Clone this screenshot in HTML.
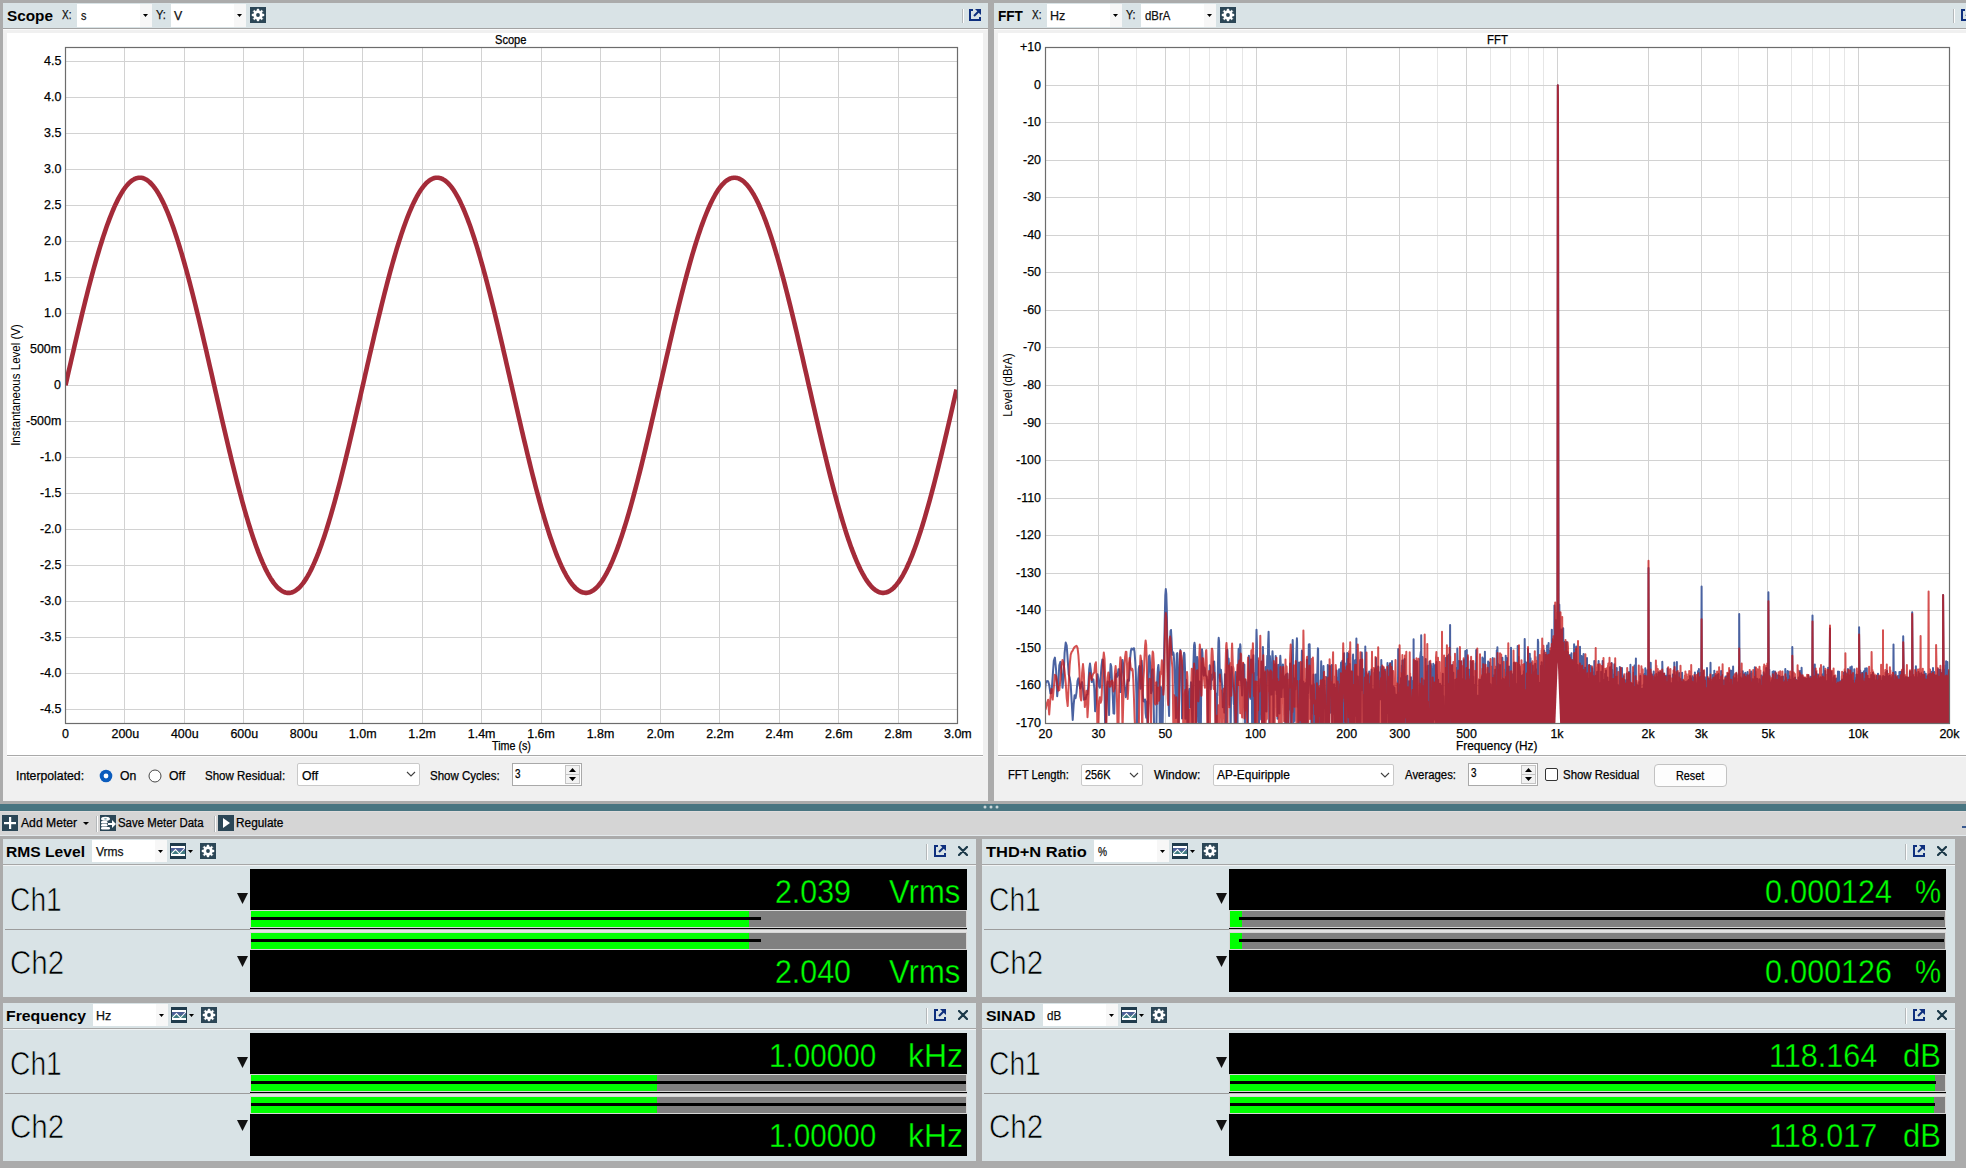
<!DOCTYPE html><html><head><meta charset="utf-8"><style>*{margin:0;padding:0}body{width:1966px;height:1168px;overflow:hidden;position:relative;background:#ababab}body>div,body>svg{position:absolute}.t{position:absolute;white-space:pre;font-family:'Liberation Sans',sans-serif}</style></head><body><div style="left:0px;top:0px;width:1966px;height:1168px;background:#ababab;"></div><div style="left:3px;top:3px;width:985px;height:25px;background:#d9e3e6;"></div><div style="left:3px;top:28px;width:985px;height:1px;background:#a3a3a3;"></div><div style="left:3px;top:29px;width:985px;height:772px;background:#f0f0f0;"></div><div style="left:3px;top:29px;width:985px;height:1px;background:#fbfbfb;"></div><div style="left:7px;top:33px;width:976px;height:722px;background:#fff;"></div><div style="left:7px;top:755px;width:976px;height:1px;background:#a9a9a9;"></div><div style="left:7px;top:756px;width:976px;height:1px;background:#fcfcfc;"></div><div style="left:994px;top:3px;width:972px;height:25px;background:#d9e3e6;"></div><div style="left:994px;top:28px;width:972px;height:1px;background:#a3a3a3;"></div><div style="left:994px;top:29px;width:972px;height:772px;background:#f0f0f0;"></div><div style="left:994px;top:29px;width:972px;height:1px;background:#fbfbfb;"></div><div style="left:998px;top:33px;width:968px;height:722px;background:#fff;"></div><div style="left:998px;top:755px;width:968px;height:1px;background:#a9a9a9;"></div><div style="left:998px;top:756px;width:968px;height:1px;background:#fcfcfc;"></div><div style="left:0px;top:804px;width:1966px;height:7px;background:#487581;"></div><svg style="left:983px;top:805px;" width="4" height="4" viewBox="0 0 4 4"><circle cx="2" cy="2" r="1.5" fill="#c9d5d8"/></svg><svg style="left:989px;top:805px;" width="4" height="4" viewBox="0 0 4 4"><circle cx="2" cy="2" r="1.5" fill="#c9d5d8"/></svg><svg style="left:995px;top:805px;" width="4" height="4" viewBox="0 0 4 4"><circle cx="2" cy="2" r="1.5" fill="#c9d5d8"/></svg><div style="left:0px;top:811px;width:1966px;height:24px;background:#d5d5d5;"></div><div style="left:0px;top:811px;width:1966px;height:1px;background:#e0dcdc;"></div><div style="left:0px;top:835px;width:1966px;height:1px;background:#e3e9ec;"></div><div style="left:77px;top:4px;width:75px;height:23px;background:#fff;"></div><div style="left:140px;top:4px;width:12px;height:23px;background:#f7f7f7;"></div><svg style="left:143px;top:14px;" width="5" height="3" viewBox="0 0 5 3"><polygon points="0,0 5,0 2.5,3" fill="#000"/></svg><div style="left:171px;top:4px;width:75px;height:23px;background:#fff;"></div><div style="left:234px;top:4px;width:12px;height:23px;background:#f7f7f7;"></div><svg style="left:237px;top:14px;" width="5" height="3" viewBox="0 0 5 3"><polygon points="0,0 5,0 2.5,3" fill="#000"/></svg><svg style="left:250px;top:7px;" width="16" height="16" viewBox="0 0 16 16"><rect width="16" height="16" fill="#2b4656"/><g transform="translate(8,8)"><path d="M-1.72,-4.16 L-1.01,-4.38 L-0.95,-6.02 L0.95,-6.02 L1.01,-4.38 L1.72,-4.16 L2.38,-3.82 L3.59,-4.94 L4.94,-3.59 L3.82,-2.38 L4.16,-1.72 L4.38,-1.01 L6.02,-0.95 L6.02,0.95 L4.38,1.01 L4.16,1.72 L3.82,2.38 L4.94,3.59 L3.59,4.94 L2.38,3.82 L1.72,4.16 L1.01,4.38 L0.95,6.02 L-0.95,6.02 L-1.01,4.38 L-1.72,4.16 L-2.38,3.82 L-3.59,4.94 L-4.94,3.59 L-3.82,2.38 L-4.16,1.72 L-4.38,1.01 L-6.02,0.95 L-6.02,-0.95 L-4.38,-1.01 L-4.16,-1.72 L-3.82,-2.38 L-4.94,-3.59 L-3.59,-4.94 L-2.38,-3.82Z" fill="#fff" stroke="#fff" stroke-width="0.4" stroke-linejoin="round"/><circle r="1.9" fill="#2b4656"/></g></svg><div style="left:962px;top:9px;width:1px;height:14px;background:#b4b8ba;"></div><div style="left:963px;top:9px;width:1px;height:14px;background:#fdfdfd;"></div><svg style="left:969px;top:9px;" width="12" height="12" viewBox="0 0 12 12"><path d="M0,0 H4 V2 H2 V10 H10 V8 H12 V12 H0 Z" fill="#0e2f7e"/><path d="M6,0 H12 V6 Z" fill="#0e2f7e"/><line x1="5" y1="7" x2="9.5" y2="2.5" stroke="#0e2f7e" stroke-width="2"/></svg><div style="left:1047px;top:4px;width:75px;height:23px;background:#fff;"></div><div style="left:1110px;top:4px;width:12px;height:23px;background:#f7f7f7;"></div><svg style="left:1113px;top:14px;" width="5" height="3" viewBox="0 0 5 3"><polygon points="0,0 5,0 2.5,3" fill="#000"/></svg><div style="left:1141px;top:4px;width:75px;height:23px;background:#fff;"></div><div style="left:1204px;top:4px;width:12px;height:23px;background:#f7f7f7;"></div><svg style="left:1207px;top:14px;" width="5" height="3" viewBox="0 0 5 3"><polygon points="0,0 5,0 2.5,3" fill="#000"/></svg><svg style="left:1220px;top:7px;" width="16" height="16" viewBox="0 0 16 16"><rect width="16" height="16" fill="#2b4656"/><g transform="translate(8,8)"><path d="M-1.72,-4.16 L-1.01,-4.38 L-0.95,-6.02 L0.95,-6.02 L1.01,-4.38 L1.72,-4.16 L2.38,-3.82 L3.59,-4.94 L4.94,-3.59 L3.82,-2.38 L4.16,-1.72 L4.38,-1.01 L6.02,-0.95 L6.02,0.95 L4.38,1.01 L4.16,1.72 L3.82,2.38 L4.94,3.59 L3.59,4.94 L2.38,3.82 L1.72,4.16 L1.01,4.38 L0.95,6.02 L-0.95,6.02 L-1.01,4.38 L-1.72,4.16 L-2.38,3.82 L-3.59,4.94 L-4.94,3.59 L-3.82,2.38 L-4.16,1.72 L-4.38,1.01 L-6.02,0.95 L-6.02,-0.95 L-4.38,-1.01 L-4.16,-1.72 L-3.82,-2.38 L-4.94,-3.59 L-3.59,-4.94 L-2.38,-3.82Z" fill="#fff" stroke="#fff" stroke-width="0.4" stroke-linejoin="round"/><circle r="1.9" fill="#2b4656"/></g></svg><div style="left:1953px;top:9px;width:1px;height:14px;background:#b4b8ba;"></div><div style="left:1954px;top:9px;width:1px;height:14px;background:#fdfdfd;"></div><svg style="left:1961px;top:9px;" width="12" height="12" viewBox="0 0 12 12"><path d="M0,0 H4 V2 H2 V10 H10 V8 H12 V12 H0 Z" fill="#0e2f7e"/><path d="M6,0 H12 V6 Z" fill="#0e2f7e"/><line x1="5" y1="7" x2="9.5" y2="2.5" stroke="#0e2f7e" stroke-width="2"/></svg><svg style="left:0px;top:0px;" width="1966" height="800" viewBox="0 0 1966 800"><path d="M124.5,47V723M184.5,47V723M243.5,47V723M303.5,47V723M362.5,47V723M422.5,47V723M481.5,47V723M541.5,47V723M600.5,47V723M660.5,47V723M719.5,47V723M779.5,47V723M838.5,47V723M898.5,47V723M65,709.5H957M65,673.5H957M65,637.5H957M65,601.5H957M65,565.5H957M65,529.5H957M65,493.5H957M65,457.5H957M65,421.5H957M65,385.5H957M65,349.5H957M65,313.5H957M65,277.5H957M65,241.5H957M65,205.5H957M65,169.5H957M65,133.5H957M65,97.5H957M65,61.5H957" stroke="#d2d2d2" stroke-width="1" fill="none"/><clipPath id="sc"><rect x="66" y="48" width="891" height="675"/></clipPath><polyline clip-path="url(#sc)" points="65.5,385.3 66.5,380.9 67.5,376.5 68.5,372.1 69.5,367.8 70.5,363.4 71.5,359.0 72.5,354.7 73.5,350.4 74.5,346.1 75.5,341.8 76.5,337.5 77.5,333.2 78.5,329.0 79.5,324.8 80.5,320.6 81.5,316.4 82.5,312.3 83.5,308.2 84.5,304.2 85.5,300.1 86.5,296.2 87.5,292.2 88.5,288.3 89.5,284.5 90.5,280.7 91.5,276.9 92.5,273.2 93.5,269.5 94.5,265.9 95.5,262.3 96.5,258.8 97.5,255.4 98.5,252.0 99.5,248.6 100.5,245.4 101.5,242.2 102.5,239.0 103.5,235.9 104.5,232.9 105.5,230.0 106.5,227.1 107.5,224.3 108.5,221.6 109.5,218.9 110.5,216.3 111.5,213.8 112.5,211.4 113.5,209.0 114.5,206.7 115.5,204.5 116.5,202.4 117.5,200.4 118.5,198.4 119.5,196.6 120.5,194.8 121.5,193.1 122.5,191.5 123.5,189.9 124.5,188.5 125.5,187.1 126.5,185.9 127.5,184.7 128.5,183.6 129.5,182.6 130.5,181.7 131.5,180.9 132.5,180.2 133.5,179.6 134.5,179.0 135.5,178.6 136.5,178.2 137.5,178.0 138.5,177.8 139.5,177.7 140.5,177.7 141.5,177.8 142.5,178.0 143.5,178.3 144.5,178.7 145.5,179.2 146.5,179.8 147.5,180.4 148.5,181.2 149.5,182.0 150.5,183.0 151.5,184.0 152.5,185.1 153.5,186.3 154.5,187.6 155.5,189.0 156.5,190.4 157.5,192.0 158.5,193.6 159.5,195.4 160.5,197.2 161.5,199.1 162.5,201.1 163.5,203.1 164.5,205.3 165.5,207.5 166.5,209.8 167.5,212.2 168.5,214.6 169.5,217.2 170.5,219.8 171.5,222.5 172.5,225.2 173.5,228.1 174.5,231.0 175.5,233.9 176.5,237.0 177.5,240.1 178.5,243.2 179.5,246.5 180.5,249.8 181.5,253.1 182.5,256.5 183.5,260.0 184.5,263.5 185.5,267.1 186.5,270.7 187.5,274.4 188.5,278.1 189.5,281.9 190.5,285.8 191.5,289.6 192.5,293.5 193.5,297.5 194.5,301.5 195.5,305.5 196.5,309.6 197.5,313.7 198.5,317.8 199.5,322.0 200.5,326.2 201.5,330.4 202.5,334.6 203.5,338.9 204.5,343.2 205.5,347.5 206.5,351.8 207.5,356.2 208.5,360.5 209.5,364.9 210.5,369.2 211.5,373.6 212.5,378.0 213.5,382.4 214.5,386.8 215.5,391.2 216.5,395.5 217.5,399.9 218.5,404.3 219.5,408.7 220.5,413.0 221.5,417.4 222.5,421.7 223.5,426.0 224.5,430.3 225.5,434.6 226.5,438.8 227.5,443.0 228.5,447.2 229.5,451.4 230.5,455.5 231.5,459.7 232.5,463.7 233.5,467.8 234.5,471.8 235.5,475.8 236.5,479.7 237.5,483.6 238.5,487.4 239.5,491.2 240.5,495.0 241.5,498.7 242.5,502.3 243.5,505.9 244.5,509.5 245.5,512.9 246.5,516.4 247.5,519.7 248.5,523.1 249.5,526.3 250.5,529.5 251.5,532.6 252.5,535.7 253.5,538.7 254.5,541.6 255.5,544.4 256.5,547.2 257.5,549.9 258.5,552.6 259.5,555.1 260.5,557.6 261.5,560.0 262.5,562.4 263.5,564.6 264.5,566.8 265.5,568.9 266.5,570.9 267.5,572.8 268.5,574.6 269.5,576.4 270.5,578.1 271.5,579.7 272.5,581.1 273.5,582.6 274.5,583.9 275.5,585.1 276.5,586.3 277.5,587.3 278.5,588.3 279.5,589.2 280.5,589.9 281.5,590.6 282.5,591.2 283.5,591.7 284.5,592.2 285.5,592.5 286.5,592.7 287.5,592.9 288.5,592.9 289.5,592.9 290.5,592.7 291.5,592.5 292.5,592.2 293.5,591.7 294.5,591.2 295.5,590.6 296.5,589.9 297.5,589.2 298.5,588.3 299.5,587.3 300.5,586.3 301.5,585.1 302.5,583.9 303.5,582.6 304.5,581.1 305.5,579.6 306.5,578.1 307.5,576.4 308.5,574.6 309.5,572.8 310.5,570.9 311.5,568.9 312.5,566.8 313.5,564.6 314.5,562.3 315.5,560.0 316.5,557.6 317.5,555.1 318.5,552.6 319.5,549.9 320.5,547.2 321.5,544.4 322.5,541.6 323.5,538.7 324.5,535.7 325.5,532.6 326.5,529.5 327.5,526.3 328.5,523.0 329.5,519.7 330.5,516.4 331.5,512.9 332.5,509.4 333.5,505.9 334.5,502.3 335.5,498.6 336.5,494.9 337.5,491.2 338.5,487.4 339.5,483.6 340.5,479.7 341.5,475.7 342.5,471.8 343.5,467.8 344.5,463.7 345.5,459.6 346.5,455.5 347.5,451.4 348.5,447.2 349.5,443.0 350.5,438.8 351.5,434.5 352.5,430.3 353.5,426.0 354.5,421.7 355.5,417.3 356.5,413.0 357.5,408.6 358.5,404.3 359.5,399.9 360.5,395.5 361.5,391.1 362.5,386.7 363.5,382.4 364.5,378.0 365.5,373.6 366.5,369.2 367.5,364.8 368.5,360.5 369.5,356.1 370.5,351.8 371.5,347.5 372.5,343.2 373.5,338.9 374.5,334.6 375.5,330.4 376.5,326.2 377.5,322.0 378.5,317.8 379.5,313.7 380.5,309.6 381.5,305.5 382.5,301.5 383.5,297.5 384.5,293.5 385.5,289.6 386.5,285.7 387.5,281.9 388.5,278.1 389.5,274.4 390.5,270.7 391.5,267.1 392.5,263.5 393.5,260.0 394.5,256.5 395.5,253.1 396.5,249.7 397.5,246.4 398.5,243.2 399.5,240.1 400.5,237.0 401.5,233.9 402.5,230.9 403.5,228.0 404.5,225.2 405.5,222.5 406.5,219.8 407.5,217.2 408.5,214.6 409.5,212.2 410.5,209.8 411.5,207.5 412.5,205.3 413.5,203.1 414.5,201.1 415.5,199.1 416.5,197.2 417.5,195.4 418.5,193.6 419.5,192.0 420.5,190.4 421.5,189.0 422.5,187.6 423.5,186.3 424.5,185.1 425.5,184.0 426.5,182.9 427.5,182.0 428.5,181.2 429.5,180.4 430.5,179.8 431.5,179.2 432.5,178.7 433.5,178.3 434.5,178.0 435.5,177.8 436.5,177.7 437.5,177.7 438.5,177.8 439.5,178.0 440.5,178.2 441.5,178.6 442.5,179.0 443.5,179.6 444.5,180.2 445.5,180.9 446.5,181.7 447.5,182.6 448.5,183.6 449.5,184.7 450.5,185.9 451.5,187.2 452.5,188.5 453.5,189.9 454.5,191.5 455.5,193.1 456.5,194.8 457.5,196.6 458.5,198.4 459.5,200.4 460.5,202.4 461.5,204.6 462.5,206.8 463.5,209.0 464.5,211.4 465.5,213.8 466.5,216.3 467.5,218.9 468.5,221.6 469.5,224.3 470.5,227.1 471.5,230.0 472.5,232.9 473.5,236.0 474.5,239.0 475.5,242.2 476.5,245.4 477.5,248.7 478.5,252.0 479.5,255.4 480.5,258.8 481.5,262.3 482.5,265.9 483.5,269.5 484.5,273.2 485.5,276.9 486.5,280.7 487.5,284.5 488.5,288.3 489.5,292.2 490.5,296.2 491.5,300.2 492.5,304.2 493.5,308.2 494.5,312.3 495.5,316.5 496.5,320.6 497.5,324.8 498.5,329.0 499.5,333.2 500.5,337.5 501.5,341.8 502.5,346.1 503.5,350.4 504.5,354.7 505.5,359.1 506.5,363.4 507.5,367.8 508.5,372.2 509.5,376.6 510.5,380.9 511.5,385.3 512.5,389.7 513.5,394.1 514.5,398.5 515.5,402.8 516.5,407.2 517.5,411.6 518.5,415.9 519.5,420.3 520.5,424.6 521.5,428.9 522.5,433.1 523.5,437.4 524.5,441.6 525.5,445.8 526.5,450.0 527.5,454.2 528.5,458.3 529.5,462.4 530.5,466.5 531.5,470.5 532.5,474.5 533.5,478.4 534.5,482.3 535.5,486.2 536.5,490.0 537.5,493.7 538.5,497.4 539.5,501.1 540.5,504.7 541.5,508.3 542.5,511.8 543.5,515.2 544.5,518.6 545.5,522.0 546.5,525.2 547.5,528.4 548.5,531.6 549.5,534.7 550.5,537.7 551.5,540.6 552.5,543.5 553.5,546.3 554.5,549.0 555.5,551.7 556.5,554.3 557.5,556.8 558.5,559.2 559.5,561.6 560.5,563.9 561.5,566.1 562.5,568.2 563.5,570.2 564.5,572.2 565.5,574.0 566.5,575.8 567.5,577.5 568.5,579.1 569.5,580.7 570.5,582.1 571.5,583.5 572.5,584.7 573.5,585.9 574.5,587.0 575.5,588.0 576.5,588.9 577.5,589.7 578.5,590.4 579.5,591.0 580.5,591.6 581.5,592.0 582.5,592.4 583.5,592.6 584.5,592.8 585.5,592.9 586.5,592.9 587.5,592.8 588.5,592.6 589.5,592.3 590.5,591.9 591.5,591.4 592.5,590.8 593.5,590.2 594.5,589.4 595.5,588.6 596.5,587.6 597.5,586.6 598.5,585.5 599.5,584.3 600.5,583.0 601.5,581.6 602.5,580.1 603.5,578.6 604.5,576.9 605.5,575.2 606.5,573.4 607.5,571.5 608.5,569.5 609.5,567.5 610.5,565.3 611.5,563.1 612.5,560.8 613.5,558.4 614.5,555.9 615.5,553.4 616.5,550.8 617.5,548.1 618.5,545.4 619.5,542.5 620.5,539.6 621.5,536.7 622.5,533.6 623.5,530.5 624.5,527.3 625.5,524.1 626.5,520.8 627.5,517.5 628.5,514.1 629.5,510.6 630.5,507.1 631.5,503.5 632.5,499.9 633.5,496.2 634.5,492.4 635.5,488.7 636.5,484.8 637.5,481.0 638.5,477.0 639.5,473.1 640.5,469.1 641.5,465.1 642.5,461.0 643.5,456.9 644.5,452.8 645.5,448.6 646.5,444.4 647.5,440.2 648.5,435.9 649.5,431.7 650.5,427.4 651.5,423.1 652.5,418.8 653.5,414.4 654.5,410.1 655.5,405.7 656.5,401.3 657.5,397.0 658.5,392.6 659.5,388.2 660.5,383.8 661.5,379.4 662.5,375.0 663.5,370.7 664.5,366.3 665.5,361.9 666.5,357.6 667.5,353.2 668.5,348.9 669.5,344.6 670.5,340.3 671.5,336.0 672.5,331.8 673.5,327.5 674.5,323.3 675.5,319.2 676.5,315.0 677.5,310.9 678.5,306.8 679.5,302.8 680.5,298.8 681.5,294.8 682.5,290.9 683.5,287.0 684.5,283.2 685.5,279.4 686.5,275.6 687.5,271.9 688.5,268.3 689.5,264.7 690.5,261.1 691.5,257.6 692.5,254.2 693.5,250.8 694.5,247.5 695.5,244.3 696.5,241.1 697.5,238.0 698.5,234.9 699.5,231.9 700.5,229.0 701.5,226.1 702.5,223.4 703.5,220.7 704.5,218.0 705.5,215.5 706.5,213.0 707.5,210.6 708.5,208.2 709.5,206.0 710.5,203.8 711.5,201.7 712.5,199.7 713.5,197.8 714.5,196.0 715.5,194.2 716.5,192.5 717.5,190.9 718.5,189.4 719.5,188.0 720.5,186.7 721.5,185.5 722.5,184.3 723.5,183.3 724.5,182.3 725.5,181.4 726.5,180.7 727.5,180.0 728.5,179.4 729.5,178.9 730.5,178.4 731.5,178.1 732.5,177.9 733.5,177.7 734.5,177.7 735.5,177.7 736.5,177.9 737.5,178.1 738.5,178.4 739.5,178.9 740.5,179.4 741.5,180.0 742.5,180.7 743.5,181.4 744.5,182.3 745.5,183.3 746.5,184.3 747.5,185.5 748.5,186.7 749.5,188.1 750.5,189.5 751.5,191.0 752.5,192.6 753.5,194.2 754.5,196.0 755.5,197.8 756.5,199.7 757.5,201.8 758.5,203.8 759.5,206.0 760.5,208.3 761.5,210.6 762.5,213.0 763.5,215.5 764.5,218.1 765.5,220.7 766.5,223.4 767.5,226.2 768.5,229.0 769.5,232.0 770.5,235.0 771.5,238.0 772.5,241.1 773.5,244.3 774.5,247.6 775.5,250.9 776.5,254.3 777.5,257.7 778.5,261.2 779.5,264.7 780.5,268.3 781.5,272.0 782.5,275.7 783.5,279.4 784.5,283.2 785.5,287.1 786.5,291.0 787.5,294.9 788.5,298.9 789.5,302.9 790.5,306.9 791.5,311.0 792.5,315.1 793.5,319.2 794.5,323.4 795.5,327.6 796.5,331.8 797.5,336.1 798.5,340.4 799.5,344.7 800.5,349.0 801.5,353.3 802.5,357.6 803.5,362.0 804.5,366.4 805.5,370.7 806.5,375.1 807.5,379.5 808.5,383.9 809.5,388.3 810.5,392.6 811.5,397.0 812.5,401.4 813.5,405.8 814.5,410.1 815.5,414.5 816.5,418.8 817.5,423.1 818.5,427.4 819.5,431.7 820.5,436.0 821.5,440.2 822.5,444.5 823.5,448.7 824.5,452.8 825.5,456.9 826.5,461.0 827.5,465.1 828.5,469.1 829.5,473.1 830.5,477.1 831.5,481.0 832.5,484.9 833.5,488.7 834.5,492.5 835.5,496.2 836.5,499.9 837.5,503.5 838.5,507.1 839.5,510.6 840.5,514.1 841.5,517.5 842.5,520.9 843.5,524.2 844.5,527.4 845.5,530.6 846.5,533.7 847.5,536.7 848.5,539.7 849.5,542.6 850.5,545.4 851.5,548.2 852.5,550.8 853.5,553.4 854.5,556.0 855.5,558.4 856.5,560.8 857.5,563.1 858.5,565.3 859.5,567.5 860.5,569.6 861.5,571.5 862.5,573.4 863.5,575.2 864.5,577.0 865.5,578.6 866.5,580.2 867.5,581.6 868.5,583.0 869.5,584.3 870.5,585.5 871.5,586.6 872.5,587.7 873.5,588.6 874.5,589.4 875.5,590.2 876.5,590.8 877.5,591.4 878.5,591.9 879.5,592.3 880.5,592.6 881.5,592.8 882.5,592.9 883.5,592.9 884.5,592.8 885.5,592.6 886.5,592.4 887.5,592.0 888.5,591.6 889.5,591.0 890.5,590.4 891.5,589.7 892.5,588.9 893.5,588.0 894.5,587.0 895.5,585.9 896.5,584.7 897.5,583.4 898.5,582.1 899.5,580.6 900.5,579.1 901.5,577.5 902.5,575.8 903.5,574.0 904.5,572.1 905.5,570.2 906.5,568.2 907.5,566.0 908.5,563.8 909.5,561.6 910.5,559.2 911.5,556.8 912.5,554.3 913.5,551.7 914.5,549.0 915.5,546.3 916.5,543.5 917.5,540.6 918.5,537.6 919.5,534.6 920.5,531.5 921.5,528.4 922.5,525.2 923.5,521.9 924.5,518.6 925.5,515.2 926.5,511.7 927.5,508.2 928.5,504.7 929.5,501.1 930.5,497.4 931.5,493.7 932.5,489.9 933.5,486.1 934.5,482.2 935.5,478.3 936.5,474.4 937.5,470.4 938.5,466.4 939.5,462.3 940.5,458.2 941.5,454.1 942.5,450.0 943.5,445.8 944.5,441.6 945.5,437.3 946.5,433.1 947.5,428.8 948.5,424.5 949.5,420.2 950.5,415.9 951.5,411.5 952.5,407.2 953.5,402.8 954.5,398.4 955.5,394.0 956.5,389.6" fill="none" stroke="#a42b39" stroke-width="4.6" stroke-linejoin="round"/><rect x="65.5" y="47.5" width="892" height="676" fill="none" stroke="#6c6c6c" stroke-width="1.2"/></svg><svg style="left:0px;top:0px;" width="1966" height="800" viewBox="0 0 1966 800"><path d="M1136.5,47V723M1189.5,47V723M1209.5,47V723M1226.5,47V723M1242.5,47V723M1437.5,47V723M1490.5,47V723M1510.5,47V723M1528.5,47V723M1543.5,47V723M1738.5,47V723M1791.5,47V723M1812.5,47V723M1829.5,47V723M1844.5,47V723" stroke="#e6e6e6" stroke-width="1" fill="none"/><path d="M1098.5,47V723M1165.5,47V723M1256.5,47V723M1346.5,47V723M1399.5,47V723M1466.5,47V723M1557.5,47V723M1648.5,47V723M1701.5,47V723M1767.5,47V723M1858.5,47V723M1045,85.5H1949M1045,122.5H1949M1045,160.5H1949M1045,197.5H1949M1045,235.5H1949M1045,272.5H1949M1045,310.5H1949M1045,347.5H1949M1045,385.5H1949M1045,423.5H1949M1045,460.5H1949M1045,498.5H1949M1045,535.5H1949M1045,573.5H1949M1045,610.5H1949M1045,648.5H1949M1045,685.5H1949" stroke="#d2d2d2" stroke-width="1" fill="none"/><clipPath id="fc"><rect x="1046" y="48" width="903" height="675"/></clipPath><g clip-path="url(#fc)"><polyline points="1031.8,684.2 1033.1,681.0 1034.4,699.4 1035.7,693.1 1037.0,660.4 1038.3,649.8 1039.5,653.1 1040.8,665.8 1042.0,687.5 1043.3,714.2 1044.5,696.4 1045.7,683.1 1046.9,681.1 1048.1,681.2 1049.2,684.9 1050.4,693.4 1051.5,693.1 1052.7,676.3 1053.8,660.8 1054.9,657.6 1056.1,670.0 1057.2,696.2 1058.3,683.8 1059.3,665.3 1060.4,661.9 1061.5,670.5 1062.5,687.8 1063.6,677.5 1064.6,652.9 1065.7,642.6 1066.7,645.5 1067.7,659.5 1068.7,674.5 1069.7,677.8 1070.7,684.3 1071.7,702.1 1072.7,719.9 1073.7,704.3 1074.6,695.2 1075.6,698.1 1076.5,692.6 1077.5,681.0 1078.4,678.4 1079.4,684.8 1080.3,688.6 1081.2,684.7 1082.1,682.1 1083.0,688.8 1083.9,699.7 1084.8,698.4 1085.7,699.1 1086.6,694.8 1087.5,694.4 1088.3,686.0 1089.2,669.1 1090.0,663.5 1090.9,670.7 1091.7,681.9 1092.6,681.1 1093.4,679.4 1094.3,688.5 1095.1,711.3 1095.9,703.3 1096.7,681.0 1097.5,674.3 1098.3,678.3 1099.1,686.5 1099.9,687.7 1100.7,677.5 1101.5,665.9 1102.3,659.6 1103.1,660.1 1103.8,669.8 1104.6,696.1 1105.4,740.0 1106.1,714.5 1106.9,688.6 1107.6,681.4 1108.4,694.3 1109.1,715.1 1109.8,678.5 1110.6,664.1 1111.3,666.7 1112.0,680.1 1112.8,697.4 1113.5,713.4 1114.2,713.7 1114.9,690.5 1115.6,676.2 1116.3,673.8 1117.0,676.8 1117.7,675.1 1118.4,669.3 1119.1,669.2 1119.8,679.2 1120.4,692.1 1121.1,683.3 1121.8,667.7 1122.5,660.0 1123.1,663.6 1123.8,675.4 1124.4,683.4 1125.1,690.5 1125.8,697.2 1126.4,693.2 1127.0,684.8 1127.7,680.1 1128.3,679.6 1129.0,680.7 1129.6,670.5 1130.2,657.7 1130.9,650.8 1131.5,648.6 1132.1,648.9 1132.7,649.5 1133.3,648.4 1134.0,648.2 1134.6,652.5 1135.2,661.1 1135.8,672.2 1136.4,693.3 1137.0,740.0 1137.6,704.2 1138.2,678.8 1138.8,668.6 1139.3,666.0 1139.9,674.0 1140.5,688.7 1141.1,672.4 1141.7,660.8 1142.2,669.0 1142.8,693.8 1143.4,701.3 1144.0,700.1 1144.5,701.7 1145.1,699.4 1145.6,713.2 1146.2,717.7 1146.8,701.5 1147.3,720.1 1147.9,728.7 1148.4,673.6 1149.0,656.5 1149.5,655.3 1150.0,662.3 1150.6,674.7 1151.1,693.2 1151.7,687.4 1152.2,670.5 1152.7,669.4 1153.2,684.0 1153.8,710.0 1154.3,739.7 1154.8,740.0 1155.3,733.7 1155.9,740.0 1156.4,727.4 1156.9,690.0 1157.4,676.3 1157.9,668.5 1158.4,664.9 1158.9,671.8 1159.4,694.5 1159.9,738.0 1160.4,707.8 1160.9,686.9 1161.4,690.6 1161.9,728.0 1162.4,740.0 1162.9,709.7 1163.4,683.8 1163.9,661.0 1164.4,637.2 1164.9,612.5 1165.3,595.4 1165.8,589.0 1166.3,593.8 1166.8,609.8 1167.2,635.9 1167.7,664.2 1168.2,681.5 1168.7,705.8 1169.1,715.9 1169.6,668.2 1170.1,642.6 1170.5,631.0 1171.0,630.0 1171.4,637.0 1171.9,647.8 1172.4,654.7 1172.8,654.1 1173.3,652.4 1173.7,654.5 1174.2,661.8 1174.6,673.2 1175.1,684.2 1175.5,699.7 1176.0,718.1 1176.4,674.6 1176.8,654.0 1177.3,653.1 1177.7,671.4 1178.2,720.3 1178.6,740.0 1179.0,706.0 1179.5,672.3 1179.9,654.8 1180.3,650.1 1180.7,655.4 1181.2,668.3 1181.6,688.7 1182.0,718.5 1182.4,696.3 1182.9,671.7 1183.3,661.4 1183.7,656.2 1184.1,652.7 1184.5,654.3 1185.0,668.9 1185.4,718.8 1185.8,706.5 1186.2,679.8 1186.6,683.0 1187.0,700.8 1187.4,724.3 1187.8,740.0 1188.2,731.8 1188.6,706.4 1189.0,691.9 1189.4,689.0 1189.8,699.1 1190.2,707.0 1190.6,690.2 1191.0,682.2 1191.4,691.0 1191.8,708.2 1192.2,718.5 1192.6,740.0 1193.0,700.5 1193.4,666.4 1193.8,651.5 1194.1,645.1 1194.5,642.8 1194.9,645.1 1195.3,657.5 1195.7,691.3 1196.1,740.0 1196.4,691.8 1196.8,668.3 1197.2,656.9 1197.6,659.9 1198.0,680.3 1198.3,721.4 1198.7,723.0 1199.1,693.1 1199.4,681.4 1199.8,689.8 1200.2,717.7 1200.5,740.0 1200.9,724.6 1201.3,673.3 1201.6,653.9 1202.0,649.3 1202.4,652.6 1202.7,659.9 1203.1,668.5 1203.5,674.9 1203.8,675.6 1204.2,671.0 1204.5,667.6 1204.9,668.8 1205.2,672.5 1205.6,675.1 1206.0,675.8 1206.3,676.1 1206.7,677.0 1207.0,680.4 1207.4,685.9 1207.7,700.8 1208.0,725.3 1208.4,694.3 1208.7,680.3 1209.1,681.4 1209.4,675.2 1209.8,665.2 1210.1,666.8 1210.5,682.6 1210.8,689.2 1211.1,676.7 1211.5,674.8 1211.8,679.2 1212.1,679.8 1212.5,678.4 1212.8,677.7 1213.2,672.0 1213.5,665.0 1213.8,661.7 1214.2,661.5 1214.5,666.4 1214.8,677.6 1215.1,692.2 1215.5,709.2 1215.8,729.3 1216.1,710.3 1216.5,712.3 1216.8,722.8 1217.1,693.3 1217.4,695.4 1217.7,685.3 1218.1,657.0 1218.4,642.5 1218.7,637.8 1219.1,641.5 1219.9,678.2 1220.3,681.5 1220.6,674.0 1220.9,669.7 1221.2,672.4 1221.6,679.0 1221.9,683.1 1222.2,686.6 1222.5,693.7 1222.8,707.2 1223.1,705.4 1223.4,693.6 1223.7,696.8 1224.1,705.4 1224.4,712.6 1224.9,674.2 1225.3,676.8 1225.6,707.5 1225.9,740.0 1226.2,740.0 1226.5,735.8 1226.8,671.8 1227.1,651.0 1227.4,649.7 1227.9,661.2 1228.3,658.8 1228.6,658.5 1228.9,662.6 1229.2,672.2 1229.5,695.3 1229.7,704.9 1230.1,681.7 1230.6,735.5 1230.9,710.9 1231.2,675.5 1231.5,666.9 1231.8,668.8 1232.1,674.6 1232.9,683.2 1233.2,687.9 1233.5,697.8 1233.8,704.3 1234.1,703.0 1234.9,737.5 1235.2,696.5 1235.5,675.2 1235.8,671.9 1236.1,692.4 1236.4,725.7 1236.9,677.2 1237.2,697.9 1237.5,740.0 1237.7,694.1 1238.1,665.9 1238.6,648.7 1238.9,657.2 1239.1,672.8 1239.4,679.8 1239.9,652.9 1240.2,644.2 1240.5,646.5 1240.7,661.4 1241.1,681.0 1241.9,690.2 1242.1,695.5 1242.9,671.6 1243.1,665.8 1243.4,663.4 1243.9,668.7 1244.1,665.2 1244.4,664.8 1244.9,740.0 1245.3,695.1 1245.5,680.0 1245.8,688.4 1246.1,703.0 1246.6,682.6 1246.9,684.3 1247.1,706.7 1247.9,725.3 1248.1,690.1 1248.9,655.8 1249.1,660.4 1249.9,672.9 1250.1,692.2 1250.4,698.7 1250.9,663.0 1251.1,659.4 1251.9,692.5 1252.1,723.0 1252.9,670.1 1253.1,658.6 1253.4,655.2 1253.9,691.1 1254.1,740.0 1254.6,673.1 1254.9,686.2 1255.1,732.8 1255.4,740.0 1255.9,678.4 1256.1,655.0 1256.5,629.7 1256.9,642.8 1257.1,661.3 1257.4,674.7 1257.9,660.6 1258.1,669.2 1258.9,740.0 1259.1,713.2 1259.4,698.5 1259.9,719.5 1260.1,707.2 1260.5,679.0 1260.9,702.2 1261.1,678.8 1261.4,661.6 1261.9,681.1 1262.1,740.0 1262.9,647.0 1263.1,653.9 1263.9,740.0 1264.1,740.0 1264.9,672.6 1265.1,682.2 1265.3,695.8 1265.7,667.1 1265.9,675.8 1266.1,700.6 1266.4,711.5 1266.9,673.7 1267.1,662.2 1267.3,655.8 1267.7,664.7 1267.9,663.7 1268.1,644.9 1268.6,631.8 1268.9,646.0 1269.1,677.2 1269.3,740.0 1269.9,655.9 1270.1,662.5 1270.9,687.7 1271.1,692.3 1271.3,694.6 1271.9,672.1 1272.1,660.9 1272.5,651.3 1272.9,658.4 1273.1,670.3 1273.5,740.0 1273.9,676.7 1274.1,665.4 1274.4,664.4 1274.9,687.2 1275.1,689.8 1275.7,656.0 1275.9,662.5 1276.1,669.7 1276.7,694.2 1276.9,690.1 1277.1,693.4 1277.5,718.7 1277.9,677.7 1278.1,664.7 1278.5,682.8 1278.9,673.6 1279.1,673.9 1279.5,713.6 1279.9,671.8 1280.1,659.5 1280.3,655.8 1280.9,666.5 1281.1,672.4 1281.5,697.1 1281.9,683.8 1282.1,682.3 1282.3,688.4 1282.9,664.4 1283.1,666.4 1283.5,681.3 1283.9,676.9 1284.1,676.5 1284.5,697.2 1284.9,683.7 1285.1,697.7 1285.3,740.0 1285.9,674.4 1286.1,675.5 1286.4,740.0 1286.9,683.2 1287.1,677.1 1287.3,673.4 1287.9,731.1 1288.1,740.0 1288.5,692.8 1288.9,709.5 1289.1,705.6 1289.9,670.0 1290.1,663.6 1290.9,740.0 1291.1,721.9 1291.9,659.3 1292.1,657.0 1292.7,640.0 1292.9,646.6 1293.1,666.8 1293.4,740.0 1293.9,683.0 1294.1,681.4 1294.5,720.9 1294.9,678.3 1295.1,683.7 1295.2,689.8 1295.9,669.9 1296.1,662.4 1296.9,638.2 1297.1,642.9 1297.6,707.1 1297.9,691.1 1298.1,699.9 1298.4,740.0 1298.9,665.0 1299.1,662.6 1299.8,705.7 1299.9,698.7 1300.1,697.3 1300.8,736.3 1300.9,712.5 1301.1,696.3 1301.9,650.6 1302.1,652.2 1302.8,740.0 1302.9,728.9 1303.1,692.5 1303.4,681.8 1303.9,711.7 1304.1,731.6 1304.6,740.0 1304.9,709.5 1305.1,700.0 1305.4,683.2 1305.9,710.8 1306.1,723.2 1306.9,659.8 1307.1,669.5 1307.4,734.9 1307.9,688.5 1308.1,693.2 1308.8,644.5 1308.9,647.4 1309.1,661.6 1309.2,667.7 1309.6,644.2 1309.9,658.6 1310.1,680.9 1310.8,698.6 1310.9,696.3 1311.1,698.2 1311.4,740.0 1311.8,685.6 1311.9,691.6 1312.1,713.2 1312.4,699.3 1312.9,704.3 1313.1,696.1 1313.5,674.4 1313.9,740.0 1314.1,708.8 1314.2,702.2 1314.6,740.0 1314.9,716.1 1315.1,722.3 1315.2,740.0 1315.8,674.6 1315.9,685.4 1316.1,717.0 1316.6,696.7 1316.9,725.1 1317.1,681.6 1317.9,648.3 1318.1,648.8 1318.6,729.9 1318.9,705.0 1319.1,728.4 1319.2,740.0 1319.6,688.6 1319.9,707.1 1320.1,716.5 1320.4,740.0 1320.9,677.7 1321.1,665.7 1321.2,661.2 1321.9,697.5 1322.1,727.8 1322.2,740.0 1322.9,733.7 1323.1,698.0 1323.5,665.9 1323.9,695.1 1324.1,688.8 1324.2,680.4 1324.9,705.3 1325.1,709.3 1325.4,740.0 1325.9,728.6 1326.1,740.0 1326.8,677.1 1326.9,686.9 1327.1,703.1 1327.4,732.2 1327.8,665.1 1327.9,665.1 1328.1,685.4 1328.3,740.0 1328.9,728.1 1329.1,722.1 1329.8,666.0 1329.9,671.6 1330.1,699.4 1330.2,712.8 1330.5,668.0 1330.9,683.2 1331.1,678.0 1331.4,704.3 1331.8,665.1 1331.9,675.4 1332.1,697.0 1332.2,740.0 1332.6,692.6 1332.9,700.3 1333.1,696.6 1333.3,713.8 1333.6,684.4 1333.9,695.6 1334.1,689.2 1334.2,684.2 1334.8,740.0 1334.9,708.9 1335.1,687.8 1335.4,740.0 1335.9,740.0 1336.1,715.1 1336.3,740.0 1336.7,670.4 1336.9,704.7 1337.1,715.5 1337.5,677.4 1337.9,733.1 1338.1,740.0 1338.9,672.8 1339.1,669.2 1339.3,740.0 1339.9,690.6 1340.1,719.9 1340.2,721.0 1340.9,665.7 1341.1,662.4 1341.4,740.0 1341.9,695.7 1342.1,725.4 1342.4,660.7 1342.9,674.9 1343.1,677.3 1343.4,740.0 1343.9,661.7 1344.1,653.3 1344.6,740.0 1344.9,689.9 1345.1,690.1 1345.3,740.0 1345.7,667.6 1345.9,685.8 1346.1,681.4 1346.3,663.2 1346.9,665.6 1347.1,655.2 1347.2,653.0 1347.7,740.0 1347.9,740.0 1348.1,700.7 1348.4,653.7 1348.7,740.0 1348.9,674.1 1349.1,673.0 1349.2,681.5 1349.7,663.9 1349.9,678.3 1350.1,706.2 1350.4,740.0 1350.9,673.1 1351.1,671.6 1351.7,739.3 1351.9,697.6 1352.1,685.6 1352.4,740.0 1352.9,657.9 1353.1,654.5 1353.5,740.0 1353.9,734.7 1354.1,721.0 1354.2,740.0 1354.9,668.4 1355.1,660.3 1355.4,715.7 1355.9,693.8 1356.1,684.9 1356.4,638.5 1356.7,740.0 1356.9,740.0 1357.1,740.0 1357.8,676.6 1357.9,684.0 1358.1,690.8 1358.4,740.0 1358.7,687.4 1358.9,709.8 1359.0,740.0 1360.0,670.7 1360.1,661.2 1360.2,660.0 1360.5,740.0 1360.9,670.3 1361.1,672.5 1361.3,690.5 1361.8,652.5 1361.9,655.0 1362.0,665.9 1362.2,678.8 1363.0,668.9 1363.1,673.0 1363.7,740.0 1363.9,685.6 1364.1,686.9 1364.6,740.0 1364.9,704.6 1365.0,689.6 1365.3,646.5 1365.7,724.6 1366.0,671.8 1366.0,690.7 1366.2,740.0 1366.8,674.7 1367.0,683.7 1367.1,715.6 1367.2,740.0 1367.6,675.5 1367.9,719.7 1368.0,702.8 1368.2,680.9 1368.5,740.0 1369.0,685.0 1369.0,678.5 1369.2,671.5 1369.5,740.0 1370.0,739.8 1370.0,740.0 1371.0,696.2 1371.0,683.8 1371.5,669.5 1371.8,740.0 1372.0,740.0 1372.0,740.0 1372.8,689.6 1373.0,730.8 1373.0,740.0 1373.6,695.1 1374.0,740.0 1374.0,720.0 1374.5,672.7 1375.0,678.8 1375.0,669.1 1375.5,740.0 1376.0,661.6 1376.0,658.1 1376.5,715.8 1377.0,693.4 1377.0,740.0 1377.3,670.9 1378.0,685.7 1378.0,684.6 1378.2,666.4 1378.5,740.0 1379.0,688.8 1379.0,672.5 1379.5,672.5 1379.8,697.8 1380.0,680.4 1380.0,679.2 1380.5,699.3 1380.8,667.0 1381.0,694.5 1381.0,697.6 1381.3,660.0 1382.0,709.4 1382.0,711.4 1382.3,740.0 1382.8,667.0 1383.0,710.9 1383.0,740.0 1384.0,688.0 1384.0,670.8 1384.6,740.0 1385.0,669.5 1385.0,678.3 1385.3,740.0 1386.0,734.5 1386.0,740.0 1386.9,684.9 1387.0,686.1 1387.0,681.9 1387.5,663.0 1387.9,712.7 1388.0,705.4 1388.0,705.1 1388.3,665.6 1388.7,740.0 1389.0,740.0 1389.0,740.0 1390.0,675.4 1390.0,664.2 1390.1,663.0 1391.0,737.8 1391.0,740.0 1392.0,665.6 1392.0,661.0 1392.4,740.0 1393.0,700.8 1393.0,707.7 1393.5,686.4 1393.8,740.0 1394.0,740.0 1394.0,740.0 1394.4,687.7 1395.0,699.3 1395.0,701.3 1395.6,740.0 1396.0,694.8 1396.0,694.7 1396.2,740.0 1397.0,740.0 1397.0,731.1 1397.4,740.0 1397.8,681.2 1398.0,740.0 1398.0,682.2 1398.2,649.1 1398.7,740.0 1399.0,718.7 1399.0,729.6 1399.4,684.7 1399.8,740.0 1400.0,700.7 1400.0,701.7 1400.2,740.0 1401.0,677.9 1401.0,692.4 1401.1,740.0 1401.9,665.5 1402.0,674.4 1402.0,685.0 1402.3,660.4 1403.0,724.2 1403.0,740.0 1403.7,660.2 1404.0,671.7 1404.0,664.1 1404.3,740.0 1404.6,659.1 1405.0,697.5 1405.0,683.8 1405.3,740.0 1406.0,729.7 1406.0,723.6 1406.3,676.7 1407.0,709.0 1407.0,699.7 1407.3,675.7 1407.9,740.0 1408.0,711.9 1408.0,696.6 1408.8,740.0 1409.0,715.6 1409.0,687.9 1409.1,681.2 1409.7,740.0 1410.0,692.9 1410.0,707.8 1410.3,740.0 1411.0,678.7 1411.0,677.3 1412.0,734.4 1412.0,740.0 1413.0,680.8 1413.0,694.2 1413.2,740.0 1413.6,639.3 1414.0,740.0 1414.0,740.0 1414.4,674.8 1415.0,678.0 1415.0,683.0 1415.2,740.0 1415.6,661.0 1416.0,711.1 1416.0,733.6 1416.1,740.0 1416.8,691.7 1417.0,709.6 1417.0,702.5 1417.2,661.6 1418.0,740.0 1418.0,740.0 1418.8,699.6 1419.0,722.7 1419.0,740.0 1420.0,665.6 1420.0,659.5 1420.8,651.9 1421.0,740.0 1421.0,678.8 1421.2,635.3 1422.0,729.0 1422.0,740.0 1422.6,657.0 1423.0,725.0 1423.0,740.0 1423.7,688.9 1424.0,694.6 1424.0,680.5 1424.8,740.0 1425.0,740.0 1425.0,722.9 1425.4,740.0 1425.7,659.1 1426.0,689.6 1426.0,691.4 1426.2,671.6 1426.5,740.0 1427.0,691.2 1427.0,691.2 1427.3,740.0 1428.0,668.5 1428.0,665.7 1428.4,740.0 1429.0,685.3 1429.0,694.9 1429.5,661.7 1429.7,740.0 1430.0,728.7 1430.0,708.9 1430.7,709.2 1430.8,664.1 1431.0,673.2 1431.0,674.2 1431.2,666.0 1431.3,740.0 1432.0,685.2 1432.0,706.6 1432.1,740.0 1432.5,668.9 1433.0,723.3 1433.0,740.0 1433.3,663.8 1434.0,693.9 1434.0,718.0 1434.6,719.4 1434.8,666.0 1435.0,676.4 1435.0,680.4 1435.3,665.0 1435.7,740.0 1436.0,722.0 1436.0,740.0 1436.5,662.0 1437.0,679.9 1437.0,674.4 1437.5,740.0 1438.0,695.4 1438.0,683.6 1438.1,679.7 1438.3,740.0 1439.0,710.6 1439.0,720.2 1439.3,740.0 1439.7,688.4 1440.0,689.5 1440.0,683.7 1440.2,740.0 1441.0,736.5 1441.0,740.0 1441.6,685.8 1442.0,702.4 1442.0,718.3 1442.1,740.0 1442.8,673.8 1443.0,740.0 1443.0,729.8 1443.2,740.0 1443.3,695.9 1444.0,740.0 1444.0,740.0 1444.1,710.4 1445.0,718.3 1445.0,709.8 1445.3,738.6 1445.7,658.0 1446.0,711.0 1446.0,716.9 1446.1,740.0 1446.5,679.5 1447.0,686.4 1447.0,687.6 1447.1,740.0 1447.3,656.0 1448.0,666.1 1448.0,666.4 1448.6,740.0 1449.0,662.6 1449.0,654.4 1449.7,740.0 1450.0,713.6 1450.0,659.0 1450.1,625.0 1450.4,740.0 1451.0,665.7 1451.0,720.0 1451.1,740.0 1451.2,670.3 1452.0,702.3 1452.0,682.3 1452.2,665.0 1452.8,740.0 1453.0,677.3 1453.0,693.2 1453.3,672.8 1453.5,740.0 1454.0,740.0 1454.0,740.0 1454.7,695.3 1455.0,735.1 1455.0,708.3 1455.2,740.0 1455.4,679.8 1456.0,740.0 1456.0,740.0 1456.9,667.8 1457.0,685.8 1457.0,739.0 1457.1,740.0 1457.3,648.5 1458.0,682.0 1458.0,700.6 1458.2,671.1 1458.8,740.0 1459.0,680.5 1459.0,664.0 1459.1,660.9 1459.2,740.0 1460.0,740.0 1460.0,740.0 1460.8,676.7 1461.0,677.4 1461.0,665.6 1461.1,661.3 1461.2,740.0 1462.0,711.5 1462.0,717.6 1462.4,740.0 1462.6,679.1 1463.0,714.4 1463.0,740.0 1463.6,660.2 1464.0,678.7 1464.0,683.8 1464.4,740.0 1464.6,669.8 1465.0,740.0 1465.0,740.0 1465.3,650.9 1466.0,675.1 1466.0,670.9 1466.6,740.0 1466.8,650.0 1467.0,720.8 1467.0,740.0 1467.5,657.0 1468.0,725.4 1468.0,705.5 1468.3,681.7 1468.8,740.0 1469.0,697.6 1469.0,704.8 1469.1,740.0 1469.2,669.7 1470.0,706.9 1470.0,735.4 1470.1,740.0 1470.6,661.0 1471.0,674.1 1471.0,689.8 1471.5,663.7 1471.6,740.0 1472.0,701.0 1472.0,679.7 1472.3,740.0 1472.6,661.4 1473.0,689.6 1473.0,701.0 1473.1,740.0 1473.2,676.4 1474.0,740.0 1474.0,724.6 1474.1,740.0 1474.9,684.8 1475.0,710.3 1475.0,733.2 1475.6,740.0 1475.8,663.3 1476.0,702.7 1476.0,695.1 1476.2,650.1 1476.3,740.0 1477.0,740.0 1477.0,740.0 1477.6,695.8 1478.0,725.9 1478.0,722.5 1478.1,714.2 1478.2,740.0 1479.0,740.0 1479.0,740.0 1479.3,680.3 1480.0,700.6 1480.0,708.6 1480.1,740.0 1480.2,679.7 1481.0,713.8 1481.0,712.7 1481.2,740.0 1481.8,677.0 1482.0,731.9 1482.0,734.1 1482.4,657.6 1482.7,740.0 1483.0,705.4 1483.0,684.1 1483.2,658.4 1483.5,740.0 1484.0,740.0 1484.0,740.0 1484.9,651.8 1485.0,666.3 1485.0,690.5 1485.1,740.0 1485.9,674.1 1486.0,700.3 1486.0,726.9 1486.3,740.0 1486.6,682.6 1487.0,719.2 1487.0,721.3 1487.2,740.0 1488.0,672.1 1488.0,682.1 1488.1,661.5 1488.4,740.0 1489.0,711.5 1489.0,701.7 1489.2,662.5 1489.8,740.0 1490.0,734.9 1490.0,716.9 1490.1,740.0 1490.4,684.3 1491.0,740.0 1491.0,740.0 1491.7,702.6 1492.0,740.0 1492.0,740.0 1492.7,657.9 1493.0,732.7 1493.0,740.0 1493.5,675.2 1494.0,701.2 1494.0,734.9 1494.1,740.0 1495.0,675.0 1495.0,679.3 1495.1,740.0 1495.2,669.8 1496.0,740.0 1496.0,740.0 1496.8,650.2 1497.0,740.0 1497.0,722.5 1497.2,740.0 1497.4,647.2 1498.0,702.8 1498.0,688.8 1498.1,664.1 1498.5,740.0 1499.0,704.5 1499.0,724.9 1499.6,740.0 1500.0,672.6 1500.0,665.0 1500.2,740.0 1501.0,737.6 1501.0,740.0 1502.0,679.7 1502.0,685.6 1502.1,740.0 1502.4,657.8 1503.0,740.0 1503.0,725.9 1503.3,740.0 1503.7,679.2 1504.0,707.6 1504.0,728.2 1504.1,740.0 1504.3,688.5 1505.0,740.0 1505.0,740.0 1505.7,655.7 1506.0,695.9 1506.0,674.3 1506.4,740.0 1507.0,658.1 1507.0,659.3 1507.4,740.0 1508.0,731.7 1508.0,734.4 1508.1,740.0 1509.0,667.9 1509.0,666.5 1509.1,740.0 1510.0,740.0 1510.0,730.8 1510.4,740.0 1511.0,658.2 1511.0,647.9 1511.0,647.7 1511.3,740.0 1512.0,705.2 1512.0,716.7 1512.1,740.0 1512.8,674.2 1513.0,740.0 1513.0,740.0 1513.9,662.7 1514.0,703.4 1514.0,722.5 1514.4,740.0 1515.0,663.3 1515.0,667.2 1515.4,740.0 1516.0,727.4 1516.0,740.0 1516.1,684.2 1517.0,740.0 1517.0,732.6 1517.1,740.0 1517.7,646.1 1518.0,739.1 1518.0,729.9 1518.3,740.0 1518.4,656.7 1519.0,740.0 1519.0,740.0 1519.3,664.7 1520.0,672.0 1520.0,673.0 1520.3,740.0 1521.0,740.0 1521.0,740.0 1521.7,675.8 1522.0,712.5 1522.0,702.7 1522.1,740.0 1523.0,685.4 1523.0,674.9 1523.3,740.0 1523.9,671.2 1524.0,714.2 1524.0,740.0 1524.7,639.0 1525.0,678.9 1525.0,661.0 1525.1,740.0 1526.0,682.3 1526.0,668.1 1526.3,740.0 1526.8,662.4 1527.0,731.8 1527.0,695.8 1527.2,740.0 1528.0,671.4 1528.0,652.3 1528.0,649.0 1528.2,740.0 1529.0,740.0 1529.0,740.0 1529.8,653.7 1530.0,740.0 1530.0,740.0 1530.5,658.3 1531.0,740.0 1531.0,722.7 1531.1,740.0 1531.3,662.6 1532.0,740.0 1532.0,740.0 1532.8,665.7 1533.0,740.0 1533.0,740.0 1533.5,673.2 1534.0,737.8 1534.0,731.0 1534.0,740.0 1534.9,671.2 1535.0,677.3 1535.0,690.3 1535.2,663.8 1535.3,740.0 1536.0,699.9 1536.0,683.3 1536.2,740.0 1536.7,669.3 1537.0,740.0 1537.0,718.4 1537.1,740.0 1537.9,639.8 1538.0,672.5 1538.0,678.5 1538.2,641.8 1538.3,740.0 1539.0,710.5 1539.0,718.7 1539.1,740.0 1539.3,682.9 1540.0,685.1 1540.0,685.3 1540.1,740.0 1541.0,665.7 1541.0,676.6 1541.0,698.0 1541.4,740.0 1541.6,662.3 1542.0,740.0 1542.0,710.1 1542.2,740.0 1542.8,665.9 1543.0,676.4 1543.0,670.5 1543.1,740.0 1543.8,653.7 1544.0,691.0 1544.0,703.5 1544.1,740.0 1544.2,650.4 1545.0,704.4 1545.0,690.6 1545.1,740.0 1545.7,655.0 1546.0,708.0 1546.0,678.6 1546.0,666.5 1546.2,740.0 1547.0,694.3 1547.0,702.9 1547.0,740.0 1547.1,645.4 1548.0,712.4 1548.0,702.5 1548.1,740.0 1548.6,642.9 1549.0,740.0 1549.0,740.0 1549.8,651.1 1550.0,688.0 1550.0,679.0 1550.1,740.0 1551.0,663.7 1551.0,664.9 1551.0,671.6 1551.1,740.0 1551.8,629.8 1552.0,725.7 1552.0,740.0 1552.2,639.3 1553.0,661.6 1553.0,689.0 1553.0,740.0 1553.3,657.1 1554.0,740.0 1554.0,740.0 1554.4,605.4 1555.0,646.1 1555.0,657.0 1555.7,740.0 1555.9,620.2 1556.0,662.9 1556.0,691.6 1556.2,740.0 1556.4,630.7 1557.0,683.7 1557.0,679.7 1557.3,740.0 1557.8,85.2 1558.0,100.5 1558.0,106.6 1558.7,710.9 1559.0,614.6 1559.0,605.6 1559.2,740.0 1559.3,604.4 1560.0,656.0 1560.0,663.3 1560.2,740.0 1560.9,632.8 1561.0,703.6 1561.0,740.0 1561.4,629.4 1562.0,686.8 1562.0,722.3 1562.0,740.0 1562.7,635.9 1563.0,718.5 1563.0,697.0 1563.2,628.3 1564.0,733.2 1564.0,740.0 1564.5,641.9 1565.0,666.0 1565.0,668.0 1565.2,740.0 1565.8,644.2 1566.0,740.0 1566.0,720.0 1566.1,729.0 1566.6,642.0 1567.0,707.4 1567.0,740.0 1567.8,652.2 1568.0,714.3 1568.0,685.1 1568.1,657.7 1568.2,740.0 1569.0,681.6 1569.0,676.6 1569.2,740.0 1569.8,655.1 1570.0,740.0 1570.0,740.0 1570.4,671.7 1571.0,705.2 1571.0,704.2 1571.1,740.0 1571.5,653.3 1572.0,686.1 1572.0,689.9 1572.1,740.0 1572.8,660.2 1573.0,740.0 1573.0,726.0 1573.2,740.0 1573.6,667.9 1574.0,689.1 1574.0,661.2 1574.1,644.2 1574.1,740.0 1575.0,682.3 1575.0,712.6 1575.0,740.0 1575.7,659.5 1576.0,681.3 1576.0,692.8 1576.1,740.0 1576.2,646.4 1577.0,691.0 1577.0,707.0 1577.1,740.0 1577.7,665.0 1578.0,729.4 1578.0,740.0 1578.8,674.0 1579.0,724.0 1579.0,718.2 1579.1,740.0 1580.0,646.7 1580.0,657.3 1580.0,684.9 1580.0,740.0 1580.3,677.8 1581.0,729.3 1581.0,740.0 1581.6,656.1 1582.0,691.9 1582.0,693.4 1582.2,740.0 1582.4,657.0 1583.0,726.2 1583.0,733.3 1583.3,740.0 1583.6,654.0 1584.0,740.0 1584.0,740.0 1584.7,667.9 1585.0,703.0 1585.0,732.6 1585.0,740.0 1585.2,667.8 1586.0,708.9 1586.0,712.5 1586.8,667.7 1586.9,740.0 1587.0,698.0 1587.0,678.0 1587.0,657.9 1587.1,740.0 1588.0,678.5 1588.0,686.8 1588.1,684.9 1588.2,740.0 1589.0,740.0 1589.0,740.0 1589.2,665.0 1590.0,739.4 1590.0,710.3 1590.2,740.0 1590.8,666.0 1591.0,716.5 1591.0,682.2 1591.0,669.1 1591.1,740.0 1592.0,740.0 1592.0,740.0 1592.1,668.2 1593.0,740.0 1593.0,703.1 1593.5,740.0 1593.6,672.3 1594.0,727.9 1594.0,716.0 1594.1,740.0 1594.3,661.0 1595.0,737.9 1595.0,740.0 1595.8,676.6 1596.0,740.0 1596.0,740.0 1596.3,675.4 1597.0,740.0 1597.0,740.0 1597.1,671.8 1598.0,740.0 1598.0,739.8 1598.1,740.0 1598.6,661.1 1599.0,712.0 1599.0,711.5 1599.1,740.0 1599.7,682.9 1600.0,740.0 1600.0,734.2 1600.0,740.0 1600.6,684.8 1601.0,740.0 1601.0,719.4 1601.1,740.0 1601.1,671.7 1602.0,703.9 1602.0,698.1 1602.4,740.0 1602.6,660.9 1603.0,738.1 1603.0,730.1 1603.1,740.0 1604.0,693.0 1604.0,704.0 1604.3,679.7 1604.3,740.0 1605.0,716.1 1605.0,740.0 1605.1,673.8 1606.0,682.8 1606.0,675.7 1606.0,670.4 1606.2,740.0 1607.0,740.0 1607.0,740.0 1607.5,677.5 1608.0,736.4 1608.0,737.6 1608.0,740.0 1608.9,682.1 1609.0,710.2 1609.0,705.5 1609.1,740.0 1609.8,697.2 1610.0,716.3 1610.0,715.5 1610.1,667.3 1610.2,740.0 1611.0,712.4 1611.0,713.6 1611.1,740.0 1611.7,662.9 1612.0,708.8 1612.0,721.9 1612.0,740.0 1612.1,669.7 1613.0,740.0 1613.0,740.0 1613.6,674.6 1614.0,715.8 1614.0,720.1 1614.2,740.0 1614.3,664.2 1615.0,729.8 1615.0,718.0 1615.1,740.0 1615.5,677.0 1616.0,740.0 1616.0,736.8 1616.1,740.0 1616.8,668.0 1617.0,740.0 1617.0,735.5 1617.2,740.0 1617.9,685.5 1618.0,712.2 1618.0,716.9 1618.0,740.0 1618.5,685.5 1619.0,717.6 1619.0,721.0 1619.2,740.0 1619.8,667.0 1620.0,740.0 1620.0,740.0 1620.4,668.3 1621.0,740.0 1621.0,740.0 1622.0,667.9 1622.0,670.6 1622.1,740.0 1623.0,683.0 1623.0,724.5 1623.0,740.0 1623.5,676.2 1624.0,740.0 1624.0,716.8 1624.1,740.0 1624.6,679.9 1625.0,737.7 1625.0,734.9 1625.2,740.0 1625.5,689.2 1626.0,740.0 1626.0,740.0 1626.7,673.6 1627.0,696.2 1627.0,712.8 1627.1,740.0 1627.8,680.2 1628.0,711.4 1628.0,730.1 1628.1,740.0 1629.0,671.9 1629.0,718.4 1629.0,720.4 1629.1,740.0 1629.5,673.3 1630.0,740.0 1630.0,740.0 1630.4,664.7 1631.0,740.0 1631.0,740.0 1632.0,683.4 1632.0,703.3 1632.0,734.0 1632.1,684.9 1632.2,740.0 1633.0,696.0 1633.0,706.3 1633.1,740.0 1633.7,672.5 1634.0,733.6 1634.0,735.5 1634.2,740.0 1634.5,665.5 1635.0,740.0 1635.0,740.0 1635.9,658.6 1636.0,740.0 1636.0,714.5 1636.1,740.0 1636.2,684.7 1637.0,719.7 1637.0,717.9 1637.1,740.0 1637.3,685.2 1638.0,702.5 1638.0,706.0 1638.0,740.0 1638.6,695.7 1639.0,700.6 1639.0,715.4 1639.0,740.0 1639.3,682.1 1640.0,724.7 1640.0,740.0 1640.3,675.9 1641.0,740.0 1641.0,740.0 1641.5,689.0 1642.0,740.0 1642.0,740.0 1643.0,690.8 1643.0,688.5 1643.1,740.0 1643.7,684.4 1644.0,725.0 1644.0,733.5 1644.0,740.0 1644.2,674.2 1645.0,731.1 1645.0,740.0 1645.3,668.2 1646.0,707.8 1646.0,700.8 1646.1,740.0 1646.3,679.1 1647.0,706.3 1647.0,686.2 1647.1,740.0 1647.5,669.9 1648.0,700.6 1648.0,703.3 1648.3,740.0 1648.5,567.9 1649.0,709.2 1649.0,696.2 1649.2,740.0 1649.7,675.6 1650.0,740.0 1650.0,728.1 1650.1,740.0 1650.7,662.7 1651.0,720.0 1651.0,698.8 1651.1,740.0 1651.7,674.5 1652.0,740.0 1652.0,728.8 1652.0,740.0 1652.8,688.5 1653.0,740.0 1653.0,740.0 1653.7,671.6 1654.0,721.0 1654.0,725.1 1654.0,740.0 1654.3,681.2 1655.0,721.7 1655.0,740.0 1655.5,677.2 1656.0,740.0 1656.0,727.3 1656.2,740.0 1656.3,673.9 1657.0,708.0 1657.0,691.5 1657.1,740.0 1657.4,677.2 1658.0,740.0 1658.0,740.0 1658.5,672.3 1659.0,740.0 1659.0,735.2 1659.1,740.0 1659.9,685.3 1660.0,740.0 1660.0,729.8 1660.0,740.0 1660.5,672.0 1661.0,723.4 1661.0,735.5 1661.0,740.0 1661.1,673.1 1662.0,730.6 1662.0,707.6 1662.2,740.0 1662.3,661.8 1663.0,693.1 1663.0,699.4 1663.0,740.0 1663.1,674.7 1664.0,740.0 1664.0,716.5 1664.2,740.0 1664.3,673.7 1665.0,732.3 1665.0,734.2 1665.0,740.0 1665.8,683.0 1666.0,740.0 1666.0,740.0 1666.2,675.8 1667.0,740.0 1667.0,740.0 1667.5,668.5 1668.0,694.9 1668.0,680.6 1668.0,740.0 1668.2,675.7 1669.0,701.2 1669.0,720.2 1669.0,740.0 1669.8,675.6 1670.0,701.6 1670.0,700.9 1670.0,687.0 1670.1,740.0 1671.0,733.9 1671.0,740.0 1671.6,683.3 1672.0,721.7 1672.0,740.0 1672.9,674.4 1673.0,740.0 1673.0,739.4 1673.1,740.0 1673.2,679.2 1674.0,740.0 1674.0,740.0 1674.3,662.6 1675.0,735.4 1675.0,740.0 1675.9,675.2 1676.0,711.2 1676.0,695.9 1676.1,740.0 1676.9,661.9 1677.0,703.0 1677.0,728.2 1677.0,740.0 1677.1,684.0 1678.0,716.1 1678.0,713.9 1678.1,740.0 1678.1,682.2 1679.0,730.5 1679.0,740.0 1679.1,673.1 1680.0,699.8 1680.0,697.5 1680.0,740.0 1680.7,679.2 1681.0,738.9 1681.0,740.0 1681.4,683.3 1682.0,703.2 1682.0,714.9 1682.0,740.0 1682.1,672.8 1683.0,705.7 1683.0,708.1 1683.1,740.0 1683.7,680.8 1684.0,739.1 1684.0,711.4 1684.0,740.0 1684.6,684.4 1685.0,740.0 1685.0,722.7 1685.0,740.0 1685.6,682.0 1686.0,723.1 1686.0,709.9 1686.2,740.0 1686.9,682.0 1687.0,740.0 1687.0,713.9 1687.0,740.0 1687.3,681.2 1688.0,727.1 1688.0,736.2 1688.0,740.0 1688.7,680.1 1689.0,717.5 1689.0,693.1 1689.1,740.0 1690.0,676.1 1690.0,692.4 1690.0,718.5 1690.0,740.0 1690.4,677.8 1691.0,695.0 1691.0,700.2 1691.2,740.0 1691.5,678.6 1692.0,715.8 1692.0,721.3 1692.0,740.0 1692.5,676.2 1693.0,724.3 1693.0,716.7 1693.1,740.0 1693.3,682.2 1694.0,691.6 1694.0,677.7 1694.1,740.0 1694.9,672.5 1695.0,724.3 1695.0,726.5 1695.1,740.0 1695.3,677.3 1696.0,686.8 1696.0,698.8 1696.1,683.2 1696.1,740.0 1697.0,711.9 1697.0,693.2 1697.0,740.0 1698.0,671.0 1698.0,698.3 1698.0,701.9 1698.0,740.0 1698.9,668.9 1699.0,722.5 1699.0,740.0 1699.9,673.0 1700.0,700.3 1700.0,702.0 1700.1,740.0 1700.3,675.6 1701.0,721.7 1701.0,740.0 1701.6,586.6 1702.0,712.4 1702.0,714.3 1702.1,740.0 1702.7,680.6 1703.0,740.0 1703.0,740.0 1703.4,671.0 1704.0,700.4 1704.0,692.4 1704.1,740.0 1704.9,677.3 1705.0,740.0 1705.0,740.0 1705.3,679.9 1706.0,705.7 1706.0,711.9 1706.1,740.0 1706.9,678.6 1707.0,715.5 1707.0,691.5 1707.0,668.1 1707.1,740.0 1708.0,698.5 1708.0,697.2 1708.0,740.0 1708.9,678.5 1709.0,706.8 1709.0,699.8 1709.1,740.0 1709.9,680.2 1710.0,691.5 1710.0,693.5 1710.0,740.0 1710.5,662.7 1711.0,721.3 1711.0,725.0 1711.0,740.0 1711.2,681.5 1712.0,740.0 1712.0,740.0 1712.9,674.9 1713.0,700.6 1713.0,701.2 1713.0,740.0 1713.6,685.4 1714.0,725.3 1714.0,735.8 1714.0,740.0 1714.3,670.7 1715.0,686.1 1715.0,678.8 1715.0,675.6 1715.0,740.0 1716.0,727.8 1716.0,704.8 1716.1,740.0 1716.9,680.0 1717.0,690.5 1717.0,701.8 1717.0,740.0 1717.1,675.1 1718.0,719.6 1718.0,717.9 1718.0,740.0 1718.5,674.1 1719.0,722.6 1719.0,709.9 1719.0,740.0 1719.6,680.1 1720.0,695.6 1720.0,691.5 1720.2,681.5 1720.3,740.0 1721.0,740.0 1721.0,740.0 1721.1,671.0 1722.0,691.7 1722.0,682.7 1722.0,674.7 1722.1,740.0 1723.0,691.6 1723.0,727.4 1723.0,740.0 1723.9,680.3 1724.0,724.6 1724.0,726.2 1724.1,740.0 1724.6,682.1 1725.0,704.8 1725.0,707.9 1725.0,740.0 1725.5,676.6 1726.0,740.0 1726.0,740.0 1726.2,678.7 1727.0,726.3 1727.0,706.7 1727.0,740.0 1727.2,676.0 1728.0,699.1 1728.0,694.8 1728.1,673.6 1728.3,740.0 1729.0,722.0 1729.0,737.1 1729.0,740.0 1729.6,682.8 1730.0,740.0 1730.0,737.4 1730.1,740.0 1730.2,670.6 1731.0,740.0 1731.0,723.1 1731.0,740.0 1731.6,670.7 1732.0,678.7 1732.0,681.3 1732.2,740.0 1732.5,672.0 1733.0,688.1 1733.0,685.4 1733.1,740.0 1733.1,666.5 1734.0,727.9 1734.0,729.3 1734.0,740.0 1734.9,678.3 1735.0,728.7 1735.0,740.0 1735.1,685.6 1736.0,740.0 1736.0,733.4 1736.0,740.0 1736.3,673.4 1737.0,740.0 1737.0,740.0 1737.3,682.3 1738.0,740.0 1738.0,740.0 1739.0,666.6 1739.0,738.5 1739.0,713.3 1739.1,740.0 1739.2,614.1 1740.0,740.0 1740.0,740.0 1740.5,677.3 1741.0,715.0 1741.0,693.6 1741.1,740.0 1741.6,679.1 1742.0,701.4 1742.0,691.5 1742.1,740.0 1742.8,671.2 1743.0,695.6 1743.0,709.0 1743.0,740.0 1743.4,673.9 1744.0,697.5 1744.0,700.4 1744.0,740.0 1744.3,682.8 1745.0,721.9 1745.0,698.8 1745.0,740.0 1745.3,672.7 1746.0,677.3 1746.0,675.5 1746.1,740.0 1747.0,699.9 1747.0,701.2 1747.1,740.0 1747.6,672.1 1748.0,738.7 1748.0,740.0 1748.3,678.3 1749.0,689.7 1749.0,696.3 1749.0,740.0 1749.5,675.3 1750.0,707.0 1750.0,702.7 1750.1,740.0 1750.5,673.4 1751.0,739.7 1751.0,740.0 1751.2,671.5 1752.0,723.3 1752.0,706.7 1752.1,740.0 1752.9,679.2 1753.0,718.0 1753.0,725.6 1753.0,740.0 1753.5,682.2 1754.0,740.0 1754.0,735.6 1754.0,740.0 1754.8,667.2 1755.0,723.4 1755.0,721.7 1755.0,740.0 1755.4,671.3 1756.0,689.6 1756.0,690.6 1756.1,740.0 1757.0,679.0 1757.0,680.1 1757.1,678.8 1757.2,740.0 1758.0,687.8 1758.0,688.7 1758.0,740.0 1758.1,683.5 1759.0,734.7 1759.0,708.9 1759.0,740.0 1759.3,679.2 1760.0,686.6 1760.0,695.7 1760.2,740.0 1760.4,681.5 1761.0,707.0 1761.0,696.9 1761.0,740.0 1761.5,675.6 1762.0,707.2 1762.0,707.7 1762.0,740.0 1762.6,678.8 1763.0,701.6 1763.0,694.9 1763.0,740.0 1763.7,672.2 1764.0,709.5 1764.0,712.6 1764.1,740.0 1764.9,674.4 1765.0,734.8 1765.0,730.3 1765.1,740.0 1765.9,687.4 1766.0,703.6 1766.0,714.2 1766.0,740.0 1766.2,668.0 1767.0,740.0 1767.0,740.0 1767.8,679.5 1768.0,739.8 1768.0,740.0 1768.4,592.2 1769.0,697.9 1769.0,699.0 1769.1,740.0 1769.3,669.7 1770.0,729.0 1770.0,719.9 1770.0,740.0 1770.8,682.2 1771.0,740.0 1771.0,738.3 1771.0,740.0 1771.8,680.2 1772.0,720.9 1772.0,721.0 1772.0,740.0 1772.6,671.8 1773.0,740.0 1773.0,720.7 1773.1,740.0 1773.4,671.3 1774.0,710.3 1774.0,725.7 1774.0,740.0 1774.1,674.3 1775.0,740.0 1775.0,728.4 1775.0,671.5 1775.2,740.0 1776.0,731.1 1776.0,720.8 1776.0,740.0 1776.1,673.4 1777.0,697.4 1777.0,697.5 1777.0,740.0 1777.5,677.2 1778.0,721.0 1778.0,731.6 1778.0,740.0 1778.1,675.3 1779.0,705.9 1779.0,701.6 1779.1,740.0 1779.4,675.9 1780.0,740.0 1780.0,738.2 1780.1,740.0 1780.8,678.8 1781.0,683.1 1781.0,686.6 1781.0,740.0 1781.4,677.0 1782.0,706.9 1782.0,687.0 1782.0,740.0 1783.0,676.5 1783.0,740.0 1783.0,711.7 1783.0,740.0 1783.4,680.6 1784.0,730.0 1784.0,734.6 1784.0,740.0 1784.9,686.2 1785.0,711.3 1785.0,705.8 1785.0,740.0 1785.3,668.9 1786.0,707.9 1786.0,724.1 1786.0,740.0 1786.7,685.6 1787.0,735.9 1787.0,740.0 1787.6,671.0 1788.0,722.1 1788.0,737.3 1788.0,740.0 1788.4,671.5 1789.0,738.1 1789.0,719.8 1789.0,740.0 1789.3,675.9 1790.0,683.9 1790.0,681.8 1790.0,740.0 1790.5,679.7 1791.0,705.1 1791.0,714.8 1791.0,740.0 1791.2,684.1 1792.0,740.0 1792.0,740.0 1792.3,647.1 1793.0,723.4 1793.0,732.4 1793.0,740.0 1794.0,678.7 1794.0,707.1 1794.0,740.0 1794.5,679.6 1795.0,700.8 1795.0,692.2 1795.0,677.5 1795.1,740.0 1796.0,701.4 1796.0,689.3 1796.0,679.8 1796.1,740.0 1797.0,740.0 1797.0,740.0 1797.2,680.8 1798.0,740.0 1798.0,729.2 1798.0,740.0 1798.7,677.5 1799.0,709.4 1799.0,716.2 1799.0,740.0 1800.0,672.9 1800.0,716.7 1800.0,699.8 1800.0,671.1 1800.0,740.0 1801.0,710.3 1801.0,710.6 1801.1,740.0 1801.6,667.8 1802.0,686.1 1802.0,694.6 1802.0,740.0 1802.4,675.9 1803.0,727.1 1803.0,728.8 1803.0,740.0 1803.2,684.1 1804.0,719.5 1804.0,728.6 1804.0,678.0 1804.0,740.0 1805.0,722.8 1805.0,722.5 1805.0,740.0 1805.6,678.6 1806.0,688.9 1806.0,692.8 1806.1,740.0 1806.9,679.1 1807.0,718.3 1807.0,712.4 1807.0,740.0 1807.4,679.1 1808.0,688.3 1808.0,692.4 1808.0,740.0 1808.2,675.2 1809.0,708.1 1809.0,713.9 1809.0,740.0 1809.1,678.6 1810.0,740.0 1810.0,740.0 1810.5,676.8 1811.0,685.6 1811.0,689.7 1811.1,679.3 1811.1,740.0 1812.0,717.5 1812.0,724.2 1812.0,740.0 1812.5,615.4 1813.0,719.5 1813.0,740.0 1813.1,682.6 1814.0,709.5 1814.0,719.4 1814.0,740.0 1814.8,664.4 1815.0,740.0 1815.0,732.4 1815.0,740.0 1816.0,671.9 1816.0,728.6 1816.0,730.5 1816.0,740.0 1816.6,674.1 1817.0,740.0 1817.0,731.6 1817.0,740.0 1817.6,680.5 1818.0,740.0 1818.0,737.0 1818.0,740.0 1818.2,674.6 1819.0,715.5 1819.0,704.0 1819.0,740.0 1819.9,678.6 1820.0,721.5 1820.0,713.0 1820.0,740.0 1820.5,677.3 1821.0,738.6 1821.0,740.0 1821.2,682.8 1822.0,717.5 1822.0,724.9 1822.0,740.0 1822.5,674.6 1823.0,704.9 1823.0,702.7 1823.1,740.0 1823.6,666.6 1824.0,690.1 1824.0,711.1 1824.0,740.0 1824.1,680.3 1825.0,707.8 1825.0,706.5 1825.0,740.0 1825.2,671.0 1826.0,709.6 1826.0,706.3 1826.0,683.1 1826.0,740.0 1827.0,732.5 1827.0,740.0 1827.2,680.9 1828.0,699.6 1828.0,708.6 1828.0,740.0 1828.1,667.7 1829.0,681.8 1829.0,682.6 1829.1,740.0 1830.0,628.4 1830.0,720.6 1830.0,722.4 1830.0,740.0 1830.9,677.0 1831.0,730.2 1831.0,721.5 1831.0,740.0 1831.5,671.8 1832.0,732.4 1832.0,723.0 1832.0,740.0 1832.2,682.3 1833.0,703.9 1833.0,714.7 1833.0,740.0 1833.7,677.6 1834.0,720.5 1834.0,708.5 1834.1,676.0 1834.1,740.0 1835.0,703.5 1835.0,704.9 1835.0,740.0 1835.7,680.0 1836.0,720.3 1836.0,719.6 1836.0,740.0 1836.2,678.4 1837.0,711.7 1837.0,715.9 1837.0,740.0 1837.6,679.0 1838.0,692.2 1838.0,681.0 1838.0,671.4 1838.0,740.0 1839.0,735.0 1839.0,738.6 1839.0,740.0 1839.1,671.7 1840.0,714.6 1840.0,720.0 1840.0,740.0 1840.4,681.2 1841.0,740.0 1841.0,734.3 1841.0,740.0 1841.7,681.1 1842.0,715.6 1842.0,740.0 1842.1,679.4 1843.0,739.7 1843.0,712.3 1843.0,740.0 1844.0,672.4 1844.0,740.0 1844.0,722.9 1844.0,740.0 1844.9,671.4 1845.0,714.4 1845.0,694.5 1845.0,740.0 1845.7,673.0 1846.0,740.0 1846.0,740.0 1846.2,677.0 1847.0,730.1 1847.0,714.2 1847.0,740.0 1847.9,669.0 1848.0,740.0 1848.0,740.0 1848.3,675.0 1849.0,706.6 1849.0,725.0 1849.0,740.0 1849.7,677.9 1850.0,740.0 1850.0,740.0 1850.3,667.3 1851.0,740.0 1851.0,740.0 1851.8,666.5 1852.0,696.2 1852.0,709.0 1852.0,740.0 1852.3,680.4 1853.0,720.0 1853.0,729.3 1853.0,740.0 1853.5,686.3 1854.0,735.6 1854.0,730.1 1854.0,740.0 1854.3,669.2 1855.0,734.9 1855.0,740.0 1855.1,677.9 1856.0,723.4 1856.0,722.8 1856.0,740.0 1856.6,674.6 1857.0,719.3 1857.0,731.1 1857.0,740.0 1857.8,675.5 1858.0,702.4 1858.0,708.8 1858.0,674.9 1858.0,740.0 1859.0,700.6 1859.0,709.1 1859.0,740.0 1859.1,627.3 1860.0,723.4 1860.0,740.0 1860.2,670.4 1861.0,740.0 1861.0,740.0 1862.0,678.5 1862.0,725.6 1862.0,740.0 1862.2,672.7 1863.0,731.7 1863.0,740.0 1863.7,676.9 1864.0,686.2 1864.0,695.1 1864.0,740.0 1864.0,671.3 1865.0,724.0 1865.0,733.9 1865.0,740.0 1865.2,668.6 1866.0,740.0 1866.0,740.0 1866.8,668.3 1867.0,699.2 1867.0,689.9 1867.0,740.0 1867.5,675.8 1868.0,718.0 1868.0,703.5 1868.0,740.0 1868.7,679.1 1869.0,740.0 1869.0,738.1 1869.0,684.0 1869.0,740.0 1870.0,740.0 1870.0,723.6 1870.0,740.0 1870.5,678.4 1871.0,740.0 1871.0,740.0 1871.2,675.0 1872.0,718.7 1872.0,736.3 1872.0,740.0 1872.9,672.8 1873.0,709.1 1873.0,695.0 1873.0,740.0 1873.3,679.4 1874.0,711.7 1874.0,713.3 1874.0,740.0 1874.2,676.0 1875.0,740.0 1875.0,738.7 1875.0,740.0 1875.0,680.3 1876.0,686.7 1876.0,696.4 1876.0,740.0 1876.7,676.1 1877.0,726.3 1877.0,707.8 1877.0,740.0 1878.0,673.7 1878.0,717.0 1878.0,714.4 1878.0,740.0 1878.3,676.2 1879.0,740.0 1879.0,740.0 1880.0,678.6 1880.0,740.0 1880.0,740.0 1880.4,676.2 1881.0,728.2 1881.0,740.0 1881.7,681.3 1882.0,740.0 1882.0,718.3 1882.0,740.0 1882.8,677.8 1883.0,716.1 1883.0,707.8 1883.0,740.0 1883.1,676.1 1884.0,722.0 1884.0,699.0 1884.0,740.0 1884.5,676.8 1885.0,719.9 1885.0,723.1 1885.0,740.0 1885.9,676.4 1886.0,718.6 1886.0,717.2 1886.0,740.0 1886.2,672.1 1887.0,735.9 1887.0,734.2 1887.0,740.0 1887.0,670.8 1888.0,707.1 1888.0,719.6 1888.0,740.0 1888.5,676.4 1889.0,693.5 1889.0,710.4 1889.0,740.0 1889.8,675.6 1890.0,707.2 1890.0,740.0 1890.3,679.9 1891.0,740.0 1891.0,730.7 1891.0,740.0 1891.7,678.0 1892.0,716.8 1892.0,715.0 1892.0,740.0 1892.3,676.3 1893.0,706.7 1893.0,712.9 1893.0,740.0 1893.5,644.5 1894.0,712.4 1894.0,704.1 1894.0,740.0 1894.1,677.5 1895.0,695.4 1895.0,693.0 1895.0,740.0 1895.6,671.9 1896.0,702.4 1896.0,698.4 1896.0,740.0 1896.0,677.5 1897.0,715.9 1897.0,717.6 1897.0,740.0 1897.9,676.1 1898.0,702.7 1898.0,721.0 1898.0,740.0 1898.6,676.5 1899.0,713.4 1899.0,717.1 1899.0,740.0 1899.4,671.9 1900.0,735.0 1900.0,740.0 1900.9,671.8 1901.0,723.4 1901.0,720.2 1901.0,740.0 1901.5,672.3 1902.0,710.4 1902.0,708.4 1902.0,740.0 1902.2,671.3 1903.0,717.5 1903.0,713.6 1903.0,740.0 1903.2,636.2 1904.0,690.6 1904.0,684.3 1904.0,740.0 1904.8,678.2 1905.0,726.5 1905.0,737.4 1905.0,740.0 1906.0,676.9 1906.0,715.5 1906.0,735.6 1906.0,740.0 1906.8,682.0 1907.0,740.0 1907.0,740.0 1907.8,677.4 1908.0,728.3 1908.0,734.3 1908.0,740.0 1908.4,680.3 1909.0,735.1 1909.0,724.4 1909.0,740.0 1909.9,671.5 1910.0,707.9 1910.0,711.4 1910.0,740.0 1910.9,677.2 1911.0,725.3 1911.0,721.9 1911.0,740.0 1911.9,680.1 1912.0,688.6 1912.0,694.0 1912.0,740.0 1912.2,612.2 1913.0,710.7 1913.0,696.2 1913.0,674.9 1913.0,740.0 1914.0,695.3 1914.0,687.6 1914.1,740.0 1914.7,677.3 1915.0,695.0 1915.0,705.1 1915.0,740.0 1915.9,666.3 1916.0,697.6 1916.0,693.3 1916.0,740.0 1916.1,674.0 1917.0,683.6 1917.0,689.7 1917.0,740.0 1917.3,677.4 1918.0,713.4 1918.0,714.2 1918.0,740.0 1918.5,672.1 1919.0,698.9 1919.0,701.9 1919.0,740.0 1919.1,673.5 1920.0,740.0 1920.0,740.0 1920.7,676.4 1921.0,709.8 1921.0,698.8 1921.0,740.0 1921.3,673.3 1922.0,740.0 1922.0,730.6 1922.0,740.0 1922.6,675.1 1923.0,724.4 1923.0,711.3 1923.0,740.0 1923.2,675.2 1924.0,709.9 1924.0,704.3 1924.0,740.0 1924.3,671.8 1925.0,740.0 1925.0,740.0 1925.8,673.7 1926.0,698.7 1926.0,706.5 1926.0,740.0 1926.4,679.7 1927.0,723.4 1927.0,740.0 1927.6,676.2 1928.0,735.9 1928.0,716.1 1928.0,740.0 1928.5,674.4 1929.0,682.3 1929.0,686.2 1929.0,740.0 1929.9,673.9 1930.0,731.0 1930.0,732.6 1930.0,740.0 1930.2,676.3 1931.0,728.5 1931.0,714.2 1931.0,740.0 1931.5,671.7 1932.0,715.8 1932.0,721.9 1932.0,740.0 1932.1,678.3 1933.0,736.7 1933.0,730.9 1933.0,740.0 1933.0,668.0 1934.0,698.2 1934.0,704.9 1934.0,740.0 1934.2,671.9 1935.0,732.7 1935.0,725.1 1935.0,740.0 1935.3,676.5 1936.0,738.0 1936.0,735.8 1936.0,740.0 1936.3,675.6 1937.0,740.0 1937.0,740.0 1938.0,669.0 1938.0,728.3 1938.0,703.1 1938.0,740.0 1938.2,672.1 1939.0,723.9 1939.0,723.9 1939.0,740.0 1939.3,670.2 1940.0,715.4 1940.0,721.1 1940.0,740.0 1940.2,669.8 1941.0,733.9 1941.0,715.6 1941.0,740.0 1941.8,672.8 1942.0,731.3 1942.0,740.0 1942.8,669.7 1943.0,712.3 1943.0,729.8 1943.0,740.0 1943.1,594.9 1944.0,733.0 1944.0,740.0 1944.9,669.6 1945.0,737.4 1945.0,740.0 1945.8,665.6 1946.0,728.5 1946.0,717.1 1946.0,740.0 1946.1,661.2 1947.0,717.3 1947.0,726.6 1947.0,740.0 1947.4,661.9 1948.0,740.0 1948.0,740.0 1948.4,671.1 1949.0,716.1 1949.0,704.9 1949.0,675.3 1949.0,740.0 1950.0,698.5 1950.0,696.2 1950.0,740.0 1950.6,674.0 1951.0,732.1 1951.0,735.8 1951.0,740.0 1951.6,663.7 1952.0,709.5 1952.0,723.6 1952.0,740.0 1952.9,666.0 1953.0,713.6 1953.0,706.1 1953.0,740.0 1953.1,673.1 1954.0,703.4" fill="none" stroke="#4a62a1" stroke-opacity="1.0" stroke-width="2" stroke-linejoin="round"/><polyline points="1031.8,673.9 1033.1,657.3 1034.4,647.3 1035.7,643.9 1037.0,644.3 1038.3,643.4 1039.5,640.0 1040.8,639.7 1042.0,648.8 1043.3,669.7 1044.5,695.0 1045.7,709.1 1046.9,703.6 1048.1,699.8 1049.2,714.4 1050.4,698.0 1051.5,688.9 1052.7,699.6 1053.8,687.8 1054.9,674.8 1056.1,676.2 1057.2,684.7 1058.3,690.7 1059.3,690.2 1060.4,679.8 1061.5,666.2 1062.5,660.0 1063.6,662.9 1064.6,671.4 1065.7,682.9 1066.7,698.1 1067.7,706.0 1068.7,684.8 1069.7,664.8 1070.7,654.7 1071.7,651.8 1072.7,650.6 1073.7,648.4 1074.6,647.1 1075.6,646.4 1076.5,645.8 1077.5,647.7 1078.4,655.2 1079.4,670.1 1080.3,696.6 1081.2,700.5 1082.1,672.8 1083.0,664.0 1083.9,673.9 1084.8,707.0 1085.7,700.6 1086.6,690.7 1087.5,717.3 1088.3,703.9 1089.2,677.9 1090.0,673.1 1090.9,677.5 1091.7,680.0 1092.6,675.3 1093.4,673.3 1094.3,672.7 1095.1,664.3 1095.9,662.3 1096.7,679.3 1097.5,737.8 1098.3,730.5 1099.1,701.1 1099.9,697.2 1100.7,702.8 1101.5,699.7 1102.3,679.6 1103.1,660.3 1103.8,652.6 1104.6,658.8 1105.4,685.1 1106.1,740.0 1106.9,699.2 1107.6,678.0 1108.4,672.5 1109.1,677.5 1109.8,686.7 1110.6,686.3 1111.3,681.7 1112.0,680.5 1112.8,683.6 1113.5,691.4 1114.2,688.8 1114.9,672.9 1115.6,666.0 1116.3,674.7 1117.0,700.1 1117.7,735.7 1118.4,735.1 1119.1,690.8 1119.8,666.7 1120.4,657.2 1121.1,660.8 1121.8,681.4 1122.5,730.9 1123.1,708.6 1123.8,684.4 1124.4,667.5 1125.1,656.7 1125.8,651.7 1126.4,652.0 1127.0,664.0 1127.7,698.9 1128.3,688.1 1129.0,662.8 1129.6,657.9 1130.2,662.8 1130.9,669.0 1131.5,670.2 1132.1,668.7 1132.7,670.4 1133.3,679.8 1134.0,699.3 1134.6,718.3 1135.2,728.4 1135.8,736.9 1136.4,739.9 1137.0,733.5 1137.6,726.2 1138.2,735.4 1138.8,732.2 1139.3,697.0 1139.9,668.0 1140.5,655.5 1141.1,659.4 1141.7,685.5 1142.2,740.0 1142.8,693.8 1143.4,679.7 1144.0,670.2 1144.5,656.9 1145.1,645.6 1145.6,640.5 1146.2,645.0 1146.8,662.1 1147.3,696.0 1147.9,734.3 1148.4,708.4 1149.0,689.3 1149.5,678.7 1150.0,679.9 1150.6,704.8 1151.1,725.9 1151.7,677.8 1152.2,658.7 1152.7,651.6 1153.2,653.0 1153.8,662.4 1154.3,679.9 1154.8,702.8 1155.3,704.5 1155.9,687.4 1156.4,682.2 1156.9,695.0 1157.4,703.7 1157.9,688.2 1158.4,687.5 1158.9,700.8 1159.4,698.8 1159.9,678.5 1160.4,671.9 1160.9,674.0 1161.4,667.4 1161.9,660.2 1162.4,665.1 1162.9,682.5 1163.4,694.7 1163.9,688.6 1164.4,664.9 1164.9,637.3 1165.3,619.5 1165.8,613.0 1166.3,617.5 1166.8,632.9 1167.2,659.6 1167.7,698.7 1168.2,705.0 1168.7,666.6 1169.1,647.1 1169.6,639.1 1170.1,636.6 1170.5,638.7 1171.0,646.7 1171.4,656.9 1171.9,662.1 1172.4,667.6 1172.8,685.8 1173.3,725.0 1173.7,708.5 1174.2,695.3 1174.6,701.7 1175.1,733.3 1175.5,740.0 1176.0,705.8 1176.4,697.3 1176.8,706.9 1177.3,725.9 1177.7,740.0 1178.2,740.0 1178.6,740.0 1179.0,708.3 1179.5,675.6 1179.9,658.8 1180.3,651.3 1180.7,651.0 1181.2,654.7 1181.6,657.1 1182.0,660.6 1182.4,671.9 1182.9,694.8 1183.3,738.0 1183.7,740.0 1184.1,713.7 1184.5,700.9 1185.0,691.9 1185.4,689.8 1185.8,716.1 1186.2,735.3 1186.6,684.9 1187.0,671.9 1187.4,676.8 1187.8,701.0 1188.2,740.0 1188.6,720.7 1189.0,709.5 1189.4,737.7 1189.8,740.0 1190.2,740.0 1190.6,740.0 1191.0,707.0 1191.4,678.3 1191.8,668.7 1192.2,675.7 1192.6,707.0 1193.0,734.2 1193.4,692.9 1193.8,672.9 1194.1,663.4 1194.5,668.8 1194.9,696.4 1195.3,740.0 1195.7,740.0 1196.1,717.2 1196.4,683.3 1196.8,670.9 1197.2,670.4 1197.6,676.8 1198.0,688.7 1198.3,701.3 1198.7,696.4 1199.1,673.1 1199.4,653.0 1199.8,644.5 1200.2,648.5 1200.5,665.3 1200.9,688.5 1201.3,695.8 1201.6,695.1 1202.0,679.5 1202.4,664.5 1202.7,658.1 1203.1,658.6 1203.5,666.1 1203.8,677.0 1204.2,680.5 1204.5,684.7 1204.9,687.7 1205.2,673.6 1205.6,659.3 1206.0,650.9 1206.3,650.1 1206.7,661.7 1207.0,695.4 1207.4,740.0 1207.7,712.7 1208.0,740.0 1208.4,721.9 1208.7,679.6 1209.1,671.1 1209.4,685.4 1209.8,740.0 1210.1,712.3 1210.5,685.7 1210.8,678.0 1211.1,667.0 1211.5,654.5 1211.8,648.7 1212.1,648.8 1212.5,650.8 1212.8,656.2 1213.2,668.3 1213.5,686.0 1213.8,689.0 1214.2,676.4 1214.5,672.8 1214.8,680.4 1215.1,700.2 1215.5,740.0 1215.8,740.0 1216.1,717.4 1216.5,715.8 1216.8,727.8 1217.1,740.0 1217.4,740.0 1217.7,740.0 1218.1,723.8 1218.4,705.2 1218.7,705.7 1219.1,724.4 1219.4,740.0 1219.9,674.4 1220.3,681.5 1220.6,704.3 1220.9,694.1 1221.2,690.3 1221.6,719.6 1221.9,738.8 1222.2,717.3 1222.5,716.2 1222.8,718.3 1223.1,717.8 1223.4,699.5 1223.7,688.7 1224.1,698.6 1224.4,740.0 1224.9,693.0 1225.3,678.4 1225.6,665.8 1225.9,653.4 1226.2,645.5 1226.5,642.9 1226.8,648.2 1227.1,668.5 1227.4,735.2 1227.9,669.9 1228.3,670.1 1228.6,669.2 1228.9,665.4 1229.2,677.1 1229.5,707.2 1229.7,688.7 1230.1,668.7 1230.4,663.2 1230.9,694.5 1231.2,695.8 1231.5,667.2 1231.8,650.0 1232.1,643.5 1232.9,666.3 1233.2,666.9 1233.5,668.9 1233.8,677.7 1234.1,689.4 1234.9,697.1 1235.2,710.1 1235.5,724.2 1235.8,732.5 1236.1,725.4 1236.9,682.4 1237.2,670.9 1237.5,664.8 1237.7,667.7 1238.1,678.2 1238.4,685.0 1238.9,669.2 1239.1,662.0 1239.4,660.5 1239.9,697.9 1240.2,713.3 1240.5,668.0 1240.7,653.4 1241.1,654.7 1241.9,710.9 1242.1,717.5 1242.9,662.9 1243.1,662.7 1243.9,688.3 1244.1,696.9 1244.4,718.6 1244.9,686.6 1245.3,679.2 1245.5,687.1 1245.8,704.0 1246.1,710.4 1246.6,695.8 1246.9,699.1 1247.1,722.7 1247.9,661.9 1248.1,657.5 1248.9,674.0 1249.1,677.6 1249.9,696.9 1250.1,692.9 1250.9,673.6 1251.1,659.4 1251.4,650.3 1251.9,664.8 1252.1,672.4 1252.9,643.2 1253.1,650.4 1253.9,694.4 1254.1,696.1 1254.6,692.8 1254.9,706.2 1255.1,740.0 1255.6,681.5 1255.9,682.2 1256.1,704.8 1256.3,740.0 1256.7,681.8 1256.9,691.3 1257.1,740.0 1257.6,700.9 1257.9,702.7 1258.1,710.3 1258.9,658.2 1259.1,672.3 1259.4,691.4 1259.9,668.4 1260.1,647.7 1260.3,635.8 1260.9,681.7 1261.1,671.3 1261.4,661.7 1261.9,709.5 1262.1,740.0 1262.9,685.5 1263.1,664.6 1263.3,655.3 1263.9,679.6 1264.1,718.2 1264.4,740.0 1264.9,693.3 1265.1,671.5 1265.7,724.9 1265.9,698.7 1266.1,694.6 1266.6,719.6 1266.9,718.4 1267.1,695.6 1267.5,670.2 1267.9,690.7 1268.1,684.3 1268.6,672.3 1268.9,674.7 1269.1,679.6 1269.9,740.0 1270.1,684.0 1270.4,670.5 1270.9,740.0 1271.1,702.3 1271.5,671.8 1271.9,691.6 1272.1,720.9 1272.3,740.0 1272.9,694.3 1273.1,680.0 1273.5,740.0 1273.9,661.0 1274.1,662.9 1274.6,740.0 1274.9,695.6 1275.1,671.3 1275.3,664.6 1275.9,669.5 1276.1,668.2 1276.5,657.8 1276.9,716.1 1277.1,693.2 1277.3,678.8 1277.7,707.6 1277.9,696.4 1278.1,691.0 1278.9,724.4 1279.1,694.5 1279.3,681.5 1279.9,722.4 1280.1,686.6 1280.5,667.1 1280.9,713.8 1281.1,729.9 1281.3,700.7 1281.7,740.0 1281.9,704.0 1282.1,683.2 1282.9,668.5 1283.1,667.1 1283.5,703.0 1283.9,700.1 1284.1,721.6 1284.7,686.0 1284.9,693.8 1285.1,685.5 1285.5,659.4 1285.9,685.2 1286.1,724.8 1286.6,666.5 1286.9,679.0 1287.1,688.4 1287.3,689.7 1287.9,680.0 1288.1,691.0 1288.3,724.1 1288.9,682.7 1289.1,683.7 1289.4,673.9 1289.8,687.5 1289.9,675.9 1290.1,657.8 1290.7,644.5 1290.9,650.9 1291.1,668.0 1291.6,736.3 1291.9,704.0 1292.1,696.8 1292.5,712.0 1292.9,694.5 1293.1,690.3 1293.8,665.2 1293.9,668.0 1294.1,677.9 1294.5,706.7 1294.9,699.4 1295.1,701.3 1295.8,660.9 1295.9,662.2 1296.1,672.0 1296.5,740.0 1296.9,701.4 1297.1,688.3 1297.2,681.1 1297.8,740.0 1297.9,724.6 1298.1,704.9 1298.4,740.0 1298.9,706.8 1299.1,711.3 1299.2,720.4 1299.9,680.7 1300.1,699.0 1300.2,720.3 1300.8,661.9 1300.9,665.7 1301.1,672.5 1301.7,726.4 1301.9,722.8 1302.1,721.7 1302.6,692.9 1302.9,725.6 1303.1,663.8 1303.4,630.4 1303.9,662.5 1304.1,684.7 1304.6,668.5 1304.9,740.0 1305.1,703.9 1305.4,679.3 1305.9,710.2 1306.1,699.6 1306.4,729.0 1306.9,657.4 1307.1,656.7 1307.4,718.3 1307.9,673.8 1308.1,696.0 1308.2,729.6 1308.9,676.4 1309.1,672.6 1309.4,665.6 1309.9,711.0 1310.1,718.9 1310.6,683.2 1310.9,716.0 1311.1,710.7 1311.6,659.1 1311.9,704.1 1312.1,730.7 1312.9,657.6 1313.1,663.5 1313.6,697.3 1313.9,683.9 1314.1,686.6 1314.4,703.8 1314.9,700.3 1315.1,714.6 1315.6,702.9 1315.9,724.7 1316.1,703.9 1316.4,740.0 1316.9,683.3 1317.1,699.5 1317.2,740.0 1317.8,699.2 1317.9,700.1 1318.1,713.7 1318.4,696.4 1318.6,740.0 1318.9,696.7 1319.1,686.2 1319.6,710.3 1319.9,700.7 1320.1,716.1 1320.6,680.6 1320.9,715.0 1321.1,734.9 1321.4,700.8 1321.9,740.0 1322.1,740.0 1322.6,679.8 1322.9,696.1 1323.1,729.7 1323.6,737.1 1323.9,676.8 1324.1,671.7 1324.8,740.0 1324.9,726.4 1325.1,696.1 1325.5,676.9 1325.9,710.3 1326.1,724.1 1326.8,739.5 1326.9,716.5 1327.1,712.7 1327.4,740.0 1327.9,702.0 1328.1,685.1 1328.2,677.8 1328.7,733.1 1328.9,682.1 1329.1,687.6 1329.2,740.0 1329.6,659.2 1329.9,668.0 1330.1,672.0 1330.9,693.4 1331.1,695.6 1331.3,682.0 1331.9,736.5 1332.1,735.9 1332.2,740.0 1332.9,658.2 1333.1,652.2 1333.8,740.0 1333.9,723.3 1334.1,686.0 1334.2,676.6 1334.5,710.4 1334.9,688.5 1335.1,729.7 1335.2,730.7 1335.7,665.0 1335.9,667.9 1336.1,676.5 1336.3,701.0 1336.9,695.0 1337.1,695.5 1337.4,740.0 1337.8,681.5 1337.9,695.3 1338.1,728.2 1338.2,740.0 1338.7,724.4 1338.9,740.0 1339.1,737.7 1339.6,740.0 1339.9,691.3 1340.1,684.0 1340.4,725.0 1340.8,673.3 1340.9,683.7 1341.1,717.2 1341.2,740.0 1341.4,701.2 1341.9,736.8 1342.1,693.5 1342.4,702.0 1342.9,660.7 1343.1,649.0 1343.2,643.2 1343.7,667.5 1343.9,666.4 1344.1,670.4 1344.6,698.6 1344.9,694.4 1345.1,721.7 1345.4,670.5 1345.9,724.4 1346.1,731.1 1346.6,740.0 1346.9,666.2 1347.1,682.3 1347.4,676.3 1347.8,710.1 1347.9,701.2 1348.1,681.6 1348.3,658.7 1348.8,717.6 1348.9,683.4 1349.1,658.3 1349.2,651.2 1349.7,740.0 1349.9,672.3 1350.1,651.3 1350.2,642.2 1350.9,698.5 1351.1,740.0 1351.6,687.1 1351.9,697.8 1352.1,678.2 1352.2,671.6 1352.8,736.4 1352.9,688.1 1353.1,684.7 1353.4,740.0 1353.9,722.9 1354.1,740.0 1354.9,672.4 1355.1,666.0 1355.2,664.7 1355.9,740.0 1356.1,740.0 1356.9,664.8 1357.1,666.8 1357.4,713.4 1357.8,644.5 1357.9,648.2 1358.1,670.9 1358.3,740.0 1358.9,696.5 1359.0,712.4 1359.2,740.0 1360.0,706.0 1360.1,694.6 1360.4,652.2 1360.9,740.0 1361.1,740.0 1361.7,710.5 1361.9,728.4 1362.0,691.4 1362.2,659.6 1362.7,730.1 1363.0,694.8 1363.1,710.7 1363.2,737.3 1363.8,707.6 1363.9,711.4 1364.1,740.0 1364.9,677.5 1365.0,691.8 1365.7,740.0 1366.0,673.0 1366.0,673.6 1366.5,652.6 1367.0,740.0 1367.1,722.1 1367.3,740.0 1367.9,726.9 1368.0,695.6 1368.2,673.6 1368.5,740.0 1369.0,740.0 1369.0,732.1 1369.2,684.1 1369.5,736.0 1370.0,687.7 1370.0,690.6 1370.2,740.0 1370.8,676.2 1371.0,699.0 1371.0,740.0 1372.0,653.6 1372.0,651.7 1372.5,740.0 1373.0,740.0 1373.0,740.0 1373.9,668.1 1374.0,677.6 1374.0,705.1 1374.2,740.0 1375.0,714.4 1375.0,708.9 1375.5,656.9 1376.0,702.4 1376.0,710.7 1376.7,740.0 1376.9,681.9 1377.0,701.8 1377.0,740.0 1377.2,668.4 1378.0,694.9 1378.0,673.5 1378.2,647.2 1378.7,740.0 1379.0,740.0 1379.0,740.0 1379.2,688.9 1380.0,740.0 1380.0,735.9 1380.1,740.0 1380.5,680.6 1381.0,688.7 1381.0,678.0 1381.3,740.0 1381.7,668.7 1382.0,692.4 1382.0,697.2 1382.3,665.4 1383.0,732.2 1383.0,740.0 1383.8,667.2 1384.0,685.9 1384.0,687.0 1384.3,706.3 1384.9,671.6 1385.0,676.7 1385.0,697.1 1385.1,740.0 1386.0,721.2 1386.0,740.0 1386.5,704.8 1387.0,711.9 1387.0,696.6 1387.3,667.0 1387.8,740.0 1388.0,714.1 1388.0,687.8 1388.1,684.3 1388.6,698.8 1389.0,692.9 1389.0,714.1 1389.1,740.0 1389.4,676.4 1390.0,731.9 1390.0,683.7 1390.2,664.0 1390.8,714.0 1391.0,691.5 1391.0,699.0 1391.2,740.0 1391.5,667.0 1392.0,739.2 1392.0,708.7 1392.1,691.9 1392.3,740.0 1393.0,727.2 1393.0,682.9 1393.1,671.1 1393.9,740.0 1394.0,739.6 1394.0,708.4 1394.4,740.0 1394.7,693.7 1395.0,707.2 1395.0,689.2 1395.5,660.0 1396.0,703.0 1396.0,740.0 1396.4,688.9 1397.0,706.8 1397.0,710.0 1397.2,683.5 1397.4,740.0 1398.0,738.6 1398.0,723.0 1398.3,693.8 1398.6,740.0 1399.0,733.9 1399.0,725.8 1399.1,736.5 1399.6,645.3 1400.0,675.5 1400.0,672.9 1400.4,740.0 1401.0,702.1 1401.0,740.0 1401.5,673.3 1402.0,690.5 1402.0,707.5 1402.1,740.0 1402.4,654.9 1403.0,679.7 1403.0,677.1 1403.5,740.0 1404.0,740.0 1404.0,740.0 1405.0,655.6 1405.0,668.1 1405.2,717.6 1405.9,659.1 1406.0,662.1 1406.0,680.1 1406.3,651.8 1406.7,740.0 1407.0,699.5 1407.0,699.5 1407.3,740.0 1407.8,687.3 1408.0,712.6 1408.0,740.0 1409.0,694.2 1409.0,689.9 1409.3,740.0 1409.7,652.3 1410.0,720.9 1410.0,677.3 1410.1,673.4 1410.3,740.0 1411.0,712.6 1411.0,717.5 1411.2,702.3 1411.5,740.0 1412.0,703.9 1412.0,701.3 1412.6,689.9 1412.9,740.0 1413.0,740.0 1413.0,728.3 1413.5,740.0 1413.9,659.4 1414.0,671.6 1414.0,695.0 1414.5,693.4 1414.8,720.7 1415.0,701.7 1415.0,735.7 1415.1,740.0 1415.7,661.1 1416.0,692.2 1416.0,723.0 1416.1,740.0 1416.5,658.3 1417.0,712.0 1417.0,726.2 1417.4,668.9 1417.6,740.0 1418.0,679.9 1418.0,702.5 1418.2,740.0 1418.6,658.8 1419.0,726.0 1419.0,701.0 1419.3,738.5 1419.6,683.5 1420.0,738.4 1420.0,740.0 1420.8,691.3 1421.0,740.0 1421.0,740.0 1421.8,678.6 1422.0,704.6 1422.0,697.5 1422.4,740.0 1422.8,686.0 1423.0,740.0 1423.0,737.0 1423.2,706.8 1423.3,740.0 1424.0,740.0 1424.0,740.0 1424.7,634.4 1425.0,690.0 1425.0,684.0 1425.6,740.0 1426.0,676.5 1426.0,678.1 1426.2,666.4 1426.4,740.0 1427.0,723.3 1427.0,707.8 1427.3,644.1 1427.6,740.0 1428.0,719.6 1428.0,701.5 1428.3,740.0 1429.0,727.8 1429.0,729.2 1429.1,740.0 1429.9,708.2 1430.0,721.1 1430.0,740.0 1430.3,660.8 1431.0,740.0 1431.0,726.6 1431.2,694.2 1431.3,740.0 1432.0,699.4 1432.0,705.4 1432.2,740.0 1432.7,677.5 1433.0,740.0 1433.0,740.0 1433.7,693.2 1434.0,740.0 1434.0,740.0 1434.5,682.4 1435.0,695.5 1435.0,716.5 1435.6,740.0 1436.0,678.1 1436.0,657.4 1436.4,651.9 1437.0,740.0 1437.0,736.3 1437.1,740.0 1438.0,658.3 1438.0,657.7 1438.9,740.0 1439.0,696.3 1439.0,686.6 1439.4,740.0 1439.6,662.0 1440.0,708.9 1440.0,682.7 1440.2,740.0 1441.0,683.6 1441.0,673.0 1441.2,740.0 1442.0,645.2 1442.0,631.7 1442.4,740.0 1443.0,720.7 1443.0,729.3 1443.3,740.0 1443.8,673.3 1444.0,695.8 1444.0,666.8 1444.1,655.5 1444.9,740.0 1445.0,712.4 1445.0,700.0 1445.2,667.8 1445.4,740.0 1446.0,740.0 1446.0,730.4 1446.4,740.0 1446.9,645.3 1447.0,660.4 1447.0,687.3 1447.3,685.8 1447.5,740.0 1448.0,713.6 1448.0,730.3 1448.1,740.0 1449.0,683.5 1449.0,690.0 1449.1,740.0 1449.4,647.8 1450.0,698.3 1450.0,670.5 1450.1,656.6 1450.3,717.5 1451.0,680.1 1451.0,676.4 1451.3,740.0 1451.8,665.4 1452.0,726.4 1452.0,731.4 1452.1,740.0 1452.4,683.6 1453.0,691.7 1453.0,693.0 1453.4,662.1 1453.7,740.0 1454.0,682.0 1454.0,682.3 1454.4,740.0 1455.0,653.7 1455.0,664.9 1455.2,663.1 1455.9,693.9 1456.0,692.6 1456.0,692.7 1456.2,678.8 1456.4,740.0 1457.0,740.0 1457.0,738.1 1457.1,740.0 1457.5,702.2 1458.0,706.6 1458.0,688.4 1458.1,670.5 1458.7,740.0 1459.0,725.1 1459.0,684.6 1459.3,740.0 1459.9,647.0 1460.0,651.8 1460.0,664.4 1460.2,740.0 1461.0,662.6 1461.0,661.4 1461.4,740.0 1462.0,692.2 1462.0,692.7 1462.1,740.0 1462.8,666.1 1463.0,725.7 1463.0,726.9 1463.1,740.0 1463.7,658.3 1464.0,677.8 1464.0,686.9 1464.5,740.0 1465.0,686.3 1465.0,680.4 1465.2,740.0 1466.0,740.0 1466.0,740.0 1466.6,668.0 1467.0,678.7 1467.0,689.8 1467.1,740.0 1467.9,655.3 1468.0,679.6 1468.0,727.3 1468.1,740.0 1468.6,687.1 1469.0,740.0 1469.0,740.0 1469.9,679.2 1470.0,703.0 1470.0,718.1 1470.3,740.0 1470.5,676.2 1471.0,718.5 1471.0,672.4 1471.1,656.8 1471.8,740.0 1472.0,718.0 1472.0,727.3 1472.2,740.0 1472.9,660.9 1473.0,672.9 1473.0,681.5 1473.2,740.0 1473.4,661.0 1474.0,691.7 1474.0,684.6 1474.2,740.0 1475.0,701.0 1475.0,687.4 1475.1,671.1 1475.2,740.0 1476.0,698.0 1476.0,712.9 1476.2,740.0 1477.0,656.1 1477.0,664.1 1477.3,648.4 1477.5,740.0 1478.0,740.0 1478.0,740.0 1478.4,679.5 1479.0,709.3 1479.0,734.6 1479.5,740.0 1480.0,654.3 1480.0,656.5 1480.2,740.0 1481.0,706.1 1481.0,702.2 1481.2,740.0 1481.8,675.3 1482.0,697.8 1482.0,740.0 1482.6,668.8 1483.0,740.0 1483.0,734.0 1483.1,740.0 1483.3,664.3 1484.0,722.0 1484.0,740.0 1484.6,673.9 1485.0,740.0 1485.0,740.0 1485.6,664.8 1486.0,740.0 1486.0,732.1 1486.5,740.0 1486.7,670.1 1487.0,705.7 1487.0,701.9 1487.4,740.0 1487.7,667.7 1488.0,711.7 1488.0,708.0 1488.3,740.0 1488.5,673.6 1489.0,735.4 1489.0,740.0 1489.5,681.9 1490.0,740.0 1490.0,740.0 1490.5,659.1 1491.0,740.0 1491.0,740.0 1491.3,666.5 1492.0,740.0 1492.0,740.0 1492.7,678.1 1493.0,734.2 1493.0,740.0 1493.5,716.7 1494.0,740.0 1494.0,740.0 1494.4,658.6 1495.0,740.0 1495.0,736.8 1495.2,740.0 1495.3,666.6 1496.0,740.0 1496.0,740.0 1496.8,686.0 1497.0,704.0 1497.0,699.7 1497.4,740.0 1497.6,653.0 1498.0,740.0 1498.0,740.0 1498.9,669.9 1499.0,701.2 1499.0,711.1 1499.2,740.0 1500.0,653.3 1500.0,655.6 1500.2,740.0 1501.0,740.0 1501.0,704.5 1501.2,654.4 1501.3,740.0 1502.0,719.3 1502.0,721.3 1502.1,678.2 1502.2,740.0 1503.0,712.8 1503.0,689.2 1503.4,740.0 1503.7,661.7 1504.0,686.7 1504.0,671.4 1504.1,669.4 1504.5,740.0 1505.0,692.6 1505.0,706.3 1505.3,740.0 1505.8,677.0 1506.0,705.7 1506.0,723.3 1506.1,740.0 1506.7,672.2 1507.0,726.1 1507.0,704.2 1507.2,661.4 1507.8,740.0 1508.0,735.9 1508.0,711.7 1508.3,643.3 1508.6,740.0 1509.0,727.3 1509.0,740.0 1509.5,688.7 1510.0,711.3 1510.0,721.6 1510.3,740.0 1510.6,671.4 1511.0,710.5 1511.0,722.5 1511.1,740.0 1511.2,671.3 1512.0,740.0 1512.0,740.0 1512.4,680.6 1513.0,740.0 1513.0,740.0 1513.5,650.5 1514.0,733.4 1514.0,724.6 1514.1,740.0 1514.8,662.4 1515.0,699.6 1515.0,685.6 1515.0,680.0 1515.1,740.0 1516.0,706.2 1516.0,688.1 1516.1,740.0 1516.7,662.7 1517.0,699.6 1517.0,696.9 1517.1,740.0 1517.3,664.1 1518.0,692.2 1518.0,689.2 1518.3,669.3 1518.7,740.0 1519.0,672.0 1519.0,652.9 1519.0,645.3 1519.5,740.0 1520.0,733.3 1520.0,732.5 1520.2,740.0 1520.7,666.6 1521.0,714.8 1521.0,705.4 1521.2,740.0 1521.5,660.3 1522.0,723.3 1522.0,708.3 1522.4,740.0 1522.9,665.1 1523.0,740.0 1523.0,740.0 1523.1,665.8 1524.0,691.8 1524.0,674.6 1524.1,663.9 1524.3,740.0 1525.0,725.8 1525.0,723.7 1525.4,740.0 1525.9,690.1 1526.0,740.0 1526.0,740.0 1526.8,673.4 1527.0,710.9 1527.0,686.3 1527.7,740.0 1528.0,647.1 1528.0,655.9 1528.1,740.0 1529.0,719.3 1529.0,707.0 1529.8,667.6 1530.0,740.0 1530.0,740.0 1530.0,705.9 1530.1,663.4 1530.2,740.0 1531.0,730.8 1531.0,717.9 1531.5,740.0 1532.0,674.4 1532.0,684.3 1532.0,716.1 1532.0,740.0 1532.5,661.2 1533.0,690.5 1533.0,675.3 1533.1,740.0 1533.9,664.4 1534.0,728.3 1534.0,714.9 1534.1,740.0 1534.8,651.2 1535.0,740.0 1535.0,733.9 1535.3,740.0 1535.6,657.1 1536.0,686.2 1536.0,682.1 1536.2,740.0 1536.3,660.8 1537.0,740.0 1537.0,740.0 1537.7,675.8 1538.0,727.9 1538.0,740.0 1538.8,685.3 1539.0,690.6 1539.0,684.0 1539.1,740.0 1539.7,655.1 1540.0,674.6 1540.0,677.4 1540.8,664.1 1541.0,740.0 1541.0,682.6 1541.0,662.1 1541.1,740.0 1541.6,649.9 1542.0,740.0 1542.0,691.0 1542.2,638.5 1542.3,740.0 1543.0,740.0 1543.0,740.0 1543.4,645.8 1544.0,740.0 1544.0,740.0 1544.4,689.5 1545.0,715.7 1545.0,695.9 1545.5,740.0 1545.6,652.8 1546.0,671.4 1546.0,667.8 1546.1,740.0 1547.0,655.2 1547.0,670.2 1547.1,740.0 1547.7,659.8 1548.0,693.5 1548.0,699.9 1548.3,740.0 1548.9,654.7 1549.0,740.0 1549.0,740.0 1550.0,663.9 1550.0,668.7 1550.6,648.3 1550.8,740.0 1551.0,677.4 1551.0,672.9 1551.4,740.0 1551.7,643.9 1552.0,667.4 1552.0,680.6 1552.1,740.0 1552.9,639.0 1553.0,692.5 1553.0,740.0 1553.5,636.3 1554.0,665.7 1554.0,683.6 1554.4,638.8 1554.5,740.0 1555.0,717.0 1555.0,682.0 1555.2,602.5 1555.6,729.6 1556.0,667.7 1556.0,644.2 1556.4,740.0 1556.7,612.4 1557.0,647.6 1557.0,637.0 1557.3,718.9 1557.8,85.2 1558.0,100.5 1558.0,106.6 1558.5,695.5 1559.0,691.2 1559.0,652.6 1559.2,620.7 1559.4,740.0 1560.0,648.0 1560.0,661.4 1560.1,740.0 1560.5,612.2 1561.0,644.7 1561.0,638.9 1561.3,623.5 1561.4,740.0 1562.0,727.9 1562.0,736.6 1562.2,617.1 1562.6,740.0 1563.0,713.0 1563.0,712.8 1563.1,740.0 1563.1,642.4 1564.0,740.0 1564.0,740.0 1564.5,651.4 1565.0,672.0 1565.0,666.9 1565.2,740.0 1565.5,639.9 1566.0,670.7 1566.0,661.2 1566.2,651.6 1566.3,740.0 1567.0,652.6 1567.0,651.6 1567.1,740.0 1567.6,642.3 1568.0,646.8 1568.0,647.1 1568.3,740.0 1569.0,704.9 1569.0,688.9 1569.2,656.0 1569.3,740.0 1570.0,657.8 1570.0,669.0 1570.1,662.3 1570.2,740.0 1571.0,706.3 1571.0,716.9 1571.4,740.0 1571.9,660.0 1572.0,684.5 1572.0,681.2 1572.1,740.0 1572.5,661.6 1573.0,740.0 1573.0,717.8 1573.1,664.2 1573.4,740.0 1574.0,726.7 1574.0,722.8 1574.2,653.1 1574.4,740.0 1575.0,740.0 1575.0,740.0 1575.4,669.2 1576.0,716.9 1576.0,710.0 1576.1,648.4 1576.3,740.0 1577.0,701.2 1577.0,686.6 1577.1,740.0 1577.3,671.0 1578.0,680.6 1578.0,655.4 1578.0,641.0 1578.1,740.0 1579.0,712.1 1579.0,695.4 1579.1,740.0 1579.9,663.5 1580.0,740.0 1580.0,735.3 1580.2,740.0 1580.7,674.1 1581.0,675.1 1581.0,692.0 1581.2,740.0 1581.9,665.9 1582.0,740.0 1582.0,740.0 1582.2,665.8 1583.0,740.0 1583.0,740.0 1583.4,669.9 1584.0,678.1 1584.0,683.8 1584.1,740.0 1584.5,674.6 1585.0,740.0 1585.0,732.1 1585.0,740.0 1585.4,654.2 1586.0,731.8 1586.0,740.0 1586.6,678.3 1587.0,740.0 1587.0,720.9 1587.2,740.0 1587.6,673.3 1588.0,695.9 1588.0,702.3 1588.3,740.0 1589.0,665.6 1589.0,665.3 1589.1,740.0 1590.0,718.8 1590.0,713.7 1590.1,740.0 1591.0,672.9 1591.0,674.2 1591.1,740.0 1592.0,682.2 1592.0,717.3 1592.0,740.0 1592.2,666.4 1593.0,710.6 1593.0,731.9 1593.0,740.0 1593.6,676.3 1594.0,740.0 1594.0,740.0 1594.7,687.9 1595.0,740.0 1595.0,740.0 1595.7,648.1 1596.0,733.7 1596.0,705.5 1596.1,740.0 1596.2,667.5 1597.0,740.0 1597.0,716.1 1597.1,740.0 1597.9,664.4 1598.0,696.2 1598.0,682.7 1598.0,673.4 1598.1,740.0 1599.0,732.3 1599.0,740.0 1599.9,664.2 1600.0,735.9 1600.0,734.5 1600.1,740.0 1600.2,672.4 1601.0,710.9 1601.0,717.5 1601.2,740.0 1601.6,666.0 1602.0,740.0 1602.0,740.0 1602.1,674.0 1603.0,740.0 1603.0,740.0 1603.5,658.0 1604.0,740.0 1604.0,740.0 1604.4,672.3 1605.0,695.2 1605.0,692.8 1605.0,740.0 1605.2,668.8 1606.0,705.6 1606.0,725.3 1606.0,740.0 1606.8,668.3 1607.0,740.0 1607.0,740.0 1608.0,665.7 1608.0,671.0 1608.2,740.0 1608.3,663.4 1609.0,718.9 1609.0,740.0 1609.5,657.7 1610.0,740.0 1610.0,740.0 1610.9,667.4 1611.0,740.0 1611.0,709.9 1611.2,740.0 1611.3,663.5 1612.0,700.7 1612.0,722.4 1612.0,740.0 1612.1,684.8 1613.0,740.0 1613.0,740.0 1613.2,678.9 1614.0,725.8 1614.0,721.6 1614.1,740.0 1614.9,665.5 1615.0,715.4 1615.0,700.0 1615.1,740.0 1615.2,658.2 1616.0,740.0 1616.0,740.0 1616.4,680.2 1617.0,740.0 1617.0,739.4 1617.3,676.4 1617.4,740.0 1618.0,693.2 1618.0,702.5 1618.1,740.0 1618.3,671.9 1619.0,711.0 1619.0,700.5 1619.1,740.0 1619.9,686.7 1620.0,728.4 1620.0,739.6 1620.1,740.0 1620.8,667.7 1621.0,740.0 1621.0,740.0 1621.9,681.8 1622.0,710.5 1622.0,740.0 1622.3,678.6 1623.0,740.0 1623.0,740.0 1623.2,686.7 1624.0,696.0 1624.0,719.1 1624.0,740.0 1624.2,674.3 1625.0,740.0 1625.0,740.0 1625.7,684.9 1626.0,698.1 1626.0,683.4 1626.1,740.0 1627.0,703.3 1627.0,700.2 1627.0,740.0 1627.2,667.9 1628.0,726.3 1628.0,732.0 1628.1,740.0 1628.9,672.8 1629.0,734.9 1629.0,731.7 1629.0,740.0 1629.5,673.8 1630.0,725.0 1630.0,722.5 1630.0,740.0 1630.8,682.8 1631.0,706.7 1631.0,703.9 1631.2,740.0 1631.3,690.4 1632.0,740.0 1632.0,740.0 1633.0,666.9 1633.0,695.7 1633.0,735.3 1633.0,681.0 1633.1,740.0 1634.0,740.0 1634.0,740.0 1634.2,687.1 1635.0,713.2 1635.0,703.4 1635.2,740.0 1635.5,676.2 1636.0,737.3 1636.0,740.0 1636.4,680.7 1637.0,717.0 1637.0,722.4 1637.1,683.3 1637.1,740.0 1638.0,702.4 1638.0,702.4 1638.1,740.0 1638.8,665.5 1639.0,715.5 1639.0,730.4 1639.0,740.0 1639.8,681.1 1640.0,725.4 1640.0,736.1 1640.0,740.0 1640.5,674.1 1641.0,698.3 1641.0,735.0 1641.0,740.0 1641.4,666.3 1642.0,690.0 1642.0,697.0 1642.0,740.0 1642.7,669.5 1643.0,706.0 1643.0,722.0 1643.0,740.0 1643.7,679.0 1644.0,740.0 1644.0,712.7 1644.2,740.0 1644.4,676.0 1645.0,708.5 1645.0,703.8 1645.1,740.0 1645.6,675.7 1646.0,699.1 1646.0,704.7 1646.2,740.0 1646.5,686.0 1647.0,712.2 1647.0,716.2 1647.0,740.0 1647.7,676.2 1648.0,719.7 1648.0,740.0 1648.5,560.8 1649.0,719.1 1649.0,735.0 1649.0,740.0 1649.7,680.6 1650.0,740.0 1650.0,735.0 1650.0,740.0 1650.5,669.6 1651.0,683.6 1651.0,676.1 1651.1,740.0 1651.4,673.4 1652.0,702.1 1652.0,708.1 1652.0,740.0 1652.6,676.6 1653.0,689.9 1653.0,693.2 1653.1,740.0 1653.8,681.0 1654.0,740.0 1654.0,740.0 1654.9,675.0 1655.0,740.0 1655.0,740.0 1655.9,660.4 1656.0,740.0 1656.0,730.4 1656.1,740.0 1656.4,665.7 1657.0,697.5 1657.0,689.4 1657.0,740.0 1657.8,669.1 1658.0,700.4 1658.0,693.8 1658.1,740.0 1658.9,680.6 1659.0,704.7 1659.0,711.9 1659.1,673.4 1659.2,740.0 1660.0,740.0 1660.0,740.0 1660.1,670.8 1661.0,701.1 1661.0,695.5 1661.1,740.0 1662.0,678.5 1662.0,696.5 1662.0,714.2 1662.0,740.0 1662.2,669.5 1663.0,688.4 1663.0,703.1 1663.0,740.0 1664.0,673.5 1664.0,677.2 1664.0,696.6 1664.0,740.0 1664.1,688.1 1665.0,740.0 1665.0,740.0 1665.8,676.8 1666.0,725.3 1666.0,708.0 1666.1,740.0 1666.1,688.5 1667.0,738.6 1667.0,712.8 1667.1,740.0 1667.4,682.1 1668.0,714.6 1668.0,712.7 1668.1,740.0 1668.2,667.2 1669.0,707.2 1669.0,735.1 1669.0,740.0 1669.3,670.2 1670.0,696.0 1670.0,737.5 1670.0,740.0 1670.4,669.1 1671.0,713.0 1671.0,708.7 1671.0,740.0 1671.5,678.2 1672.0,740.0 1672.0,740.0 1672.3,679.1 1673.0,702.7 1673.0,705.0 1673.1,740.0 1673.5,670.6 1674.0,740.0 1674.0,732.3 1674.2,740.0 1674.6,667.0 1675.0,684.6 1675.0,686.5 1675.1,740.0 1676.0,672.3 1676.0,678.6 1676.0,693.4 1676.0,740.0 1676.3,678.0 1677.0,736.7 1677.0,740.0 1677.8,670.9 1678.0,740.0 1678.0,740.0 1678.8,677.4 1679.0,697.3 1679.0,687.5 1679.0,740.0 1679.1,679.8 1680.0,734.6 1680.0,715.1 1680.0,740.0 1680.5,665.7 1681.0,712.7 1681.0,716.0 1681.0,740.0 1681.2,681.5 1682.0,740.0 1682.0,740.0 1682.8,682.2 1683.0,692.3 1683.0,689.9 1683.0,740.0 1683.3,679.7 1684.0,692.5 1684.0,691.6 1684.0,740.0 1684.9,675.6 1685.0,682.6 1685.0,679.5 1685.1,740.0 1685.4,671.4 1686.0,695.0 1686.0,711.3 1686.0,740.0 1686.0,673.9 1687.0,731.4 1687.0,740.0 1687.9,676.4 1688.0,716.4 1688.0,693.0 1688.0,740.0 1688.3,674.2 1689.0,740.0 1689.0,740.0 1689.2,670.9 1690.0,710.2 1690.0,698.5 1690.0,677.3 1690.1,740.0 1691.0,710.5 1691.0,736.4 1691.0,740.0 1691.2,664.9 1692.0,740.0 1692.0,738.1 1692.1,740.0 1692.3,681.5 1693.0,713.1 1693.0,731.1 1693.1,740.0 1693.7,691.0 1694.0,740.0 1694.0,739.2 1694.0,740.0 1694.4,674.9 1695.0,698.4 1695.0,702.0 1695.1,740.0 1695.6,676.8 1696.0,694.6 1696.0,686.6 1696.0,740.0 1696.8,675.0 1697.0,701.7 1697.0,704.2 1697.1,740.0 1697.3,680.3 1698.0,704.8 1698.0,704.8 1698.1,740.0 1698.3,673.3 1699.0,719.4 1699.0,702.8 1699.1,740.0 1699.4,681.4 1700.0,694.9 1700.0,721.2 1700.1,740.0 1700.2,677.2 1701.0,740.0 1701.0,740.0 1701.6,619.2 1702.0,686.9 1702.0,692.1 1702.1,740.0 1702.9,680.8 1703.0,740.0 1703.0,740.0 1703.4,673.2 1704.0,740.0 1704.0,740.0 1704.1,670.2 1705.0,725.4 1705.0,725.3 1705.1,680.6 1705.1,740.0 1706.0,688.0 1706.0,692.5 1706.1,740.0 1707.0,696.3 1707.0,690.4 1707.1,740.0 1707.8,676.9 1708.0,697.3 1708.0,698.3 1708.1,679.1 1708.2,740.0 1709.0,740.0 1709.0,740.0 1709.8,680.9 1710.0,736.0 1710.0,740.0 1710.5,674.6 1711.0,724.7 1711.0,724.3 1711.0,740.0 1711.1,679.6 1712.0,700.6 1712.0,709.3 1712.1,740.0 1712.6,679.9 1713.0,703.6 1713.0,703.0 1713.0,740.0 1713.3,677.9 1714.0,731.2 1714.0,740.0 1714.1,677.6 1715.0,740.0 1715.0,740.0 1715.6,674.0 1716.0,718.9 1716.0,706.6 1716.0,679.2 1716.1,740.0 1717.0,740.0 1717.0,735.5 1717.1,740.0 1717.1,671.6 1718.0,724.0 1718.0,712.9 1718.0,740.0 1718.9,677.8 1719.0,709.2 1719.0,694.6 1719.0,740.0 1719.1,667.2 1720.0,740.0 1720.0,740.0 1720.7,678.1 1721.0,703.0 1721.0,703.3 1721.1,740.0 1721.3,676.4 1722.0,704.8 1722.0,702.7 1722.0,740.0 1722.6,664.3 1723.0,734.4 1723.0,737.1 1723.1,740.0 1723.9,685.9 1724.0,723.3 1724.0,710.2 1724.2,687.4 1724.3,740.0 1725.0,708.7 1725.0,714.0 1725.0,740.0 1725.2,678.0 1726.0,700.6 1726.0,721.7 1726.0,740.0 1726.9,681.1 1727.0,717.8 1727.0,713.1 1727.0,740.0 1727.3,672.7 1728.0,689.3 1728.0,698.5 1728.1,740.0 1728.2,684.8 1729.0,696.2 1729.0,691.6 1729.0,740.0 1729.1,667.9 1730.0,721.1 1730.0,737.3 1730.0,740.0 1730.2,679.5 1731.0,703.1 1731.0,720.3 1731.0,740.0 1731.3,679.7 1732.0,705.0 1732.0,704.1 1732.0,740.0 1732.9,685.1 1733.0,709.0 1733.0,730.0 1733.0,740.0 1733.7,676.5 1734.0,740.0 1734.0,735.0 1734.0,740.0 1734.8,674.2 1735.0,679.4 1735.0,689.2 1735.0,740.0 1735.8,680.2 1736.0,735.2 1736.0,740.0 1736.3,672.8 1737.0,720.0 1737.0,704.0 1737.1,740.0 1737.3,678.9 1738.0,716.7 1738.0,715.6 1738.0,740.0 1738.5,675.0 1739.0,709.2 1739.0,709.9 1739.0,740.0 1739.2,648.5 1740.0,740.0 1740.0,736.4 1740.1,740.0 1740.6,674.4 1741.0,717.2 1741.0,724.8 1741.0,740.0 1741.7,663.4 1742.0,740.0 1742.0,724.1 1742.0,740.0 1742.3,678.4 1743.0,731.6 1743.0,740.0 1743.9,677.2 1744.0,696.7 1744.0,711.4 1744.0,740.0 1744.2,674.4 1745.0,720.1 1745.0,729.5 1745.0,740.0 1745.3,676.7 1746.0,680.8 1746.0,682.9 1746.0,740.0 1747.0,740.0 1747.0,725.8 1747.1,740.0 1747.5,675.3 1748.0,696.5 1748.0,717.9 1748.0,740.0 1748.1,686.1 1749.0,731.6 1749.0,718.7 1749.1,740.0 1749.7,670.1 1750.0,740.0 1750.0,740.0 1750.1,678.0 1751.0,691.2 1751.0,687.3 1751.0,740.0 1752.0,682.5 1752.0,718.1 1752.0,739.9 1752.0,740.0 1752.5,673.3 1753.0,720.4 1753.0,740.0 1753.2,670.0 1754.0,740.0 1754.0,740.0 1754.2,676.7 1755.0,727.5 1755.0,740.0 1756.0,667.6 1756.0,672.8 1756.0,676.0 1756.0,740.0 1757.0,728.8 1757.0,732.3 1757.1,740.0 1757.6,669.3 1758.0,707.0 1758.0,707.4 1758.1,740.0 1758.7,673.9 1759.0,695.0 1759.0,711.0 1759.0,740.0 1759.5,666.7 1760.0,736.6 1760.0,740.0 1760.4,670.6 1761.0,714.3 1761.0,727.5 1761.1,740.0 1762.0,685.8 1762.0,723.1 1762.0,710.3 1762.0,740.0 1762.9,676.7 1763.0,700.8 1763.0,697.8 1763.0,740.0 1763.8,666.5 1764.0,707.0 1764.0,710.2 1764.0,740.0 1764.2,664.5 1765.0,738.8 1765.0,725.5 1765.0,740.0 1765.6,680.7 1766.0,727.9 1766.0,713.4 1766.1,740.0 1766.3,665.8 1767.0,728.2 1767.0,733.5 1767.0,740.0 1767.3,663.4 1768.0,710.7 1768.0,730.8 1768.0,740.0 1768.4,601.2 1769.0,740.0 1769.0,740.0 1769.7,676.3 1770.0,740.0 1770.0,726.0 1770.0,740.0 1770.1,678.4 1771.0,709.3 1771.0,729.4 1771.0,740.0 1771.5,678.2 1772.0,686.0 1772.0,686.6 1772.1,740.0 1772.9,674.3 1773.0,681.4 1773.0,677.1 1773.0,740.0 1773.2,675.4 1774.0,714.2 1774.0,697.3 1774.0,740.0 1774.4,680.6 1775.0,740.0 1775.0,740.0 1775.6,672.4 1776.0,731.2 1776.0,728.7 1776.0,740.0 1777.0,680.1 1777.0,726.4 1777.0,726.7 1777.0,740.0 1777.8,680.7 1778.0,703.9 1778.0,717.6 1778.0,740.0 1778.6,672.3 1779.0,732.9 1779.0,740.0 1779.1,673.4 1780.0,722.4 1780.0,740.0 1780.2,671.3 1781.0,705.2 1781.0,700.7 1781.0,740.0 1781.7,681.1 1782.0,714.9 1782.0,693.5 1782.0,740.0 1782.4,671.4 1783.0,740.0 1783.0,740.0 1784.0,682.5 1784.0,740.0 1784.0,721.3 1784.0,740.0 1784.5,682.0 1785.0,713.3 1785.0,704.6 1785.1,740.0 1785.4,674.3 1786.0,700.1 1786.0,687.9 1786.0,677.8 1786.0,740.0 1787.0,697.5 1787.0,720.1 1787.0,740.0 1788.0,681.8 1788.0,714.8 1788.0,708.0 1788.0,740.0 1788.5,679.8 1789.0,726.1 1789.0,726.2 1789.0,740.0 1789.9,680.7 1790.0,708.0 1790.0,715.7 1790.0,740.0 1790.2,671.5 1791.0,740.0 1791.0,740.0 1791.1,679.6 1792.0,693.2 1792.0,689.8 1792.0,740.0 1792.3,655.8 1793.0,705.7 1793.0,728.1 1793.1,740.0 1793.8,672.4 1794.0,728.1 1794.0,740.0 1794.9,673.9 1795.0,698.3 1795.0,709.1 1795.1,740.0 1795.7,680.7 1796.0,721.7 1796.0,738.4 1796.1,740.0 1796.2,686.4 1797.0,713.1 1797.0,723.6 1797.0,740.0 1797.6,665.2 1798.0,707.8 1798.0,715.5 1798.0,740.0 1798.3,670.5 1799.0,712.1 1799.0,697.8 1799.0,740.0 1799.6,672.7 1800.0,740.0 1800.0,734.9 1800.0,740.0 1800.3,674.2 1801.0,703.9 1801.0,732.9 1801.0,740.0 1801.3,675.6 1802.0,690.9 1802.0,690.9 1802.0,740.0 1802.7,675.2 1803.0,711.5 1803.0,730.3 1803.0,740.0 1803.7,681.4 1804.0,709.1 1804.0,726.9 1804.0,677.2 1804.1,740.0 1805.0,740.0 1805.0,726.7 1805.0,740.0 1805.7,677.4 1806.0,740.0 1806.0,740.0 1806.2,678.2 1807.0,719.5 1807.0,739.4 1807.0,740.0 1807.1,674.7 1808.0,739.7 1808.0,740.0 1808.5,674.9 1809.0,708.2 1809.0,723.3 1809.0,740.0 1809.0,686.8 1810.0,740.0 1810.0,735.3 1810.1,740.0 1810.3,678.2 1811.0,703.4 1811.0,702.6 1811.0,740.0 1811.5,678.3 1812.0,708.4 1812.0,740.0 1812.5,621.4 1813.0,740.0 1813.0,716.6 1813.0,740.0 1813.9,682.5 1814.0,740.0 1814.0,740.0 1814.4,676.4 1815.0,707.8 1815.0,707.4 1815.0,740.0 1815.7,668.6 1816.0,685.3 1816.0,684.5 1816.0,740.0 1816.4,670.7 1817.0,740.0 1817.0,735.5 1817.1,740.0 1817.5,679.6 1818.0,718.4 1818.0,707.3 1818.1,740.0 1818.8,675.8 1819.0,735.0 1819.0,740.0 1819.2,679.3 1820.0,709.3 1820.0,710.2 1820.0,740.0 1820.0,668.2 1821.0,670.6 1821.0,665.1 1821.0,740.0 1822.0,698.9 1822.0,687.9 1822.0,740.0 1822.8,676.6 1823.0,688.5 1823.0,688.3 1823.0,740.0 1823.5,679.4 1824.0,693.7 1824.0,697.1 1824.0,740.0 1824.6,677.4 1825.0,740.0 1825.0,740.0 1825.4,668.7 1826.0,726.2 1826.0,712.8 1826.0,740.0 1826.6,675.1 1827.0,702.6 1827.0,721.3 1827.1,740.0 1827.7,669.8 1828.0,737.7 1828.0,728.2 1828.0,740.0 1828.6,679.2 1829.0,703.1 1829.0,696.4 1829.1,740.0 1830.0,625.6 1830.0,705.4 1830.0,717.5 1830.0,740.0 1830.1,684.0 1831.0,725.5 1831.0,704.1 1831.0,740.0 1831.2,670.7 1832.0,670.9 1832.0,673.0 1832.0,740.0 1833.0,729.6 1833.0,740.0 1833.6,668.5 1834.0,718.9 1834.0,714.2 1834.0,740.0 1834.3,680.6 1835.0,722.3 1835.0,715.7 1835.0,740.0 1835.4,675.4 1836.0,730.2 1836.0,729.2 1836.0,740.0 1836.6,684.1 1837.0,731.6 1837.0,734.5 1837.1,740.0 1838.0,682.6 1838.0,695.2 1838.0,687.6 1838.0,740.0 1838.9,685.8 1839.0,693.2 1839.0,698.6 1839.0,740.0 1839.3,684.3 1840.0,689.4 1840.0,686.0 1840.0,682.1 1840.1,740.0 1841.0,740.0 1841.0,740.0 1841.9,675.9 1842.0,726.7 1842.0,722.2 1842.0,740.0 1842.1,671.7 1843.0,731.5 1843.0,724.8 1843.0,740.0 1843.6,676.1 1844.0,713.3 1844.0,701.8 1844.0,740.0 1844.7,669.3 1845.0,679.5 1845.0,677.2 1845.1,740.0 1845.4,653.3 1846.0,740.0 1846.0,740.0 1846.5,673.9 1847.0,732.2 1847.0,728.0 1847.0,740.0 1847.7,675.7 1848.0,740.0 1848.0,740.0 1848.5,669.7 1849.0,726.6 1849.0,711.8 1849.0,740.0 1849.8,678.0 1850.0,740.0 1850.0,732.8 1850.0,740.0 1850.3,670.5 1851.0,704.8 1851.0,716.0 1851.0,740.0 1851.6,674.7 1852.0,708.4 1852.0,694.2 1852.0,740.0 1852.1,674.8 1853.0,683.8 1853.0,672.9 1853.0,740.0 1854.0,700.6 1854.0,723.4 1854.0,740.0 1854.6,683.5 1855.0,740.0 1855.0,737.7 1855.1,740.0 1855.8,680.3 1856.0,703.5 1856.0,693.6 1856.0,740.0 1856.9,668.6 1857.0,700.5 1857.0,738.3 1857.0,740.0 1857.1,676.6 1858.0,721.0 1858.0,720.8 1858.0,740.0 1858.5,671.5 1859.0,715.0 1859.0,733.6 1859.0,740.0 1859.1,634.4 1860.0,705.9 1860.0,701.6 1860.0,740.0 1860.2,674.7 1861.0,740.0 1861.0,736.4 1861.0,740.0 1861.4,680.5 1862.0,730.6 1862.0,722.3 1862.0,740.0 1862.4,673.5 1863.0,692.3 1863.0,691.4 1863.0,740.0 1863.7,681.4 1864.0,740.0 1864.0,740.0 1864.7,681.9 1865.0,686.1 1865.0,687.4 1865.0,740.0 1865.4,678.5 1866.0,740.0 1866.0,727.3 1866.0,740.0 1866.1,673.1 1867.0,740.0 1867.0,740.0 1867.4,675.7 1868.0,695.5 1868.0,703.3 1868.0,740.0 1868.5,677.0 1869.0,737.9 1869.0,711.2 1869.0,740.0 1869.1,666.7 1870.0,740.0 1870.0,740.0 1870.5,672.7 1871.0,732.4 1871.0,727.0 1871.0,740.0 1871.6,652.1 1872.0,682.8 1872.0,678.0 1872.0,740.0 1872.4,670.1 1873.0,740.0 1873.0,740.0 1873.2,672.1 1874.0,696.6 1874.0,719.5 1874.0,740.0 1874.7,674.4 1875.0,698.2 1875.0,701.6 1875.0,740.0 1875.6,675.7 1876.0,740.0 1876.0,731.6 1876.0,740.0 1876.5,675.4 1877.0,713.2 1877.0,721.3 1877.0,740.0 1877.5,681.2 1878.0,712.6 1878.0,718.3 1878.0,740.0 1878.6,680.0 1879.0,703.8 1879.0,705.8 1879.0,740.0 1879.1,675.4 1880.0,710.5 1880.0,706.5 1880.0,740.0 1880.1,675.9 1881.0,728.3 1881.0,739.2 1881.0,740.0 1881.1,664.7 1882.0,680.0 1882.0,685.7 1882.0,740.0 1882.2,675.0 1883.0,713.5 1883.0,679.3 1883.0,630.2 1883.1,740.0 1884.0,711.3 1884.0,704.8 1884.0,740.0 1884.2,673.5 1885.0,740.0 1885.0,740.0 1885.3,670.1 1886.0,723.2 1886.0,719.6 1886.0,740.0 1886.8,664.5 1887.0,706.8 1887.0,710.7 1887.0,740.0 1887.6,674.5 1888.0,740.0 1888.0,740.0 1888.4,674.1 1889.0,704.3 1889.0,700.5 1889.0,740.0 1889.9,667.3 1890.0,706.3 1890.0,717.8 1890.0,740.0 1890.4,670.5 1891.0,735.3 1891.0,711.5 1891.0,740.0 1891.6,675.1 1892.0,718.3 1892.0,713.7 1892.0,740.0 1892.9,672.7 1893.0,703.9 1893.0,718.5 1893.0,740.0 1893.1,673.3 1894.0,696.6 1894.0,697.4 1894.0,740.0 1894.0,680.3 1895.0,690.6 1895.0,694.7 1895.0,740.0 1895.6,675.2 1896.0,685.8 1896.0,695.1 1896.0,740.0 1896.8,676.9 1897.0,689.3 1897.0,696.3 1897.0,740.0 1897.3,679.4 1898.0,704.1 1898.0,714.2 1898.0,740.0 1898.3,679.5 1899.0,711.2 1899.0,701.0 1899.0,740.0 1900.0,679.4 1900.0,690.3 1900.0,692.7 1900.0,740.0 1900.6,675.3 1901.0,720.3 1901.0,740.0 1902.0,669.8 1902.0,680.0 1902.0,740.0 1902.6,672.6 1903.0,714.6 1903.0,721.3 1903.0,740.0 1903.2,642.3 1904.0,690.5 1904.0,681.6 1904.0,740.0 1904.8,678.8 1905.0,712.1 1905.0,694.9 1905.0,740.0 1905.4,675.2 1906.0,695.6 1906.0,698.2 1906.0,740.0 1906.9,664.9 1907.0,740.0 1907.0,740.0 1907.3,679.2 1908.0,730.8 1908.0,708.0 1908.0,740.0 1908.2,677.7 1909.0,714.4 1909.0,729.0 1909.0,740.0 1910.0,670.3 1910.0,700.4 1910.0,722.8 1910.0,740.0 1910.7,672.0 1911.0,734.8 1911.0,736.7 1911.0,740.0 1911.8,672.4 1912.0,699.1 1912.0,695.1 1912.0,740.0 1912.2,614.1 1913.0,740.0 1913.0,740.0 1914.0,679.5 1914.0,723.6 1914.0,705.2 1914.0,740.0 1914.5,674.8 1915.0,699.1 1915.0,698.2 1915.0,740.0 1915.1,669.9 1916.0,740.0 1916.0,740.0 1916.8,672.6 1917.0,725.6 1917.0,728.0 1917.0,740.0 1917.9,669.6 1918.0,716.7 1918.0,705.2 1918.0,740.0 1918.6,673.0 1919.0,697.9 1919.0,692.3 1919.0,740.0 1919.6,669.0 1920.0,723.8 1920.0,704.3 1920.0,740.0 1920.6,636.0 1921.0,728.7 1921.0,701.4 1921.0,740.0 1921.5,672.0 1922.0,714.2 1922.0,719.0 1922.0,740.0 1922.8,668.8 1923.0,709.3 1923.0,717.1 1923.0,740.0 1923.8,675.0 1924.0,728.4 1924.0,740.0 1924.4,674.7 1925.0,740.0 1925.0,724.5 1925.0,740.0 1925.9,679.4 1926.0,740.0 1926.0,719.7 1926.0,740.0 1926.7,681.3 1927.0,735.5 1927.0,740.0 1927.9,675.5 1928.0,717.0 1928.0,700.8 1928.0,740.0 1928.6,591.5 1929.0,721.8 1929.0,740.0 1929.3,670.6 1930.0,717.3 1930.0,709.0 1930.0,740.0 1930.0,669.5 1931.0,724.4 1931.0,704.2 1931.0,740.0 1931.9,674.0 1932.0,740.0 1932.0,740.0 1932.6,675.7 1933.0,720.5 1933.0,709.8 1933.0,740.0 1933.1,672.6 1934.0,720.8 1934.0,708.9 1934.0,740.0 1934.8,675.1 1935.0,722.1 1935.0,721.8 1935.0,740.0 1935.6,674.7 1936.0,721.7 1936.0,738.4 1936.0,740.0 1936.1,645.1 1937.0,690.2 1937.0,688.4 1937.0,740.0 1937.5,667.8 1938.0,713.9 1938.0,697.8 1938.0,740.0 1938.8,676.8 1939.0,714.2 1939.0,733.3 1939.0,740.0 1939.5,677.2 1940.0,723.5 1940.0,711.5 1940.0,740.0 1940.4,665.8 1941.0,701.8 1941.0,701.0 1941.0,740.0 1941.5,673.4 1942.0,708.9 1942.0,701.7 1942.0,740.0 1942.5,678.5 1943.0,740.0 1943.0,716.9 1943.0,740.0 1943.1,594.9 1944.0,701.6 1944.0,708.1 1944.0,740.0 1944.2,678.8 1945.0,711.2 1945.0,716.7 1945.0,740.0 1945.8,676.0 1946.0,709.7 1946.0,708.3 1946.0,740.0 1946.6,675.4 1947.0,740.0 1947.0,740.0 1947.2,676.2 1948.0,740.0 1948.0,740.0 1948.9,670.0 1949.0,740.0 1949.0,737.1 1949.0,740.0 1949.9,672.5 1950.0,724.7 1950.0,740.0 1950.6,675.1 1951.0,706.0 1951.0,727.4 1951.0,740.0 1951.3,675.3 1952.0,740.0 1952.0,740.0 1952.7,668.7 1953.0,731.3 1953.0,717.1 1953.0,740.0 1953.7,672.4 1954.0,725.1" fill="none" stroke="#c71414" stroke-opacity="0.74" stroke-width="2" stroke-linejoin="round"/><polygon points="1555.4,723 1557.8,662 1560.1,723" fill="#fff"/></g><rect x="1045.5" y="47.5" width="904" height="676" fill="none" stroke="#6c6c6c" stroke-width="1.2"/></svg><svg style="left:99px;top:769px;" width="14" height="14" viewBox="0 0 14 14"><circle cx="7" cy="7" r="6.3" fill="#0b5cbd"/><circle cx="7" cy="7" r="2.4" fill="#fff"/></svg><svg style="left:148px;top:769px;" width="14" height="14" viewBox="0 0 14 14"><circle cx="7" cy="7" r="6" fill="#fff" stroke="#333" stroke-width="0.9"/></svg><div style="left:297px;top:763px;width:123px;height:23px;background:#fff;box-sizing:border-box;border:1px solid #c9c9c9;border-radius:2px"></div><svg style="left:406px;top:771px;" width="10" height="6" viewBox="0 0 10 6"><polyline points="1,1 5,5 9,1" fill="none" stroke="#404040" stroke-width="1.1"/></svg><div style="left:512px;top:763px;width:70px;height:23px;background:#fff;box-sizing:border-box;border:1px solid #a9a9a9"></div><div style="left:565px;top:765px;width:15px;height:19px;background:#f2f2f2;box-sizing:border-box;border:1px solid #c4c4c4"></div><div style="left:565px;top:774px;width:15px;height:1px;background:#c4c4c4;"></div><svg style="left:569px;top:768px;" width="7" height="4" viewBox="0 0 7 4"><polygon points="0,4 7,4 3.5,0" fill="#000"/></svg><svg style="left:569px;top:777px;" width="7" height="4" viewBox="0 0 7 4"><polygon points="0,0 7,0 3.5,4" fill="#000"/></svg><div style="left:1081px;top:764px;width:62px;height:22px;background:#fff;box-sizing:border-box;border:1px solid #c9c9c9;border-radius:2px"></div><svg style="left:1129px;top:772px;" width="10" height="6" viewBox="0 0 10 6"><polyline points="1,1 5,5 9,1" fill="none" stroke="#404040" stroke-width="1.1"/></svg><div style="left:1213px;top:764px;width:181px;height:22px;background:#fff;box-sizing:border-box;border:1px solid #c9c9c9;border-radius:2px"></div><svg style="left:1380px;top:772px;" width="10" height="6" viewBox="0 0 10 6"><polyline points="1,1 5,5 9,1" fill="none" stroke="#404040" stroke-width="1.1"/></svg><div style="left:1468px;top:763px;width:70px;height:23px;background:#fff;box-sizing:border-box;border:1px solid #a9a9a9"></div><div style="left:1521px;top:765px;width:15px;height:19px;background:#f2f2f2;box-sizing:border-box;border:1px solid #c4c4c4"></div><div style="left:1521px;top:774px;width:15px;height:1px;background:#c4c4c4;"></div><svg style="left:1525px;top:768px;" width="7" height="4" viewBox="0 0 7 4"><polygon points="0,4 7,4 3.5,0" fill="#000"/></svg><svg style="left:1525px;top:777px;" width="7" height="4" viewBox="0 0 7 4"><polygon points="0,0 7,0 3.5,4" fill="#000"/></svg><div style="left:1545px;top:768px;width:13px;height:13px;background:#fff;box-sizing:border-box;border:1px solid #333;border-radius:2px"></div><div style="left:1654px;top:764px;width:73px;height:23px;background:#fdfdfd;box-sizing:border-box;border:1px solid #c2c2c2;border-radius:4px"></div><svg style="left:2px;top:815px;" width="16" height="16" viewBox="0 0 16 16"><rect width="16" height="16" fill="#2b4656"/><rect x="7" y="2" width="2.2" height="12" fill="#fff"/><rect x="2" y="7" width="12" height="2.2" fill="#fff"/></svg><svg style="left:83px;top:822px;" width="6" height="3" viewBox="0 0 6 3"><polygon points="0,0 6,0 3.0,3" fill="#000"/></svg><div style="left:96px;top:816px;width:1px;height:16px;background:#b4b8ba;"></div><div style="left:97px;top:816px;width:1px;height:16px;background:#fdfdfd;"></div><svg style="left:100px;top:815px;" width="16" height="16" viewBox="0 0 16 16"><rect width="16" height="16" fill="#2b4656"/><ellipse cx="5.5" cy="3.8" rx="4.5" ry="2" fill="#fff"/><ellipse cx="5.5" cy="3.8" rx="1.5" ry="0.6" fill="#5d8c94"/><rect x="1" y="6" width="6.5" height="2.4" rx="1.2" fill="#fff"/><rect x="1" y="9" width="6.5" height="2.4" rx="1.2" fill="#fff"/><rect x="1" y="12" width="9" height="2.6" rx="1.3" fill="#fff"/><polygon points="8,8 12,8 12,5 16,9 12,13 12,10 8,10" fill="#fff"/></svg><div style="left:214px;top:816px;width:1px;height:16px;background:#b4b8ba;"></div><div style="left:215px;top:816px;width:1px;height:16px;background:#fdfdfd;"></div><svg style="left:218px;top:815px;" width="16" height="16" viewBox="0 0 16 16"><rect width="16" height="16" fill="#2b4656"/><polygon points="5,3 12,8 5,13" fill="#fff"/></svg><div style="left:1962px;top:826px;width:4px;height:2px;background:#3a5a90;"></div><div style="left:3px;top:839px;width:973px;height:25px;background:#d9e3e6;"></div><div style="left:3px;top:864px;width:973px;height:1px;background:#a6a6a6;"></div><div style="left:3px;top:865px;width:973px;height:1px;background:#f1f4f5;"></div><div style="left:3px;top:866px;width:973px;height:131px;background:#d9e3e6;"></div><div style="left:92px;top:840px;width:75px;height:22px;background:#fff;"></div><div style="left:155px;top:840px;width:12px;height:22px;background:#f7f7f7;"></div><svg style="left:158px;top:850px;" width="5" height="3" viewBox="0 0 5 3"><polygon points="0,0 5,0 2.5,3" fill="#000"/></svg><svg style="left:170px;top:843px;" width="16" height="16" viewBox="0 0 16 16"><rect width="16" height="16" fill="#1f3b4c"/><rect x="1" y="3" width="14" height="2" fill="#fff"/><rect x="1" y="5" width="14" height="3" fill="#4d5f95"/><rect x="1" y="8" width="14" height="3" fill="#3f7c82"/><rect x="1" y="11" width="14" height="2" fill="#fff"/><polyline points="1.2,10.8 5.5,6.6 9.5,10.8 14.8,5" fill="none" stroke="#fff" stroke-width="1.1"/></svg><svg style="left:188px;top:850px;" width="5" height="3" viewBox="0 0 5 3"><polygon points="0,0 5,0 2.5,3" fill="#000"/></svg><svg style="left:200px;top:843px;" width="16" height="16" viewBox="0 0 16 16"><rect width="16" height="16" fill="#2b4656"/><g transform="translate(8,8)"><path d="M-1.72,-4.16 L-1.01,-4.38 L-0.95,-6.02 L0.95,-6.02 L1.01,-4.38 L1.72,-4.16 L2.38,-3.82 L3.59,-4.94 L4.94,-3.59 L3.82,-2.38 L4.16,-1.72 L4.38,-1.01 L6.02,-0.95 L6.02,0.95 L4.38,1.01 L4.16,1.72 L3.82,2.38 L4.94,3.59 L3.59,4.94 L2.38,3.82 L1.72,4.16 L1.01,4.38 L0.95,6.02 L-0.95,6.02 L-1.01,4.38 L-1.72,4.16 L-2.38,3.82 L-3.59,4.94 L-4.94,3.59 L-3.82,2.38 L-4.16,1.72 L-4.38,1.01 L-6.02,0.95 L-6.02,-0.95 L-4.38,-1.01 L-4.16,-1.72 L-3.82,-2.38 L-4.94,-3.59 L-3.59,-4.94 L-2.38,-3.82Z" fill="#fff" stroke="#fff" stroke-width="0.4" stroke-linejoin="round"/><circle r="1.9" fill="#2b4656"/></g></svg><div style="left:926px;top:844px;width:1px;height:16px;background:#b4b8ba;"></div><div style="left:927px;top:844px;width:1px;height:16px;background:#fdfdfd;"></div><svg style="left:934px;top:845px;" width="12" height="12" viewBox="0 0 12 12"><path d="M0,0 H4 V2 H2 V10 H10 V8 H12 V12 H0 Z" fill="#0e2f7e"/><path d="M6,0 H12 V6 Z" fill="#0e2f7e"/><line x1="5" y1="7" x2="9.5" y2="2.5" stroke="#0e2f7e" stroke-width="2"/></svg><svg style="left:958px;top:846px;" width="10" height="10" viewBox="0 0 10 10"><path d="M1,1 L9,9 M9,1 L1,9" stroke="#1a3848" stroke-width="2.2" stroke-linecap="round"/></svg><div style="left:250px;top:869px;width:717px;height:41px;background:#000;"></div><div style="left:250px;top:950px;width:717px;height:42px;background:#000;"></div><svg style="left:237px;top:893px;" width="11" height="11" viewBox="0 0 11 11"><polygon points="0,0 11,0 5.5,11" fill="#111"/></svg><svg style="left:237px;top:956px;" width="11" height="11" viewBox="0 0 11 11"><polygon points="0,0 11,0 5.5,11" fill="#111"/></svg><div style="left:5px;top:929px;width:245px;height:1px;background:#9c9c9c;"></div><div style="left:250px;top:928px;width:717px;height:1px;background:#000;"></div><div style="left:250px;top:929px;width:717px;height:3px;background:#e2e2e2;"></div><div style="left:250px;top:929px;width:717px;height:1px;background:#bdbdbd;"></div><div style="left:250px;top:910px;width:717px;height:18px;background:#d6d6d6;"></div><div style="left:251px;top:911px;width:715px;height:16px;background:#808080;"></div><div style="left:251px;top:911px;width:498px;height:16px;background:#00ff00;"></div><div style="left:251px;top:917px;width:510px;height:3px;background:#000;"></div><div style="left:250px;top:932px;width:717px;height:18px;background:#d6d6d6;"></div><div style="left:251px;top:933px;width:715px;height:16px;background:#808080;"></div><div style="left:251px;top:933px;width:498px;height:16px;background:#00ff00;"></div><div style="left:251px;top:939px;width:510px;height:3px;background:#000;"></div><div style="left:982px;top:839px;width:973px;height:25px;background:#d9e3e6;"></div><div style="left:982px;top:864px;width:973px;height:1px;background:#a6a6a6;"></div><div style="left:982px;top:865px;width:973px;height:1px;background:#f1f4f5;"></div><div style="left:982px;top:866px;width:973px;height:131px;background:#d9e3e6;"></div><div style="left:1094px;top:840px;width:75px;height:22px;background:#fff;"></div><div style="left:1157px;top:840px;width:12px;height:22px;background:#f7f7f7;"></div><svg style="left:1160px;top:850px;" width="5" height="3" viewBox="0 0 5 3"><polygon points="0,0 5,0 2.5,3" fill="#000"/></svg><svg style="left:1172px;top:843px;" width="16" height="16" viewBox="0 0 16 16"><rect width="16" height="16" fill="#1f3b4c"/><rect x="1" y="3" width="14" height="2" fill="#fff"/><rect x="1" y="5" width="14" height="3" fill="#4d5f95"/><rect x="1" y="8" width="14" height="3" fill="#3f7c82"/><rect x="1" y="11" width="14" height="2" fill="#fff"/><polyline points="1.2,10.8 5.5,6.6 9.5,10.8 14.8,5" fill="none" stroke="#fff" stroke-width="1.1"/></svg><svg style="left:1190px;top:850px;" width="5" height="3" viewBox="0 0 5 3"><polygon points="0,0 5,0 2.5,3" fill="#000"/></svg><svg style="left:1202px;top:843px;" width="16" height="16" viewBox="0 0 16 16"><rect width="16" height="16" fill="#2b4656"/><g transform="translate(8,8)"><path d="M-1.72,-4.16 L-1.01,-4.38 L-0.95,-6.02 L0.95,-6.02 L1.01,-4.38 L1.72,-4.16 L2.38,-3.82 L3.59,-4.94 L4.94,-3.59 L3.82,-2.38 L4.16,-1.72 L4.38,-1.01 L6.02,-0.95 L6.02,0.95 L4.38,1.01 L4.16,1.72 L3.82,2.38 L4.94,3.59 L3.59,4.94 L2.38,3.82 L1.72,4.16 L1.01,4.38 L0.95,6.02 L-0.95,6.02 L-1.01,4.38 L-1.72,4.16 L-2.38,3.82 L-3.59,4.94 L-4.94,3.59 L-3.82,2.38 L-4.16,1.72 L-4.38,1.01 L-6.02,0.95 L-6.02,-0.95 L-4.38,-1.01 L-4.16,-1.72 L-3.82,-2.38 L-4.94,-3.59 L-3.59,-4.94 L-2.38,-3.82Z" fill="#fff" stroke="#fff" stroke-width="0.4" stroke-linejoin="round"/><circle r="1.9" fill="#2b4656"/></g></svg><div style="left:1905px;top:844px;width:1px;height:16px;background:#b4b8ba;"></div><div style="left:1906px;top:844px;width:1px;height:16px;background:#fdfdfd;"></div><svg style="left:1913px;top:845px;" width="12" height="12" viewBox="0 0 12 12"><path d="M0,0 H4 V2 H2 V10 H10 V8 H12 V12 H0 Z" fill="#0e2f7e"/><path d="M6,0 H12 V6 Z" fill="#0e2f7e"/><line x1="5" y1="7" x2="9.5" y2="2.5" stroke="#0e2f7e" stroke-width="2"/></svg><svg style="left:1937px;top:846px;" width="10" height="10" viewBox="0 0 10 10"><path d="M1,1 L9,9 M9,1 L1,9" stroke="#1a3848" stroke-width="2.2" stroke-linecap="round"/></svg><div style="left:1229px;top:869px;width:717px;height:41px;background:#000;"></div><div style="left:1229px;top:950px;width:717px;height:42px;background:#000;"></div><svg style="left:1216px;top:893px;" width="11" height="11" viewBox="0 0 11 11"><polygon points="0,0 11,0 5.5,11" fill="#111"/></svg><svg style="left:1216px;top:956px;" width="11" height="11" viewBox="0 0 11 11"><polygon points="0,0 11,0 5.5,11" fill="#111"/></svg><div style="left:984px;top:929px;width:245px;height:1px;background:#9c9c9c;"></div><div style="left:1229px;top:928px;width:717px;height:1px;background:#000;"></div><div style="left:1229px;top:929px;width:717px;height:3px;background:#e2e2e2;"></div><div style="left:1229px;top:929px;width:717px;height:1px;background:#bdbdbd;"></div><div style="left:1229px;top:910px;width:717px;height:18px;background:#d6d6d6;"></div><div style="left:1230px;top:911px;width:715px;height:16px;background:#808080;"></div><div style="left:1230px;top:911px;width:12px;height:16px;background:#00ff00;"></div><div style="left:1239px;top:917px;width:705px;height:3px;background:#000;"></div><div style="left:1229px;top:932px;width:717px;height:18px;background:#d6d6d6;"></div><div style="left:1230px;top:933px;width:715px;height:16px;background:#808080;"></div><div style="left:1230px;top:933px;width:12px;height:16px;background:#00ff00;"></div><div style="left:1239px;top:939px;width:705px;height:3px;background:#000;"></div><div style="left:3px;top:1003px;width:973px;height:25px;background:#d9e3e6;"></div><div style="left:3px;top:1028px;width:973px;height:1px;background:#a6a6a6;"></div><div style="left:3px;top:1029px;width:973px;height:1px;background:#f1f4f5;"></div><div style="left:3px;top:1030px;width:973px;height:131px;background:#d9e3e6;"></div><div style="left:93px;top:1004px;width:75px;height:22px;background:#fff;"></div><div style="left:156px;top:1004px;width:12px;height:22px;background:#f7f7f7;"></div><svg style="left:159px;top:1014px;" width="5" height="3" viewBox="0 0 5 3"><polygon points="0,0 5,0 2.5,3" fill="#000"/></svg><svg style="left:171px;top:1007px;" width="16" height="16" viewBox="0 0 16 16"><rect width="16" height="16" fill="#1f3b4c"/><rect x="1" y="3" width="14" height="2" fill="#fff"/><rect x="1" y="5" width="14" height="3" fill="#4d5f95"/><rect x="1" y="8" width="14" height="3" fill="#3f7c82"/><rect x="1" y="11" width="14" height="2" fill="#fff"/><polyline points="1.2,10.8 5.5,6.6 9.5,10.8 14.8,5" fill="none" stroke="#fff" stroke-width="1.1"/></svg><svg style="left:189px;top:1014px;" width="5" height="3" viewBox="0 0 5 3"><polygon points="0,0 5,0 2.5,3" fill="#000"/></svg><svg style="left:201px;top:1007px;" width="16" height="16" viewBox="0 0 16 16"><rect width="16" height="16" fill="#2b4656"/><g transform="translate(8,8)"><path d="M-1.72,-4.16 L-1.01,-4.38 L-0.95,-6.02 L0.95,-6.02 L1.01,-4.38 L1.72,-4.16 L2.38,-3.82 L3.59,-4.94 L4.94,-3.59 L3.82,-2.38 L4.16,-1.72 L4.38,-1.01 L6.02,-0.95 L6.02,0.95 L4.38,1.01 L4.16,1.72 L3.82,2.38 L4.94,3.59 L3.59,4.94 L2.38,3.82 L1.72,4.16 L1.01,4.38 L0.95,6.02 L-0.95,6.02 L-1.01,4.38 L-1.72,4.16 L-2.38,3.82 L-3.59,4.94 L-4.94,3.59 L-3.82,2.38 L-4.16,1.72 L-4.38,1.01 L-6.02,0.95 L-6.02,-0.95 L-4.38,-1.01 L-4.16,-1.72 L-3.82,-2.38 L-4.94,-3.59 L-3.59,-4.94 L-2.38,-3.82Z" fill="#fff" stroke="#fff" stroke-width="0.4" stroke-linejoin="round"/><circle r="1.9" fill="#2b4656"/></g></svg><div style="left:926px;top:1008px;width:1px;height:16px;background:#b4b8ba;"></div><div style="left:927px;top:1008px;width:1px;height:16px;background:#fdfdfd;"></div><svg style="left:934px;top:1009px;" width="12" height="12" viewBox="0 0 12 12"><path d="M0,0 H4 V2 H2 V10 H10 V8 H12 V12 H0 Z" fill="#0e2f7e"/><path d="M6,0 H12 V6 Z" fill="#0e2f7e"/><line x1="5" y1="7" x2="9.5" y2="2.5" stroke="#0e2f7e" stroke-width="2"/></svg><svg style="left:958px;top:1010px;" width="10" height="10" viewBox="0 0 10 10"><path d="M1,1 L9,9 M9,1 L1,9" stroke="#1a3848" stroke-width="2.2" stroke-linecap="round"/></svg><div style="left:250px;top:1033px;width:717px;height:41px;background:#000;"></div><div style="left:250px;top:1114px;width:717px;height:42px;background:#000;"></div><svg style="left:237px;top:1057px;" width="11" height="11" viewBox="0 0 11 11"><polygon points="0,0 11,0 5.5,11" fill="#111"/></svg><svg style="left:237px;top:1120px;" width="11" height="11" viewBox="0 0 11 11"><polygon points="0,0 11,0 5.5,11" fill="#111"/></svg><div style="left:5px;top:1093px;width:245px;height:1px;background:#9c9c9c;"></div><div style="left:250px;top:1092px;width:717px;height:1px;background:#000;"></div><div style="left:250px;top:1093px;width:717px;height:3px;background:#e2e2e2;"></div><div style="left:250px;top:1093px;width:717px;height:1px;background:#bdbdbd;"></div><div style="left:250px;top:1074px;width:717px;height:18px;background:#d6d6d6;"></div><div style="left:251px;top:1075px;width:715px;height:16px;background:#808080;"></div><div style="left:251px;top:1075px;width:406px;height:16px;background:#00ff00;"></div><div style="left:251px;top:1081px;width:715px;height:3px;background:#000;"></div><div style="left:250px;top:1096px;width:717px;height:18px;background:#d6d6d6;"></div><div style="left:251px;top:1097px;width:715px;height:16px;background:#808080;"></div><div style="left:251px;top:1097px;width:406px;height:16px;background:#00ff00;"></div><div style="left:251px;top:1103px;width:715px;height:3px;background:#000;"></div><div style="left:982px;top:1003px;width:973px;height:25px;background:#d9e3e6;"></div><div style="left:982px;top:1028px;width:973px;height:1px;background:#a6a6a6;"></div><div style="left:982px;top:1029px;width:973px;height:1px;background:#f1f4f5;"></div><div style="left:982px;top:1030px;width:973px;height:131px;background:#d9e3e6;"></div><div style="left:1043px;top:1004px;width:75px;height:22px;background:#fff;"></div><div style="left:1106px;top:1004px;width:12px;height:22px;background:#f7f7f7;"></div><svg style="left:1109px;top:1014px;" width="5" height="3" viewBox="0 0 5 3"><polygon points="0,0 5,0 2.5,3" fill="#000"/></svg><svg style="left:1121px;top:1007px;" width="16" height="16" viewBox="0 0 16 16"><rect width="16" height="16" fill="#1f3b4c"/><rect x="1" y="3" width="14" height="2" fill="#fff"/><rect x="1" y="5" width="14" height="3" fill="#4d5f95"/><rect x="1" y="8" width="14" height="3" fill="#3f7c82"/><rect x="1" y="11" width="14" height="2" fill="#fff"/><polyline points="1.2,10.8 5.5,6.6 9.5,10.8 14.8,5" fill="none" stroke="#fff" stroke-width="1.1"/></svg><svg style="left:1139px;top:1014px;" width="5" height="3" viewBox="0 0 5 3"><polygon points="0,0 5,0 2.5,3" fill="#000"/></svg><svg style="left:1151px;top:1007px;" width="16" height="16" viewBox="0 0 16 16"><rect width="16" height="16" fill="#2b4656"/><g transform="translate(8,8)"><path d="M-1.72,-4.16 L-1.01,-4.38 L-0.95,-6.02 L0.95,-6.02 L1.01,-4.38 L1.72,-4.16 L2.38,-3.82 L3.59,-4.94 L4.94,-3.59 L3.82,-2.38 L4.16,-1.72 L4.38,-1.01 L6.02,-0.95 L6.02,0.95 L4.38,1.01 L4.16,1.72 L3.82,2.38 L4.94,3.59 L3.59,4.94 L2.38,3.82 L1.72,4.16 L1.01,4.38 L0.95,6.02 L-0.95,6.02 L-1.01,4.38 L-1.72,4.16 L-2.38,3.82 L-3.59,4.94 L-4.94,3.59 L-3.82,2.38 L-4.16,1.72 L-4.38,1.01 L-6.02,0.95 L-6.02,-0.95 L-4.38,-1.01 L-4.16,-1.72 L-3.82,-2.38 L-4.94,-3.59 L-3.59,-4.94 L-2.38,-3.82Z" fill="#fff" stroke="#fff" stroke-width="0.4" stroke-linejoin="round"/><circle r="1.9" fill="#2b4656"/></g></svg><div style="left:1905px;top:1008px;width:1px;height:16px;background:#b4b8ba;"></div><div style="left:1906px;top:1008px;width:1px;height:16px;background:#fdfdfd;"></div><svg style="left:1913px;top:1009px;" width="12" height="12" viewBox="0 0 12 12"><path d="M0,0 H4 V2 H2 V10 H10 V8 H12 V12 H0 Z" fill="#0e2f7e"/><path d="M6,0 H12 V6 Z" fill="#0e2f7e"/><line x1="5" y1="7" x2="9.5" y2="2.5" stroke="#0e2f7e" stroke-width="2"/></svg><svg style="left:1937px;top:1010px;" width="10" height="10" viewBox="0 0 10 10"><path d="M1,1 L9,9 M9,1 L1,9" stroke="#1a3848" stroke-width="2.2" stroke-linecap="round"/></svg><div style="left:1229px;top:1033px;width:717px;height:41px;background:#000;"></div><div style="left:1229px;top:1114px;width:717px;height:42px;background:#000;"></div><svg style="left:1216px;top:1057px;" width="11" height="11" viewBox="0 0 11 11"><polygon points="0,0 11,0 5.5,11" fill="#111"/></svg><svg style="left:1216px;top:1120px;" width="11" height="11" viewBox="0 0 11 11"><polygon points="0,0 11,0 5.5,11" fill="#111"/></svg><div style="left:984px;top:1093px;width:245px;height:1px;background:#9c9c9c;"></div><div style="left:1229px;top:1092px;width:717px;height:1px;background:#000;"></div><div style="left:1229px;top:1093px;width:717px;height:3px;background:#e2e2e2;"></div><div style="left:1229px;top:1093px;width:717px;height:1px;background:#bdbdbd;"></div><div style="left:1229px;top:1074px;width:717px;height:18px;background:#d6d6d6;"></div><div style="left:1230px;top:1075px;width:715px;height:16px;background:#808080;"></div><div style="left:1230px;top:1075px;width:705px;height:16px;background:#00ff00;"></div><div style="left:1230px;top:1081px;width:706px;height:3px;background:#000;"></div><div style="left:1229px;top:1096px;width:717px;height:18px;background:#d6d6d6;"></div><div style="left:1230px;top:1097px;width:715px;height:16px;background:#808080;"></div><div style="left:1230px;top:1097px;width:704px;height:16px;background:#00ff00;"></div><div style="left:1230px;top:1103px;width:705px;height:3px;background:#000;"></div><div class="t" style="left:16.2px;top:385px;font-size:12.46px;line-height:12.46px;color:#000;transform:translate(-50%,-50%) rotate(-90deg) scaleX(0.9253846153846154) ;transform-origin:50% 50%;">Instantaneous Level (V)</div><div class="t" style="left:1007.5px;top:385.2px;font-size:12.46px;line-height:12.46px;color:#000;transform:translate(-50%,-50%) rotate(-90deg) scaleX(0.9161764705882353) ;transform-origin:50% 50%;">Level (dBrA)</div><div class="t" style="left:7.00px;top:8px;font-size:15.43px;line-height:15.43px;color:#000;font-weight:bold;transform:scaleX(0.9935);transform-origin:0 0;">Scope</div><div class="t" style="left:62.00px;top:8px;font-size:13.04px;line-height:13.04px;color:#101010;-webkit-text-stroke:0.25px #101010;transform:scaleX(0.7667);transform-origin:0 0;">X:</div><div class="t" style="left:81.00px;top:9px;font-size:13.04px;line-height:13.04px;color:#101010;-webkit-text-stroke:0.25px #101010;transform:scaleX(0.8333);transform-origin:0 0;">s</div><div class="t" style="left:155.80px;top:8px;font-size:13.04px;line-height:13.04px;color:#101010;-webkit-text-stroke:0.25px #101010;transform:scaleX(0.8545);transform-origin:0 0;">Y:</div><div class="t" style="left:174.20px;top:10px;font-size:12.46px;line-height:12.46px;color:#101010;-webkit-text-stroke:0.25px #101010;transform:scaleX(0.9875);transform-origin:0 0;">V</div><div class="t" style="left:998.02px;top:8px;font-size:15.43px;line-height:15.43px;color:#000;font-weight:bold;transform:scaleX(0.8815);transform-origin:0 0;">FFT</div><div class="t" style="left:1032.20px;top:8px;font-size:13.04px;line-height:13.04px;color:#101010;-webkit-text-stroke:0.25px #101010;transform:scaleX(0.7667);transform-origin:0 0;">X:</div><div class="t" style="left:1050.31px;top:10px;font-size:12.61px;line-height:12.61px;color:#101010;-webkit-text-stroke:0.25px #101010;transform:scaleX(0.9929);transform-origin:0 0;">Hz</div><div class="t" style="left:1126.20px;top:8px;font-size:13.04px;line-height:13.04px;color:#101010;-webkit-text-stroke:0.25px #101010;transform:scaleX(0.8273);transform-origin:0 0;">Y:</div><div class="t" style="left:1145.40px;top:10px;font-size:12.61px;line-height:12.61px;color:#101010;-webkit-text-stroke:0.25px #101010;transform:scaleX(0.9036);transform-origin:0 0;">dBrA</div><div class="t" style="left:44.00px;top:55px;font-size:12.46px;line-height:12.46px;color:#000;-webkit-text-stroke:0.25px #000;">4.5</div><div class="t" style="left:44.00px;top:91px;font-size:12.46px;line-height:12.46px;color:#000;-webkit-text-stroke:0.25px #000;">4.0</div><div class="t" style="left:44.00px;top:127px;font-size:12.46px;line-height:12.46px;color:#000;-webkit-text-stroke:0.25px #000;">3.5</div><div class="t" style="left:44.00px;top:163px;font-size:12.46px;line-height:12.46px;color:#000;-webkit-text-stroke:0.25px #000;">3.0</div><div class="t" style="left:44.00px;top:199px;font-size:12.46px;line-height:12.46px;color:#000;-webkit-text-stroke:0.25px #000;">2.5</div><div class="t" style="left:44.00px;top:235px;font-size:12.46px;line-height:12.46px;color:#000;-webkit-text-stroke:0.25px #000;">2.0</div><div class="t" style="left:44.00px;top:271px;font-size:12.46px;line-height:12.46px;color:#000;-webkit-text-stroke:0.25px #000;">1.5</div><div class="t" style="left:44.00px;top:307px;font-size:12.46px;line-height:12.46px;color:#000;-webkit-text-stroke:0.25px #000;">1.0</div><div class="t" style="left:30.00px;top:343px;font-size:12.46px;line-height:12.46px;color:#000;-webkit-text-stroke:0.25px #000;">500m</div><div class="t" style="left:54.00px;top:379px;font-size:12.46px;line-height:12.46px;color:#000;-webkit-text-stroke:0.25px #000;">0</div><div class="t" style="left:26.00px;top:415px;font-size:12.46px;line-height:12.46px;color:#000;-webkit-text-stroke:0.25px #000;">-500m</div><div class="t" style="left:40.00px;top:451px;font-size:12.46px;line-height:12.46px;color:#000;-webkit-text-stroke:0.25px #000;">-1.0</div><div class="t" style="left:40.00px;top:487px;font-size:12.46px;line-height:12.46px;color:#000;-webkit-text-stroke:0.25px #000;">-1.5</div><div class="t" style="left:40.00px;top:523px;font-size:12.46px;line-height:12.46px;color:#000;-webkit-text-stroke:0.25px #000;">-2.0</div><div class="t" style="left:40.00px;top:559px;font-size:12.46px;line-height:12.46px;color:#000;-webkit-text-stroke:0.25px #000;">-2.5</div><div class="t" style="left:40.00px;top:595px;font-size:12.46px;line-height:12.46px;color:#000;-webkit-text-stroke:0.25px #000;">-3.0</div><div class="t" style="left:40.00px;top:631px;font-size:12.46px;line-height:12.46px;color:#000;-webkit-text-stroke:0.25px #000;">-3.5</div><div class="t" style="left:40.00px;top:667px;font-size:12.46px;line-height:12.46px;color:#000;-webkit-text-stroke:0.25px #000;">-4.0</div><div class="t" style="left:40.00px;top:703px;font-size:12.46px;line-height:12.46px;color:#000;-webkit-text-stroke:0.25px #000;">-4.5</div><div class="t" style="left:62.00px;top:728px;font-size:12.46px;line-height:12.46px;color:#000;-webkit-text-stroke:0.25px #000;">0</div><div class="t" style="left:111.47px;top:728px;font-size:12.46px;line-height:12.46px;color:#000;-webkit-text-stroke:0.25px #000;">200u</div><div class="t" style="left:170.93px;top:728px;font-size:12.46px;line-height:12.46px;color:#000;-webkit-text-stroke:0.25px #000;">400u</div><div class="t" style="left:230.40px;top:728px;font-size:12.46px;line-height:12.46px;color:#000;-webkit-text-stroke:0.25px #000;">600u</div><div class="t" style="left:289.87px;top:728px;font-size:12.46px;line-height:12.46px;color:#000;-webkit-text-stroke:0.25px #000;">800u</div><div class="t" style="left:348.83px;top:728px;font-size:12.46px;line-height:12.46px;color:#000;-webkit-text-stroke:0.25px #000;">1.0m</div><div class="t" style="left:408.30px;top:728px;font-size:12.46px;line-height:12.46px;color:#000;-webkit-text-stroke:0.25px #000;">1.2m</div><div class="t" style="left:467.77px;top:728px;font-size:12.46px;line-height:12.46px;color:#000;-webkit-text-stroke:0.25px #000;">1.4m</div><div class="t" style="left:527.24px;top:728px;font-size:12.46px;line-height:12.46px;color:#000;-webkit-text-stroke:0.25px #000;">1.6m</div><div class="t" style="left:586.70px;top:728px;font-size:12.46px;line-height:12.46px;color:#000;-webkit-text-stroke:0.25px #000;">1.8m</div><div class="t" style="left:646.67px;top:728px;font-size:12.46px;line-height:12.46px;color:#000;-webkit-text-stroke:0.25px #000;">2.0m</div><div class="t" style="left:706.14px;top:728px;font-size:12.46px;line-height:12.46px;color:#000;-webkit-text-stroke:0.25px #000;">2.2m</div><div class="t" style="left:765.60px;top:728px;font-size:12.46px;line-height:12.46px;color:#000;-webkit-text-stroke:0.25px #000;">2.4m</div><div class="t" style="left:825.07px;top:728px;font-size:12.46px;line-height:12.46px;color:#000;-webkit-text-stroke:0.25px #000;">2.6m</div><div class="t" style="left:884.54px;top:728px;font-size:12.46px;line-height:12.46px;color:#000;-webkit-text-stroke:0.25px #000;">2.8m</div><div class="t" style="left:944.00px;top:728px;font-size:12.46px;line-height:12.46px;color:#000;-webkit-text-stroke:0.25px #000;">3.0m</div><div class="t" style="left:492.20px;top:740px;font-size:12.17px;line-height:12.17px;color:#000;-webkit-text-stroke:0.25px #000;transform:scaleX(0.8818);transform-origin:0 0;">Time (s)</div><div class="t" style="left:494.76px;top:34px;font-size:12.46px;line-height:12.46px;color:#000;-webkit-text-stroke:0.25px #000;transform:scaleX(0.8912);transform-origin:0 0;">Scope</div><div class="t" style="left:1020.00px;top:41px;font-size:12.46px;line-height:12.46px;color:#000;-webkit-text-stroke:0.25px #000;">+10</div><div class="t" style="left:1034.00px;top:79px;font-size:12.46px;line-height:12.46px;color:#000;-webkit-text-stroke:0.25px #000;">0</div><div class="t" style="left:1023.00px;top:116px;font-size:12.46px;line-height:12.46px;color:#000;-webkit-text-stroke:0.25px #000;">-10</div><div class="t" style="left:1023.00px;top:154px;font-size:12.46px;line-height:12.46px;color:#000;-webkit-text-stroke:0.25px #000;">-20</div><div class="t" style="left:1023.00px;top:191px;font-size:12.46px;line-height:12.46px;color:#000;-webkit-text-stroke:0.25px #000;">-30</div><div class="t" style="left:1023.00px;top:229px;font-size:12.46px;line-height:12.46px;color:#000;-webkit-text-stroke:0.25px #000;">-40</div><div class="t" style="left:1023.00px;top:266px;font-size:12.46px;line-height:12.46px;color:#000;-webkit-text-stroke:0.25px #000;">-50</div><div class="t" style="left:1023.00px;top:304px;font-size:12.46px;line-height:12.46px;color:#000;-webkit-text-stroke:0.25px #000;">-60</div><div class="t" style="left:1023.00px;top:341px;font-size:12.46px;line-height:12.46px;color:#000;-webkit-text-stroke:0.25px #000;">-70</div><div class="t" style="left:1023.00px;top:379px;font-size:12.46px;line-height:12.46px;color:#000;-webkit-text-stroke:0.25px #000;">-80</div><div class="t" style="left:1023.00px;top:417px;font-size:12.46px;line-height:12.46px;color:#000;-webkit-text-stroke:0.25px #000;">-90</div><div class="t" style="left:1016.00px;top:454px;font-size:12.46px;line-height:12.46px;color:#000;-webkit-text-stroke:0.25px #000;">-100</div><div class="t" style="left:1017.00px;top:492px;font-size:12.46px;line-height:12.46px;color:#000;-webkit-text-stroke:0.25px #000;">-110</div><div class="t" style="left:1016.00px;top:529px;font-size:12.46px;line-height:12.46px;color:#000;-webkit-text-stroke:0.25px #000;">-120</div><div class="t" style="left:1016.00px;top:567px;font-size:12.46px;line-height:12.46px;color:#000;-webkit-text-stroke:0.25px #000;">-130</div><div class="t" style="left:1016.00px;top:604px;font-size:12.46px;line-height:12.46px;color:#000;-webkit-text-stroke:0.25px #000;">-140</div><div class="t" style="left:1016.00px;top:642px;font-size:12.46px;line-height:12.46px;color:#000;-webkit-text-stroke:0.25px #000;">-150</div><div class="t" style="left:1016.00px;top:679px;font-size:12.46px;line-height:12.46px;color:#000;-webkit-text-stroke:0.25px #000;">-160</div><div class="t" style="left:1016.00px;top:717px;font-size:12.46px;line-height:12.46px;color:#000;-webkit-text-stroke:0.25px #000;">-170</div><div class="t" style="left:1038.50px;top:728px;font-size:12.46px;line-height:12.46px;color:#000;-webkit-text-stroke:0.25px #000;">20</div><div class="t" style="left:1091.56px;top:728px;font-size:12.46px;line-height:12.46px;color:#000;-webkit-text-stroke:0.25px #000;">30</div><div class="t" style="left:1158.40px;top:728px;font-size:12.46px;line-height:12.46px;color:#000;-webkit-text-stroke:0.25px #000;">50</div><div class="t" style="left:1245.10px;top:728px;font-size:12.46px;line-height:12.46px;color:#000;-webkit-text-stroke:0.25px #000;">100</div><div class="t" style="left:1336.30px;top:728px;font-size:12.46px;line-height:12.46px;color:#000;-webkit-text-stroke:0.25px #000;">200</div><div class="t" style="left:1389.36px;top:728px;font-size:12.46px;line-height:12.46px;color:#000;-webkit-text-stroke:0.25px #000;">300</div><div class="t" style="left:1456.20px;top:728px;font-size:12.46px;line-height:12.46px;color:#000;-webkit-text-stroke:0.25px #000;">500</div><div class="t" style="left:1550.40px;top:728px;font-size:12.46px;line-height:12.46px;color:#000;-webkit-text-stroke:0.25px #000;">1k</div><div class="t" style="left:1641.60px;top:728px;font-size:12.46px;line-height:12.46px;color:#000;-webkit-text-stroke:0.25px #000;">2k</div><div class="t" style="left:1694.66px;top:728px;font-size:12.46px;line-height:12.46px;color:#000;-webkit-text-stroke:0.25px #000;">3k</div><div class="t" style="left:1761.50px;top:728px;font-size:12.46px;line-height:12.46px;color:#000;-webkit-text-stroke:0.25px #000;">5k</div><div class="t" style="left:1848.20px;top:728px;font-size:12.46px;line-height:12.46px;color:#000;-webkit-text-stroke:0.25px #000;">10k</div><div class="t" style="left:1939.40px;top:728px;font-size:12.46px;line-height:12.46px;color:#000;-webkit-text-stroke:0.25px #000;">20k</div><div class="t" style="left:1455.83px;top:740px;font-size:12.17px;line-height:12.17px;color:#000;-webkit-text-stroke:0.25px #000;transform:scaleX(0.9707);transform-origin:0 0;">Frequency (Hz)</div><div class="t" style="left:1486.99px;top:34px;font-size:12.46px;line-height:12.46px;color:#000;-webkit-text-stroke:0.25px #000;transform:scaleX(0.9136);transform-origin:0 0;">FFT</div><div class="t" style="left:16.03px;top:770px;font-size:12.61px;line-height:12.61px;color:#000;-webkit-text-stroke:0.25px #000;transform:scaleX(0.9706);transform-origin:0 0;">Interpolated:</div><div class="t" style="left:119.50px;top:770px;font-size:12.61px;line-height:12.61px;color:#000;-webkit-text-stroke:0.25px #000;transform:scaleX(0.9688);transform-origin:0 0;">On</div><div class="t" style="left:168.50px;top:770px;font-size:12.61px;line-height:12.61px;color:#000;-webkit-text-stroke:0.25px #000;transform:scaleX(0.9706);transform-origin:0 0;">Off</div><div class="t" style="left:205.39px;top:770px;font-size:12.61px;line-height:12.61px;color:#000;-webkit-text-stroke:0.25px #000;transform:scaleX(0.9140);transform-origin:0 0;">Show Residual:</div><div class="t" style="left:302.00px;top:770px;font-size:12.61px;line-height:12.61px;color:#000;-webkit-text-stroke:0.25px #000;transform:scaleX(0.9706);transform-origin:0 0;">Off</div><div class="t" style="left:430.39px;top:770px;font-size:12.61px;line-height:12.61px;color:#000;-webkit-text-stroke:0.25px #000;transform:scaleX(0.9120);transform-origin:0 0;">Show Cycles:</div><div class="t" style="left:515.00px;top:768px;font-size:12.61px;line-height:12.61px;color:#000;-webkit-text-stroke:0.25px #000;transform:scaleX(0.7857);transform-origin:0 0;">3</div><div class="t" style="left:1007.51px;top:769px;font-size:12.61px;line-height:12.61px;color:#000;-webkit-text-stroke:0.25px #000;transform:scaleX(0.8896);transform-origin:0 0;">FFT Length:</div><div class="t" style="left:1085.00px;top:769px;font-size:12.61px;line-height:12.61px;color:#000;-webkit-text-stroke:0.25px #000;transform:scaleX(0.8621);transform-origin:0 0;">256K</div><div class="t" style="left:1154.00px;top:769px;font-size:12.61px;line-height:12.61px;color:#000;-webkit-text-stroke:0.25px #000;transform:scaleX(0.9583);transform-origin:0 0;">Window:</div><div class="t" style="left:1217.20px;top:769px;font-size:12.61px;line-height:12.61px;color:#000;-webkit-text-stroke:0.25px #000;transform:scaleX(0.9455);transform-origin:0 0;">AP-Equiripple</div><div class="t" style="left:1405.00px;top:769px;font-size:12.61px;line-height:12.61px;color:#000;-webkit-text-stroke:0.25px #000;transform:scaleX(0.9018);transform-origin:0 0;">Averages:</div><div class="t" style="left:1471.00px;top:767px;font-size:12.61px;line-height:12.61px;color:#000;-webkit-text-stroke:0.25px #000;transform:scaleX(0.7857);transform-origin:0 0;">3</div><div class="t" style="left:1563.09px;top:769px;font-size:12.61px;line-height:12.61px;color:#000;-webkit-text-stroke:0.25px #000;transform:scaleX(0.9072);transform-origin:0 0;">Show Residual</div><div class="t" style="left:1675.77px;top:769px;font-size:13.04px;line-height:13.04px;color:#000;-webkit-text-stroke:0.25px #000;transform:scaleX(0.8303);transform-origin:0 0;">Reset</div><div class="t" style="left:21.00px;top:817px;font-size:12.61px;line-height:12.61px;color:#000;-webkit-text-stroke:0.25px #000;transform:scaleX(0.9655);transform-origin:0 0;">Add Meter</div><div class="t" style="left:118.10px;top:817px;font-size:12.61px;line-height:12.61px;color:#000;-webkit-text-stroke:0.25px #000;transform:scaleX(0.9043);transform-origin:0 0;">Save Meter Data</div><div class="t" style="left:236.06px;top:817px;font-size:12.61px;line-height:12.61px;color:#000;-webkit-text-stroke:0.25px #000;transform:scaleX(0.9388);transform-origin:0 0;">Regulate</div><div class="t" style="left:5.97px;top:844px;font-size:15.22px;line-height:15.22px;color:#000;font-weight:bold;transform:scaleX(1.0267);transform-origin:0 0;">RMS Level</div><div class="t" style="left:96.00px;top:846px;font-size:12.46px;line-height:12.46px;color:#101010;-webkit-text-stroke:0.25px #101010;transform:scaleX(0.9643);transform-origin:0 0;">Vrms</div><div class="t" style="left:10.15px;top:883px;font-size:33.33px;line-height:33.33px;color:#000;transform:scaleX(0.8475);transform-origin:0 0;-webkit-text-stroke:0.7px #d9e3e6;">Ch1</div><div class="t" style="left:10.11px;top:946px;font-size:33.33px;line-height:33.33px;color:#000;transform:scaleX(0.8864);transform-origin:0 0;-webkit-text-stroke:0.7px #d9e3e6;">Ch2</div><div class="t" style="left:775.09px;top:875px;font-size:33.33px;line-height:33.33px;color:#00ff00;transform:scaleX(0.9099);transform-origin:0 0;-webkit-text-stroke:0.35px #000;">2.039</div><div class="t" style="left:888.80px;top:875px;font-size:33.33px;line-height:33.33px;color:#00ff00;transform:scaleX(0.9316);transform-origin:0 0;-webkit-text-stroke:0.35px #000;">Vrms</div><div class="t" style="left:775.09px;top:955px;font-size:33.33px;line-height:33.33px;color:#00ff00;transform:scaleX(0.9099);transform-origin:0 0;-webkit-text-stroke:0.35px #000;">2.040</div><div class="t" style="left:888.80px;top:955px;font-size:33.33px;line-height:33.33px;color:#00ff00;transform:scaleX(0.9316);transform-origin:0 0;-webkit-text-stroke:0.35px #000;">Vrms</div><div class="t" style="left:986.00px;top:844px;font-size:15.22px;line-height:15.22px;color:#000;font-weight:bold;transform:scaleX(1.0796);transform-origin:0 0;">THD+N Ratio</div><div class="t" style="left:1098.00px;top:846px;font-size:12.46px;line-height:12.46px;color:#101010;-webkit-text-stroke:0.25px #101010;transform:scaleX(0.8182);transform-origin:0 0;">%</div><div class="t" style="left:989.15px;top:883px;font-size:33.33px;line-height:33.33px;color:#000;transform:scaleX(0.8475);transform-origin:0 0;-webkit-text-stroke:0.7px #d9e3e6;">Ch1</div><div class="t" style="left:989.11px;top:946px;font-size:33.33px;line-height:33.33px;color:#000;transform:scaleX(0.8864);transform-origin:0 0;-webkit-text-stroke:0.7px #d9e3e6;">Ch2</div><div class="t" style="left:1765.49px;top:875px;font-size:33.33px;line-height:33.33px;color:#00ff00;transform:scaleX(0.9124);transform-origin:0 0;-webkit-text-stroke:0.35px #000;">0.000124</div><div class="t" style="left:1914.52px;top:875px;font-size:33.33px;line-height:33.33px;color:#00ff00;transform:scaleX(0.8786);transform-origin:0 0;-webkit-text-stroke:0.35px #000;">%</div><div class="t" style="left:1765.49px;top:955px;font-size:33.33px;line-height:33.33px;color:#00ff00;transform:scaleX(0.9124);transform-origin:0 0;-webkit-text-stroke:0.35px #000;">0.000126</div><div class="t" style="left:1914.52px;top:955px;font-size:33.33px;line-height:33.33px;color:#00ff00;transform:scaleX(0.8786);transform-origin:0 0;-webkit-text-stroke:0.35px #000;">%</div><div class="t" style="left:5.96px;top:1008px;font-size:15.22px;line-height:15.22px;color:#000;font-weight:bold;transform:scaleX(1.0395);transform-origin:0 0;">Frequency</div><div class="t" style="left:96.00px;top:1010px;font-size:12.46px;line-height:12.46px;color:#101010;-webkit-text-stroke:0.25px #101010;">Hz</div><div class="t" style="left:10.15px;top:1047px;font-size:33.33px;line-height:33.33px;color:#000;transform:scaleX(0.8475);transform-origin:0 0;-webkit-text-stroke:0.7px #d9e3e6;">Ch1</div><div class="t" style="left:10.11px;top:1110px;font-size:33.33px;line-height:33.33px;color:#000;transform:scaleX(0.8864);transform-origin:0 0;-webkit-text-stroke:0.7px #d9e3e6;">Ch2</div><div class="t" style="left:768.82px;top:1039px;font-size:33.33px;line-height:33.33px;color:#00ff00;transform:scaleX(0.8907);transform-origin:0 0;-webkit-text-stroke:0.35px #000;">1.00000</div><div class="t" style="left:908.49px;top:1039px;font-size:33.33px;line-height:33.33px;color:#00ff00;transform:scaleX(0.9556);transform-origin:0 0;-webkit-text-stroke:0.35px #000;">kHz</div><div class="t" style="left:768.82px;top:1119px;font-size:33.33px;line-height:33.33px;color:#00ff00;transform:scaleX(0.8907);transform-origin:0 0;-webkit-text-stroke:0.35px #000;">1.00000</div><div class="t" style="left:908.49px;top:1119px;font-size:33.33px;line-height:33.33px;color:#00ff00;transform:scaleX(0.9556);transform-origin:0 0;-webkit-text-stroke:0.35px #000;">kHz</div><div class="t" style="left:986.00px;top:1008px;font-size:15.22px;line-height:15.22px;color:#000;font-weight:bold;transform:scaleX(1.0426);transform-origin:0 0;">SINAD</div><div class="t" style="left:1047.00px;top:1010px;font-size:12.46px;line-height:12.46px;color:#101010;-webkit-text-stroke:0.25px #101010;transform:scaleX(0.9333);transform-origin:0 0;">dB</div><div class="t" style="left:989.15px;top:1047px;font-size:33.33px;line-height:33.33px;color:#000;transform:scaleX(0.8475);transform-origin:0 0;-webkit-text-stroke:0.7px #d9e3e6;">Ch1</div><div class="t" style="left:989.11px;top:1110px;font-size:33.33px;line-height:33.33px;color:#000;transform:scaleX(0.8864);transform-origin:0 0;-webkit-text-stroke:0.7px #d9e3e6;">Ch2</div><div class="t" style="left:1768.97px;top:1039px;font-size:33.33px;line-height:33.33px;color:#00ff00;transform:scaleX(0.9165);transform-origin:0 0;-webkit-text-stroke:0.35px #000;">118.164</div><div class="t" style="left:1903.07px;top:1039px;font-size:33.33px;line-height:33.33px;color:#00ff00;transform:scaleX(0.9263);transform-origin:0 0;-webkit-text-stroke:0.35px #000;">dB</div><div class="t" style="left:1768.97px;top:1119px;font-size:33.33px;line-height:33.33px;color:#00ff00;transform:scaleX(0.9165);transform-origin:0 0;-webkit-text-stroke:0.35px #000;">118.017</div><div class="t" style="left:1903.07px;top:1119px;font-size:33.33px;line-height:33.33px;color:#00ff00;transform:scaleX(0.9263);transform-origin:0 0;-webkit-text-stroke:0.35px #000;">dB</div></body></html>
